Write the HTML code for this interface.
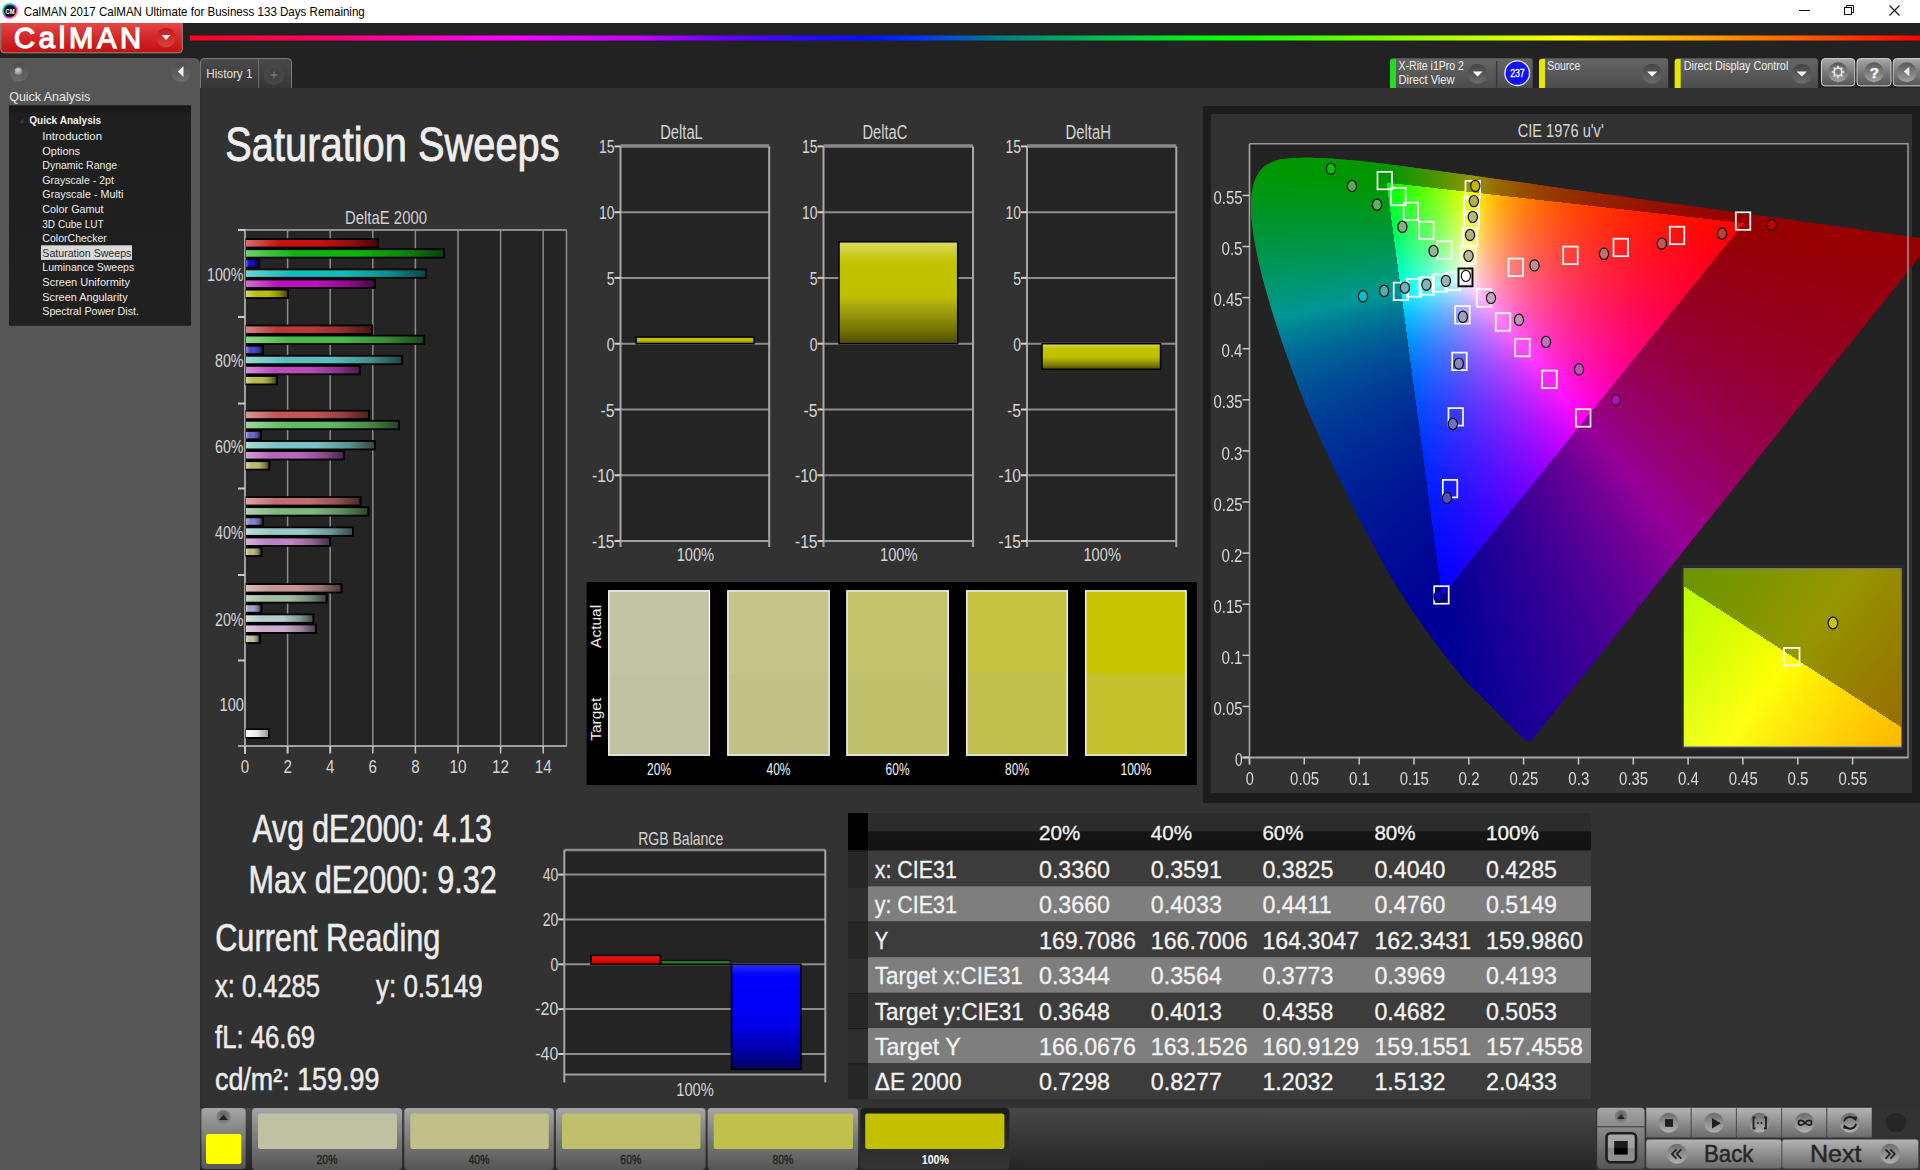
<!DOCTYPE html>
<html><head><meta charset="utf-8"><title>CalMAN</title>
<style>
html,body{margin:0;padding:0;background:#323232;overflow:hidden;width:1920px;height:1170px}
svg{position:absolute;left:0;top:0;font-family:"Liberation Sans",sans-serif}
#cie{position:absolute;left:0;top:0}
</style></head><body>
<svg id="base" width="1920" height="1170" viewBox="0 0 1920 1170">
<defs><linearGradient id="iconring" x1="0" y1="0" x2="1" y2="1"><stop offset="0" stop-color="#00d000"/><stop offset="0.35" stop-color="#00c0ff"/><stop offset="0.6" stop-color="#ff00ff"/><stop offset="1" stop-color="#ffe000"/></linearGradient><linearGradient id="logo" x1="0" y1="0" x2="0" y2="1"><stop offset="0.000" stop-color="#e54848"/><stop offset="0.450" stop-color="#d42a2a"/><stop offset="1.000" stop-color="#c41010"/></linearGradient><linearGradient id="logodd" x1="0" y1="0" x2="0" y2="1"><stop offset="0.000" stop-color="#c0181c"/><stop offset="1.000" stop-color="#e04040"/></linearGradient><linearGradient id="rainbow" gradientUnits="userSpaceOnUse" x1="190" y1="0" x2="1920" y2="0"><stop offset="0.000" stop-color="#ff0020"/><stop offset="0.073" stop-color="#ff0060"/><stop offset="0.180" stop-color="#ff00ff"/><stop offset="0.260" stop-color="#c000ff"/><stop offset="0.312" stop-color="#6000ff"/><stop offset="0.392" stop-color="#0010ff"/><stop offset="0.418" stop-color="#0030ff"/><stop offset="0.471" stop-color="#008080"/><stop offset="0.545" stop-color="#00d040"/><stop offset="0.597" stop-color="#00ff00"/><stop offset="0.717" stop-color="#a0ff00"/><stop offset="0.796" stop-color="#ffff00"/><stop offset="0.876" stop-color="#ffa000"/><stop offset="0.929" stop-color="#ff6000"/><stop offset="1.000" stop-color="#ff0000"/></linearGradient><linearGradient id="side" x1="0" y1="0" x2="0" y2="1"><stop offset="0.000" stop-color="#585858"/><stop offset="0.050" stop-color="#555555"/><stop offset="1.000" stop-color="#555555"/></linearGradient><linearGradient id="glow" x1="0" y1="0" x2="0" y2="1"><stop offset="0.000" stop-color="#4e4e4e"/><stop offset="1.000" stop-color="#6c6c6c"/></linearGradient><radialGradient id="ball" cx="0.4" cy="0.35" r="0.7"><stop offset="0" stop-color="#d8d8d8"/><stop offset="1" stop-color="#7a7a7a"/></radialGradient><linearGradient id="tree" x1="0" y1="0" x2="0" y2="1"><stop offset="0.000" stop-color="#151515"/><stop offset="0.040" stop-color="#1f1f1f"/><stop offset="1.000" stop-color="#202020"/></linearGradient><linearGradient id="tab" x1="0" y1="0" x2="0" y2="1"><stop offset="0.000" stop-color="#4a4a4a"/><stop offset="1.000" stop-color="#363636"/></linearGradient><radialGradient id="plus"><stop offset="0" stop-color="#3a3a3a"/><stop offset="1" stop-color="#4a4a4a"/></radialGradient><linearGradient id="tbox" x1="0" y1="0" x2="0" y2="1"><stop offset="0.000" stop-color="#666666"/><stop offset="1.000" stop-color="#4c4c4c"/></linearGradient><linearGradient id="ddc" x1="0" y1="0" x2="0" y2="1"><stop offset="0.000" stop-color="#444444"/><stop offset="1.000" stop-color="#6c6c6c"/></linearGradient><linearGradient id="sqbtn" x1="0" y1="0" x2="0" y2="1"><stop offset="0.000" stop-color="#a8a8a8"/><stop offset="0.500" stop-color="#7a7a7a"/><stop offset="1.000" stop-color="#555555"/></linearGradient><linearGradient id="sqc" x1="0" y1="0" x2="0" y2="1"><stop offset="0.000" stop-color="#585858"/><stop offset="1.000" stop-color="#a2a2a2"/></linearGradient><linearGradient id="bar0" x1="0" y1="0" x2="1" y2="0"><stop offset="0.000" stop-color="#dd6b6b"/><stop offset="0.250" stop-color="#c81010"/><stop offset="0.550" stop-color="#c81010"/><stop offset="0.800" stop-color="#960c0c"/><stop offset="1.000" stop-color="#4c0606"/></linearGradient><linearGradient id="bar1" x1="0" y1="0" x2="1" y2="0"><stop offset="0.000" stop-color="#6bd06b"/><stop offset="0.250" stop-color="#10b410"/><stop offset="0.550" stop-color="#10b410"/><stop offset="0.800" stop-color="#0c870c"/><stop offset="1.000" stop-color="#064406"/></linearGradient><linearGradient id="bar2" x1="0" y1="0" x2="1" y2="0"><stop offset="0.000" stop-color="#6b6bdd"/><stop offset="0.250" stop-color="#1010c8"/><stop offset="0.550" stop-color="#1010c8"/><stop offset="0.800" stop-color="#0c0c96"/><stop offset="1.000" stop-color="#06064c"/></linearGradient><linearGradient id="bar3" x1="0" y1="0" x2="1" y2="0"><stop offset="0.000" stop-color="#6bd5d5"/><stop offset="0.250" stop-color="#10bcbc"/><stop offset="0.550" stop-color="#10bcbc"/><stop offset="0.800" stop-color="#0c8d8d"/><stop offset="1.000" stop-color="#064747"/></linearGradient><linearGradient id="bar4" x1="0" y1="0" x2="1" y2="0"><stop offset="0.000" stop-color="#d56bd5"/><stop offset="0.250" stop-color="#bc10bc"/><stop offset="0.550" stop-color="#bc10bc"/><stop offset="0.800" stop-color="#8d0c8d"/><stop offset="1.000" stop-color="#470647"/></linearGradient><linearGradient id="bar5" x1="0" y1="0" x2="1" y2="0"><stop offset="0.000" stop-color="#d5d56b"/><stop offset="0.250" stop-color="#bcbc10"/><stop offset="0.550" stop-color="#bcbc10"/><stop offset="0.800" stop-color="#8d8d0c"/><stop offset="1.000" stop-color="#474706"/></linearGradient><linearGradient id="bar6" x1="0" y1="0" x2="1" y2="0"><stop offset="0.000" stop-color="#d48484"/><stop offset="0.250" stop-color="#ba3838"/><stop offset="0.550" stop-color="#ba3838"/><stop offset="0.800" stop-color="#8c2a2a"/><stop offset="1.000" stop-color="#471515"/></linearGradient><linearGradient id="bar7" x1="0" y1="0" x2="1" y2="0"><stop offset="0.000" stop-color="#8cd48c"/><stop offset="0.250" stop-color="#46b946"/><stop offset="0.550" stop-color="#46b946"/><stop offset="0.800" stop-color="#348b34"/><stop offset="1.000" stop-color="#1b461b"/></linearGradient><linearGradient id="bar8" x1="0" y1="0" x2="1" y2="0"><stop offset="0.000" stop-color="#8c8cdd"/><stop offset="0.250" stop-color="#4646c8"/><stop offset="0.550" stop-color="#4646c8"/><stop offset="0.800" stop-color="#343496"/><stop offset="1.000" stop-color="#1b1b4c"/></linearGradient><linearGradient id="bar9" x1="0" y1="0" x2="1" y2="0"><stop offset="0.000" stop-color="#99d7d7"/><stop offset="0.250" stop-color="#5abebe"/><stop offset="0.550" stop-color="#5abebe"/><stop offset="0.800" stop-color="#448e8e"/><stop offset="1.000" stop-color="#224848"/></linearGradient><linearGradient id="bar10" x1="0" y1="0" x2="1" y2="0"><stop offset="0.000" stop-color="#d48fd7"/><stop offset="0.250" stop-color="#b94bbe"/><stop offset="0.550" stop-color="#b94bbe"/><stop offset="0.800" stop-color="#8b388e"/><stop offset="1.000" stop-color="#461c48"/></linearGradient><linearGradient id="bar11" x1="0" y1="0" x2="1" y2="0"><stop offset="0.000" stop-color="#d4d492"/><stop offset="0.250" stop-color="#b9b950"/><stop offset="0.550" stop-color="#b9b950"/><stop offset="0.800" stop-color="#8b8b3c"/><stop offset="1.000" stop-color="#46461e"/></linearGradient><linearGradient id="bar12" x1="0" y1="0" x2="1" y2="0"><stop offset="0.000" stop-color="#da9696"/><stop offset="0.250" stop-color="#c35555"/><stop offset="0.550" stop-color="#c35555"/><stop offset="0.800" stop-color="#924040"/><stop offset="1.000" stop-color="#4a2020"/></linearGradient><linearGradient id="bar13" x1="0" y1="0" x2="1" y2="0"><stop offset="0.000" stop-color="#9fd49f"/><stop offset="0.250" stop-color="#64b964"/><stop offset="0.550" stop-color="#64b964"/><stop offset="0.800" stop-color="#4b8b4b"/><stop offset="1.000" stop-color="#264626"/></linearGradient><linearGradient id="bar14" x1="0" y1="0" x2="1" y2="0"><stop offset="0.000" stop-color="#a2a2dd"/><stop offset="0.250" stop-color="#6969c8"/><stop offset="0.550" stop-color="#6969c8"/><stop offset="0.800" stop-color="#4f4f96"/><stop offset="1.000" stop-color="#28284c"/></linearGradient><linearGradient id="bar15" x1="0" y1="0" x2="1" y2="0"><stop offset="0.000" stop-color="#abdada"/><stop offset="0.250" stop-color="#78c3c3"/><stop offset="0.550" stop-color="#78c3c3"/><stop offset="0.800" stop-color="#5a9292"/><stop offset="1.000" stop-color="#2e4a4a"/></linearGradient><linearGradient id="bar16" x1="0" y1="0" x2="1" y2="0"><stop offset="0.000" stop-color="#d49fd7"/><stop offset="0.250" stop-color="#b964be"/><stop offset="0.550" stop-color="#b964be"/><stop offset="0.800" stop-color="#8b4b8e"/><stop offset="1.000" stop-color="#462648"/></linearGradient><linearGradient id="bar17" x1="0" y1="0" x2="1" y2="0"><stop offset="0.000" stop-color="#d4d4a2"/><stop offset="0.250" stop-color="#b9b969"/><stop offset="0.550" stop-color="#b9b969"/><stop offset="0.800" stop-color="#8b8b4f"/><stop offset="1.000" stop-color="#464628"/></linearGradient><linearGradient id="bar18" x1="0" y1="0" x2="1" y2="0"><stop offset="0.000" stop-color="#daa5a5"/><stop offset="0.250" stop-color="#c36e6e"/><stop offset="0.550" stop-color="#c36e6e"/><stop offset="0.800" stop-color="#925252"/><stop offset="1.000" stop-color="#4a2a2a"/></linearGradient><linearGradient id="bar19" x1="0" y1="0" x2="1" y2="0"><stop offset="0.000" stop-color="#aed4ae"/><stop offset="0.250" stop-color="#7db97d"/><stop offset="0.550" stop-color="#7db97d"/><stop offset="0.800" stop-color="#5e8b5e"/><stop offset="1.000" stop-color="#304630"/></linearGradient><linearGradient id="bar20" x1="0" y1="0" x2="1" y2="0"><stop offset="0.000" stop-color="#b2b2dd"/><stop offset="0.250" stop-color="#8282c8"/><stop offset="0.550" stop-color="#8282c8"/><stop offset="0.800" stop-color="#626296"/><stop offset="1.000" stop-color="#31314c"/></linearGradient><linearGradient id="bar21" x1="0" y1="0" x2="1" y2="0"><stop offset="0.000" stop-color="#bedddd"/><stop offset="0.250" stop-color="#96c8c8"/><stop offset="0.550" stop-color="#96c8c8"/><stop offset="0.800" stop-color="#709696"/><stop offset="1.000" stop-color="#394c4c"/></linearGradient><linearGradient id="bar22" x1="0" y1="0" x2="1" y2="0"><stop offset="0.000" stop-color="#d7b2da"/><stop offset="0.250" stop-color="#be82c3"/><stop offset="0.550" stop-color="#be82c3"/><stop offset="0.800" stop-color="#8e6292"/><stop offset="1.000" stop-color="#48314a"/></linearGradient><linearGradient id="bar23" x1="0" y1="0" x2="1" y2="0"><stop offset="0.000" stop-color="#d4d4b2"/><stop offset="0.250" stop-color="#b9b982"/><stop offset="0.550" stop-color="#b9b982"/><stop offset="0.800" stop-color="#8b8b62"/><stop offset="1.000" stop-color="#464631"/></linearGradient><linearGradient id="bar24" x1="0" y1="0" x2="1" y2="0"><stop offset="0.000" stop-color="#ddbebe"/><stop offset="0.250" stop-color="#c89696"/><stop offset="0.550" stop-color="#c89696"/><stop offset="0.800" stop-color="#967070"/><stop offset="1.000" stop-color="#4c3939"/></linearGradient><linearGradient id="bar25" x1="0" y1="0" x2="1" y2="0"><stop offset="0.000" stop-color="#c4d7c4"/><stop offset="0.250" stop-color="#a0bea0"/><stop offset="0.550" stop-color="#a0bea0"/><stop offset="0.800" stop-color="#788e78"/><stop offset="1.000" stop-color="#3d483d"/></linearGradient><linearGradient id="bar26" x1="0" y1="0" x2="1" y2="0"><stop offset="0.000" stop-color="#c4c4dd"/><stop offset="0.250" stop-color="#a0a0c8"/><stop offset="0.550" stop-color="#a0a0c8"/><stop offset="0.800" stop-color="#787896"/><stop offset="1.000" stop-color="#3d3d4c"/></linearGradient><linearGradient id="bar27" x1="0" y1="0" x2="1" y2="0"><stop offset="0.000" stop-color="#d0e0e0"/><stop offset="0.250" stop-color="#b4cdcd"/><stop offset="0.550" stop-color="#b4cdcd"/><stop offset="0.800" stop-color="#879a9a"/><stop offset="1.000" stop-color="#444e4e"/></linearGradient><linearGradient id="bar28" x1="0" y1="0" x2="1" y2="0"><stop offset="0.000" stop-color="#e0cae0"/><stop offset="0.250" stop-color="#cdaacd"/><stop offset="0.550" stop-color="#cdaacd"/><stop offset="0.800" stop-color="#9a809a"/><stop offset="1.000" stop-color="#4e414e"/></linearGradient><linearGradient id="bar29" x1="0" y1="0" x2="1" y2="0"><stop offset="0.000" stop-color="#d7d7c4"/><stop offset="0.250" stop-color="#bebea0"/><stop offset="0.550" stop-color="#bebea0"/><stop offset="0.800" stop-color="#8e8e78"/><stop offset="1.000" stop-color="#48483d"/></linearGradient><linearGradient id="barw" x1="0" y1="0" x2="1" y2="0"><stop offset="0.000" stop-color="#ffffff"/><stop offset="0.500" stop-color="#e8e8e8"/><stop offset="1.000" stop-color="#999999"/></linearGradient><linearGradient id="ybar" x1="0" y1="0" x2="0" y2="1"><stop offset="0.000" stop-color="#dada60"/><stop offset="0.200" stop-color="#c2c200"/><stop offset="0.520" stop-color="#c0c000"/><stop offset="0.700" stop-color="#9a9a10"/><stop offset="0.850" stop-color="#787800"/><stop offset="1.000" stop-color="#4a4a00"/></linearGradient><clipPath id="hsout"><path clip-rule="evenodd" d="M1531.1 740.5 L1530.6 740.6 L1529.8 740.7 L1529.0 740.7 L1528.0 740.8 L1527.0 740.6 L1526.0 740.2 L1525.1 739.7 L1524.1 738.9 L1523.2 738.1 L1522.1 737.1 L1520.8 735.8 L1519.3 734.4 L1517.7 732.8 L1515.9 731.0 L1514.0 729.0 L1511.8 726.8 L1509.5 724.4 L1506.8 721.7 L1504.0 718.9 L1501.0 716.0 L1497.8 712.8 L1494.3 709.3 L1490.6 705.5 L1486.5 701.3 L1482.1 696.9 L1477.5 692.5 L1472.6 687.7 L1467.3 682.3 L1461.6 676.0 L1455.3 668.5 L1448.1 659.4 L1440.0 648.7 L1431.5 637.2 L1422.9 625.4 L1414.8 613.8 L1407.5 603.2 L1401.3 593.6 L1395.7 584.7 L1390.6 576.1 L1385.6 567.4 L1380.6 558.3 L1375.3 548.6 L1369.6 538.1 L1363.8 527.2 L1357.9 515.9 L1352.0 504.3 L1346.1 492.5 L1340.3 480.7 L1334.5 468.8 L1328.7 456.6 L1322.9 444.2 L1317.2 431.7 L1311.8 419.4 L1306.6 407.3 L1301.7 395.2 L1297.0 383.1 L1292.5 371.1 L1288.3 359.3 L1284.2 347.8 L1280.4 336.7 L1276.9 326.0 L1273.5 315.6 L1270.4 305.4 L1267.6 295.6 L1264.9 286.3 L1262.5 277.4 L1260.4 269.0 L1258.6 261.0 L1257.0 253.4 L1255.6 246.3 L1254.4 239.5 L1253.3 233.1 L1252.5 227.1 L1251.8 221.5 L1251.4 216.3 L1251.1 211.5 L1251.0 206.9 L1251.0 202.5 L1251.2 198.3 L1251.6 194.4 L1252.1 190.8 L1252.8 187.4 L1253.6 184.3 L1254.5 181.3 L1255.6 178.5 L1256.9 176.0 L1258.2 173.7 L1259.7 171.5 L1261.3 169.6 L1263.0 167.8 L1264.7 166.2 L1266.6 164.9 L1268.6 163.7 L1270.6 162.7 L1272.7 161.8 L1274.8 161.0 L1277.0 160.3 L1279.3 159.8 L1281.7 159.3 L1284.1 159.0 L1286.5 158.8 L1289.0 158.5 L1291.5 158.3 L1294.0 158.1 L1296.6 158.0 L1299.2 157.9 L1301.8 157.8 L1304.4 157.8 L1307.0 157.8 L1309.6 157.8 L1312.2 157.8 L1314.8 157.9 L1317.4 158.0 L1320.0 158.1 L1322.7 158.2 L1325.3 158.3 L1328.0 158.5 L1330.8 158.6 L1333.5 158.8 L1336.3 159.0 L1339.2 159.2 L1342.1 159.5 L1345.0 159.7 L1348.0 160.0 L1351.0 160.3 L1354.0 160.5 L1356.8 160.8 L1359.3 161.1 L1361.9 161.3 L1364.8 161.6 L1368.4 162.0 L1373.1 162.6 L1378.9 163.3 L1385.6 164.1 L1393.0 165.1 L1400.9 166.1 L1409.1 167.1 L1417.4 168.2 L1425.7 169.3 L1434.3 170.5 L1443.2 171.7 L1452.4 172.9 L1461.8 174.2 L1471.7 175.6 L1481.8 177.0 L1492.3 178.5 L1503.0 180.0 L1514.1 181.5 L1525.5 183.1 L1537.1 184.8 L1549.1 186.4 L1561.5 188.2 L1574.2 189.9 L1587.1 191.7 L1600.0 193.5 L1613.0 195.3 L1626.1 197.1 L1639.3 199.0 L1652.7 200.9 L1666.0 202.7 L1679.1 204.6 L1691.9 206.3 L1704.5 208.1 L1717.1 209.8 L1729.4 211.5 L1741.4 213.1 L1753.0 214.7 L1764.0 216.2 L1774.4 217.7 L1784.4 219.1 L1794.0 220.5 L1803.1 221.7 L1811.8 223.0 L1820.0 224.1 L1827.7 225.2 L1834.8 226.2 L1841.5 227.1 L1847.9 228.0 L1853.9 228.8 L1859.7 229.6 L1865.3 230.4 L1870.5 231.2 L1875.5 231.9 L1880.2 232.5 L1884.6 233.1 L1888.8 233.7 L1892.5 234.2 L1895.7 234.7 L1898.6 235.1 L1901.5 235.5 L1904.5 235.9 L1907.9 236.4 L1912.1 237.0 L1916.8 237.6 L1921.7 238.3 L1926.3 238.9 L1930.3 239.5 L1933.1 239.9 Z M1386.6 182.6 L1743.7 223.1 L1441.8 596.1 Z"/></clipPath><clipPath id="hsin"><path d="M1386.6 182.6 L1743.7 223.1 L1441.8 596.1 Z"/></clipPath><filter id="fb" x="-5%" y="-5%" width="110%" height="110%"><feGaussianBlur stdDeviation="7"/></filter><linearGradient id="insA" x1="0" y1="0" x2="1" y2="1"><stop offset="0" stop-color="#a8ff00"/><stop offset="0.5" stop-color="#ffff10"/><stop offset="1" stop-color="#ffb000"/></linearGradient><linearGradient id="insB" x1="0" y1="0" x2="1" y2="1"><stop offset="0" stop-color="#609600"/><stop offset="0.5" stop-color="#969600"/><stop offset="1" stop-color="#966800"/></linearGradient><linearGradient id="rbar" x1="0" y1="0" x2="0" y2="1"><stop offset="0.000" stop-color="#ff4040"/><stop offset="0.200" stop-color="#ee1010"/><stop offset="0.800" stop-color="#d00000"/><stop offset="1.000" stop-color="#800000"/></linearGradient><linearGradient id="gbar" x1="0" y1="0" x2="0" y2="1"><stop offset="0.000" stop-color="#30a030"/><stop offset="1.000" stop-color="#105010"/></linearGradient><linearGradient id="bbar" x1="0" y1="0" x2="0" y2="1"><stop offset="0.000" stop-color="#3030ff"/><stop offset="0.100" stop-color="#0000ff"/><stop offset="0.550" stop-color="#0000f0"/><stop offset="0.850" stop-color="#0000a0"/><stop offset="1.000" stop-color="#000060"/></linearGradient><linearGradient id="thead" x1="0" y1="0" x2="0" y2="1"><stop offset="0.000" stop-color="#2c2c2c"/><stop offset="0.470" stop-color="#2c2c2c"/><stop offset="0.500" stop-color="#151515"/><stop offset="1.000" stop-color="#141414"/></linearGradient><linearGradient id="stripbg" x1="0" y1="0" x2="0" y2="1"><stop offset="0.000" stop-color="#484848"/><stop offset="1.000" stop-color="#252525"/></linearGradient><linearGradient id="sbtn" x1="0" y1="0" x2="0" y2="1"><stop offset="0.000" stop-color="#a6a6a6"/><stop offset="0.300" stop-color="#8a8a8a"/><stop offset="1.000" stop-color="#555555"/></linearGradient><radialGradient id="upc" cx="0.5" cy="0.4" r="0.6"><stop offset="0" stop-color="#5a5a5a"/><stop offset="1" stop-color="#8a8a8a"/></radialGradient><linearGradient id="selbtn" x1="0" y1="0" x2="0" y2="1"><stop offset="0.000" stop-color="#1c1c1c"/><stop offset="1.000" stop-color="#353535"/></linearGradient><linearGradient id="stopfr" x1="0" y1="0" x2="0" y2="1"><stop offset="0.000" stop-color="#a8a8a8"/><stop offset="0.500" stop-color="#a0a0a0"/><stop offset="0.500" stop-color="#8a8a8a"/><stop offset="1.000" stop-color="#909090"/></linearGradient><linearGradient id="stopsq" x1="0" y1="0" x2="0" y2="1"><stop offset="0.000" stop-color="#1c1c1c"/><stop offset="0.500" stop-color="#1a1a1a"/><stop offset="0.500" stop-color="#000000"/><stop offset="1.000" stop-color="#000000"/></linearGradient><linearGradient id="nbtn" x1="0" y1="0" x2="0" y2="1"><stop offset="0.000" stop-color="#b4b4b4"/><stop offset="1.000" stop-color="#6a6a6a"/></linearGradient><linearGradient id="ncirc" x1="0" y1="0" x2="0" y2="1"><stop offset="0.000" stop-color="#6c6c6c"/><stop offset="1.000" stop-color="#b2b2b2"/></linearGradient></defs>
<rect x="0.0" y="0.0" width="1920.0" height="1170.0" fill="#323232" />
<rect x="0.0" y="0.0" width="1920.0" height="23.0" fill="#ffffff" />
<circle cx="10" cy="11" r="7.8" fill="url(#iconring)"/>
<circle cx="10" cy="11" r="6" fill="#111"/>
<text x="10" y="13.6" font-size="6.5" font-weight="bold" fill="#fff" text-anchor="middle" textLength="9" lengthAdjust="spacingAndGlyphs">CM</text>
<text x="23.8" y="16.3" font-size="12.79" fill="#000" textLength="341.0" lengthAdjust="spacingAndGlyphs" >CalMAN 2017 CalMAN Ultimate for Business 133 Days Remaining</text>
<line x1="1799.0" y1="10.5" x2="1810.0" y2="10.5" stroke="#111" stroke-width="1.00" />
<rect x="1844.5" y="7.5" width="7" height="7" fill="none" stroke="#111" stroke-width="1"/>
<path d="M1846.5 7.5 V5.5 H1853.5 V12.5 H1851.5" fill="none" stroke="#111" stroke-width="1"/>
<line x1="1889.5" y1="5.5" x2="1899.5" y2="15.5" stroke="#111" stroke-width="1.10" />
<line x1="1899.5" y1="5.5" x2="1889.5" y2="15.5" stroke="#111" stroke-width="1.10" />
<rect x="0.0" y="23.0" width="1920.0" height="65.0" fill="#222222" />
<path d="M0.5 23 H182.3 V49.5 Q182.3 52.8 179 52.8 H4 Q0.5 52.8 0.5 49.5 Z" fill="url(#logo)"/>
<path d="M182.3 23 V49.5 Q182.3 52.8 179 52.8 H4 Q0.8 52.8 0.8 49.5 V23" fill="none" stroke="#9a9a9a" stroke-width="0.9"/>
<text x="14.0" y="48.2" font-size="29.2" fill="#ffffff" stroke="#ffffff" stroke-width="1.3" textLength="127.2" lengthAdjust="spacing">CalMAN</text>
<circle cx="166" cy="37.5" r="9.8" fill="url(#logodd)"/>
<path d="M161.5 35 H170.5 L166 40 Z" fill="#fff"/>
<rect x="190.0" y="35.5" width="1730.0" height="5.0" fill="url(#rainbow)" />
<path d="M0 58 H194 Q200 58 200 64 V1170 H0 Z" fill="#565656"/>
<circle cx="19" cy="72" r="9.5" fill="url(#glow)"/>
<circle cx="18.5" cy="71.2" r="3.8" fill="url(#ball)"/>
<circle cx="181" cy="72" r="10" fill="url(#glow)"/>
<path d="M177.8 71.5 L183.5 66 V77 Z" fill="#f4f4f4"/>
<text x="9.2" y="100.6" font-size="11.92" fill="#e8e8e8" textLength="81.0" lengthAdjust="spacingAndGlyphs" >Quick Analysis</text>
<rect x="9.0" y="105.3" width="182.0" height="220.5" fill="url(#tree)" />
<path d="M19 123 L23.5 118.5 V123 Z" fill="#3a3a3a"/>
<text x="29.2" y="123.5" font-size="10.90" fill="#f0f0f0" font-weight="bold" textLength="72.0" lengthAdjust="spacingAndGlyphs" >Quick Analysis</text>
<text x="42.3" y="139.9" font-size="10.76" fill="#ececec" textLength="59.8" lengthAdjust="spacingAndGlyphs" >Introduction</text>
<text x="42.3" y="154.5" font-size="10.76" fill="#ececec" textLength="37.8" lengthAdjust="spacingAndGlyphs" >Options</text>
<text x="42.3" y="169.1" font-size="10.76" fill="#ececec" textLength="74.8" lengthAdjust="spacingAndGlyphs" >Dynamic Range</text>
<text x="42.3" y="183.7" font-size="10.76" fill="#ececec" textLength="71.6" lengthAdjust="spacingAndGlyphs" >Grayscale - 2pt</text>
<text x="42.3" y="198.3" font-size="10.76" fill="#ececec" textLength="81.0" lengthAdjust="spacingAndGlyphs" >Grayscale - Multi</text>
<text x="42.3" y="212.9" font-size="10.76" fill="#ececec" textLength="61.3" lengthAdjust="spacingAndGlyphs" >Color Gamut</text>
<text x="42.3" y="227.5" font-size="10.76" fill="#ececec" textLength="61.3" lengthAdjust="spacingAndGlyphs" >3D Cube LUT</text>
<text x="42.3" y="242.1" font-size="10.76" fill="#ececec" textLength="64.5" lengthAdjust="spacingAndGlyphs" >ColorChecker</text>
<rect x="41.0" y="245.3" width="91.0" height="14.6" fill="#dadada" />
<text x="42.3" y="256.7" font-size="10.76" fill="#2a2a2a" textLength="89.1" lengthAdjust="spacingAndGlyphs" >Saturation Sweeps</text>
<text x="42.3" y="271.3" font-size="10.76" fill="#ececec" textLength="91.9" lengthAdjust="spacingAndGlyphs" >Luminance Sweeps</text>
<text x="42.3" y="285.9" font-size="10.76" fill="#ececec" textLength="87.6" lengthAdjust="spacingAndGlyphs" >Screen Uniformity</text>
<text x="42.3" y="300.5" font-size="10.76" fill="#ececec" textLength="85.3" lengthAdjust="spacingAndGlyphs" >Screen Angularity</text>
<text x="42.3" y="315.1" font-size="10.76" fill="#ececec" textLength="96.6" lengthAdjust="spacingAndGlyphs" >Spectral Power Dist.</text>
<path d="M200.5 88 V62 Q200.5 58.5 204 58.5 H287.5 Q291.5 58.5 291.5 62 V88 Z" fill="url(#tab)"/>
<path d="M200.5 88 V62 Q200.5 58.5 204 58.5 H287.5 Q291.5 58.5 291.5 62 V88" fill="none" stroke="#7a7a7a" stroke-width="1"/>
<line x1="258.5" y1="59.0" x2="258.5" y2="88.0" stroke="#6a6a6a" stroke-width="1.00" />
<text x="206.3" y="78.1" font-size="13.37" fill="#e0e0e0" textLength="46.2" lengthAdjust="spacingAndGlyphs" >History 1</text>
<circle cx="274" cy="75" r="10" fill="url(#plus)"/>
<line x1="270.5" y1="75.0" x2="277.5" y2="75.0" stroke="#8a8a8a" stroke-width="1.00" />
<line x1="274.0" y1="71.5" x2="274.0" y2="78.5" stroke="#8a8a8a" stroke-width="1.00" />
<rect x="200.0" y="88.0" width="1720.0" height="1017.0" fill="#323232" />
<rect x="200.0" y="88.0" width="1.2" height="1082.0" fill="#2a2a2a" />
<path d="M1390.0 88 V61 Q1390.0 58.2 1393.0 58.2 H1529.7 Q1532.7 58.2 1532.7 61 V88 Z" fill="url(#tbox)"/>
<path d="M1390.0 88 V62 Q1390.0 59 1393.0 59 H1396.0 V88 Z" fill="#22dd22"/>
<text x="1398.6" y="70.3" font-size="12.50" fill="#f0f0f0" textLength="65.2" lengthAdjust="spacingAndGlyphs" >X-Rite i1Pro 2</text>
<text x="1398.6" y="84.4" font-size="12.50" fill="#f0f0f0" textLength="55.9" lengthAdjust="spacingAndGlyphs" >Direct View</text>
<circle cx="1477.6" cy="73.7" r="10" fill="url(#ddc)"/>
<path d="M1472.6 71.5 H1482.6 L1477.6 76.5 Z" fill="#fff"/>
<line x1="1496.7" y1="61.0" x2="1496.7" y2="88.0" stroke="#3a3a3a" stroke-width="1.50" />
<circle cx="1517.2" cy="73.2" r="12.3" fill="#1010ff" stroke="#e8e8ff" stroke-width="1.3"/>
<text x="1517.4" y="76.8" font-size="10.17" fill="#ffffff" text-anchor="middle" textLength="14.5" lengthAdjust="spacingAndGlyphs"  stroke="#ffffff" stroke-width="0.30">237</text>
<path d="M1539.0 88 V61 Q1539.0 58.2 1542.0 58.2 H1665.2 Q1668.2 58.2 1668.2 61 V88 Z" fill="url(#tbox)"/>
<path d="M1539.0 88 V62 Q1539.0 59 1542.0 59 H1545.0 V88 Z" fill="#e6e600"/>
<text x="1547.3" y="70.3" font-size="12.50" fill="#f0f0f0" textLength="32.9" lengthAdjust="spacingAndGlyphs" >Source</text>
<circle cx="1652.2" cy="73.7" r="10" fill="url(#ddc)"/>
<path d="M1647.2 71.5 H1657.2 L1652.2 76.5 Z" fill="#fff"/>
<path d="M1674.7 88 V61 Q1674.7 58.2 1677.7 58.2 H1814.9 Q1817.9 58.2 1817.9 61 V88 Z" fill="url(#tbox)"/>
<path d="M1674.7 88 V62 Q1674.7 59 1677.7 59 H1680.7 V88 Z" fill="#e6e600"/>
<text x="1683.7" y="70.3" font-size="12.50" fill="#f0f0f0" textLength="104.6" lengthAdjust="spacingAndGlyphs" >Direct Display Control</text>
<circle cx="1801.8" cy="73.7" r="10" fill="url(#ddc)"/>
<path d="M1796.8 71.5 H1806.8 L1801.8 76.5 Z" fill="#fff"/>
<rect x="1821.5" y="58.6" width="33.2" height="27.3" rx="3.5" fill="url(#sqbtn)" stroke="#d0d0d0" stroke-width="1"/>
<circle cx="1838.1" cy="72.3" r="10" fill="url(#sqc)"/>
<rect x="1857.0" y="58.6" width="34.0" height="27.3" rx="3.5" fill="url(#sqbtn)" stroke="#d0d0d0" stroke-width="1"/>
<circle cx="1874.0" cy="72.3" r="10" fill="url(#sqc)"/>
<rect x="1893.2" y="58.6" width="36.8" height="27.3" rx="3.5" fill="url(#sqbtn)" stroke="#d0d0d0" stroke-width="1"/>
<circle cx="1906.8" cy="72.3" r="10" fill="url(#sqc)"/>
<path d="M1836.38 67.69 L1837.55 65.62 L1838.45 65.62 L1839.62 67.69 L1839.90 67.81 L1842.20 67.17 L1842.83 67.80 L1842.19 70.10 L1842.31 70.38 L1844.38 71.55 L1844.38 72.45 L1842.31 73.62 L1842.19 73.90 L1842.83 76.20 L1842.20 76.83 L1839.90 76.19 L1839.62 76.31 L1838.45 78.38 L1837.55 78.38 L1836.38 76.31 L1836.10 76.19 L1833.80 76.83 L1833.17 76.20 L1833.81 73.90 L1833.69 73.62 L1831.62 72.45 L1831.62 71.55 L1833.69 70.38 L1833.81 70.10 L1833.17 67.80 L1833.80 67.17 L1836.10 67.81 Z M1838.0 72.0 m-3 0 a3 3 0 1 0 6 0 a3 3 0 1 0 -6 0 Z" fill="#dedede" fill-rule="evenodd"/>
<text x="1874.4" y="77.9" font-size="15.2" font-weight="bold" fill="#f4f4f4" stroke="#f4f4f4" stroke-width="0.5" text-anchor="middle">?</text>
<path d="M1903.8 71.5 L1909.3 66.7 V76.3 Z" fill="#f4f4f4"/>
<text x="225.3" y="160.7" font-size="47.97" fill="#eeeeee" textLength="334.4" lengthAdjust="spacingAndGlyphs"  stroke="#eeeeee" stroke-width="0.80">Saturation Sweeps</text>
<rect x="245.0" y="230.0" width="321.5" height="516.0" fill="#242424" />
<line x1="287.6" y1="230.0" x2="287.6" y2="746.0" stroke="#8c8c8c" stroke-width="1.50" />
<line x1="330.2" y1="230.0" x2="330.2" y2="746.0" stroke="#8c8c8c" stroke-width="1.50" />
<line x1="372.8" y1="230.0" x2="372.8" y2="746.0" stroke="#8c8c8c" stroke-width="1.50" />
<line x1="415.4" y1="230.0" x2="415.4" y2="746.0" stroke="#8c8c8c" stroke-width="1.50" />
<line x1="458.0" y1="230.0" x2="458.0" y2="746.0" stroke="#8c8c8c" stroke-width="1.50" />
<line x1="500.6" y1="230.0" x2="500.6" y2="746.0" stroke="#8c8c8c" stroke-width="1.50" />
<line x1="543.2" y1="230.0" x2="543.2" y2="746.0" stroke="#8c8c8c" stroke-width="1.50" />
<line x1="245.0" y1="230.0" x2="566.5" y2="230.0" stroke="#8c8c8c" stroke-width="2.00" />
<line x1="566.5" y1="230.0" x2="566.5" y2="746.0" stroke="#8c8c8c" stroke-width="1.50" />
<line x1="245.0" y1="229.0" x2="245.0" y2="754.0" stroke="#a0a0a0" stroke-width="2.00" />
<line x1="238.0" y1="746.0" x2="566.5" y2="746.0" stroke="#a0a0a0" stroke-width="2.00" />
<line x1="245.0" y1="746.0" x2="245.0" y2="753.5" stroke="#c8c8c8" stroke-width="2.00" />
<text x="245.0" y="773.0" font-size="18.90" fill="#d6d6d6" text-anchor="middle" textLength="8.4" lengthAdjust="spacingAndGlyphs" >0</text>
<line x1="287.6" y1="746.0" x2="287.6" y2="753.5" stroke="#c8c8c8" stroke-width="2.00" />
<text x="287.6" y="773.0" font-size="18.90" fill="#d6d6d6" text-anchor="middle" textLength="8.4" lengthAdjust="spacingAndGlyphs" >2</text>
<line x1="330.2" y1="746.0" x2="330.2" y2="753.5" stroke="#c8c8c8" stroke-width="2.00" />
<text x="330.2" y="773.0" font-size="18.90" fill="#d6d6d6" text-anchor="middle" textLength="8.4" lengthAdjust="spacingAndGlyphs" >4</text>
<line x1="372.8" y1="746.0" x2="372.8" y2="753.5" stroke="#c8c8c8" stroke-width="1.50" />
<text x="372.8" y="773.0" font-size="18.90" fill="#d6d6d6" text-anchor="middle" textLength="8.4" lengthAdjust="spacingAndGlyphs" >6</text>
<line x1="415.4" y1="746.0" x2="415.4" y2="753.5" stroke="#c8c8c8" stroke-width="1.50" />
<text x="415.4" y="773.0" font-size="18.90" fill="#d6d6d6" text-anchor="middle" textLength="8.4" lengthAdjust="spacingAndGlyphs" >8</text>
<line x1="458.0" y1="746.0" x2="458.0" y2="753.5" stroke="#c8c8c8" stroke-width="1.50" />
<text x="458.0" y="773.0" font-size="18.90" fill="#d6d6d6" text-anchor="middle" textLength="17.0" lengthAdjust="spacingAndGlyphs" >10</text>
<line x1="500.6" y1="746.0" x2="500.6" y2="753.5" stroke="#c8c8c8" stroke-width="1.50" />
<text x="500.6" y="773.0" font-size="18.90" fill="#d6d6d6" text-anchor="middle" textLength="17.0" lengthAdjust="spacingAndGlyphs" >12</text>
<line x1="543.2" y1="746.0" x2="543.2" y2="753.5" stroke="#c8c8c8" stroke-width="1.50" />
<text x="543.2" y="773.0" font-size="18.90" fill="#d6d6d6" text-anchor="middle" textLength="17.0" lengthAdjust="spacingAndGlyphs" >14</text>
<line x1="238.0" y1="230.0" x2="245.0" y2="230.0" stroke="#c8c8c8" stroke-width="2.00" />
<line x1="238.0" y1="317.0" x2="245.0" y2="317.0" stroke="#c8c8c8" stroke-width="2.00" />
<line x1="238.0" y1="403.5" x2="245.0" y2="403.5" stroke="#c8c8c8" stroke-width="2.00" />
<line x1="238.0" y1="488.5" x2="245.0" y2="488.5" stroke="#c8c8c8" stroke-width="2.00" />
<line x1="238.0" y1="575.0" x2="245.0" y2="575.0" stroke="#c8c8c8" stroke-width="2.00" />
<line x1="238.0" y1="660.5" x2="245.0" y2="660.5" stroke="#c8c8c8" stroke-width="2.00" />
<text x="386.0" y="224.2" font-size="18.90" fill="#d0d0d0" text-anchor="middle" textLength="82.0" lengthAdjust="spacingAndGlyphs" >DeltaE 2000</text>
<text x="243.5" y="280.7" font-size="18.75" fill="#d6d6d6" text-anchor="end" textLength="36.5" lengthAdjust="spacingAndGlyphs" >100%</text>
<text x="243.5" y="366.7" font-size="18.75" fill="#d6d6d6" text-anchor="end" textLength="28.5" lengthAdjust="spacingAndGlyphs" >80%</text>
<text x="243.5" y="453.2" font-size="18.75" fill="#d6d6d6" text-anchor="end" textLength="28.5" lengthAdjust="spacingAndGlyphs" >60%</text>
<text x="243.5" y="539.3" font-size="18.75" fill="#d6d6d6" text-anchor="end" textLength="28.5" lengthAdjust="spacingAndGlyphs" >40%</text>
<text x="243.5" y="625.5" font-size="18.75" fill="#d6d6d6" text-anchor="end" textLength="28.5" lengthAdjust="spacingAndGlyphs" >20%</text>
<text x="244.0" y="711.1" font-size="18.90" fill="#d6d6d6" text-anchor="end" textLength="24.4" lengthAdjust="spacingAndGlyphs" >100</text>
<rect x="245.5" y="238.2" width="133.5" height="10.2" fill="#000000" />
<rect x="246.0" y="240.0" width="131.0" height="6.6" fill="url(#bar0)" />
<rect x="245.5" y="248.3" width="199.5" height="10.2" fill="#000000" />
<rect x="246.0" y="250.1" width="197.0" height="6.6" fill="url(#bar1)" />
<rect x="245.5" y="258.4" width="14.5" height="10.2" fill="#000000" />
<rect x="246.0" y="260.2" width="12.0" height="6.6" fill="url(#bar2)" />
<rect x="245.5" y="268.5" width="181.5" height="10.2" fill="#000000" />
<rect x="246.0" y="270.3" width="179.0" height="6.6" fill="url(#bar3)" />
<rect x="245.5" y="278.6" width="130.5" height="10.2" fill="#000000" />
<rect x="246.0" y="280.4" width="128.0" height="6.6" fill="url(#bar4)" />
<rect x="245.5" y="288.7" width="43.5" height="10.2" fill="#000000" />
<rect x="246.0" y="290.5" width="41.0" height="6.6" fill="url(#bar5)" />
<rect x="245.5" y="324.6" width="127.5" height="10.2" fill="#000000" />
<rect x="246.0" y="326.4" width="125.0" height="6.6" fill="url(#bar6)" />
<rect x="245.5" y="334.7" width="179.5" height="10.2" fill="#000000" />
<rect x="246.0" y="336.5" width="177.0" height="6.6" fill="url(#bar7)" />
<rect x="245.5" y="344.8" width="18.5" height="10.2" fill="#000000" />
<rect x="246.0" y="346.6" width="16.0" height="6.6" fill="url(#bar8)" />
<rect x="245.5" y="354.9" width="157.5" height="10.2" fill="#000000" />
<rect x="246.0" y="356.7" width="155.0" height="6.6" fill="url(#bar9)" />
<rect x="245.5" y="365.0" width="115.5" height="10.2" fill="#000000" />
<rect x="246.0" y="366.8" width="113.0" height="6.6" fill="url(#bar10)" />
<rect x="245.5" y="375.1" width="32.5" height="10.2" fill="#000000" />
<rect x="246.0" y="376.9" width="30.0" height="6.6" fill="url(#bar11)" />
<rect x="245.5" y="409.8" width="124.5" height="10.2" fill="#000000" />
<rect x="246.0" y="411.6" width="122.0" height="6.6" fill="url(#bar12)" />
<rect x="245.5" y="419.9" width="154.5" height="10.2" fill="#000000" />
<rect x="246.0" y="421.7" width="152.0" height="6.6" fill="url(#bar13)" />
<rect x="245.5" y="430.0" width="16.5" height="10.2" fill="#000000" />
<rect x="246.0" y="431.8" width="14.0" height="6.6" fill="url(#bar14)" />
<rect x="245.5" y="440.1" width="130.5" height="10.2" fill="#000000" />
<rect x="246.0" y="441.9" width="128.0" height="6.6" fill="url(#bar15)" />
<rect x="245.5" y="450.2" width="99.5" height="10.2" fill="#000000" />
<rect x="246.0" y="452.0" width="97.0" height="6.6" fill="url(#bar16)" />
<rect x="245.5" y="460.3" width="25.0" height="10.2" fill="#000000" />
<rect x="246.0" y="462.1" width="22.5" height="6.6" fill="url(#bar17)" />
<rect x="245.5" y="496.2" width="116.0" height="10.2" fill="#000000" />
<rect x="246.0" y="498.0" width="113.5" height="6.6" fill="url(#bar18)" />
<rect x="245.5" y="506.3" width="123.9" height="10.2" fill="#000000" />
<rect x="246.0" y="508.1" width="121.4" height="6.6" fill="url(#bar19)" />
<rect x="245.5" y="516.4" width="18.5" height="10.2" fill="#000000" />
<rect x="246.0" y="518.2" width="16.0" height="6.6" fill="url(#bar20)" />
<rect x="245.5" y="526.5" width="108.5" height="10.2" fill="#000000" />
<rect x="246.0" y="528.3" width="106.0" height="6.6" fill="url(#bar21)" />
<rect x="245.5" y="536.6" width="85.5" height="10.2" fill="#000000" />
<rect x="246.0" y="538.4" width="83.0" height="6.6" fill="url(#bar22)" />
<rect x="245.5" y="546.7" width="17.0" height="10.2" fill="#000000" />
<rect x="246.0" y="548.5" width="14.5" height="6.6" fill="url(#bar23)" />
<rect x="245.5" y="583.2" width="97.1" height="10.2" fill="#000000" />
<rect x="246.0" y="585.0" width="94.6" height="6.6" fill="url(#bar24)" />
<rect x="245.5" y="593.3" width="82.1" height="10.2" fill="#000000" />
<rect x="246.0" y="595.1" width="79.6" height="6.6" fill="url(#bar25)" />
<rect x="245.5" y="603.4" width="17.0" height="10.2" fill="#000000" />
<rect x="246.0" y="605.2" width="14.5" height="6.6" fill="url(#bar26)" />
<rect x="245.5" y="613.5" width="68.9" height="10.2" fill="#000000" />
<rect x="246.0" y="615.3" width="66.4" height="6.6" fill="url(#bar27)" />
<rect x="245.5" y="623.6" width="71.5" height="10.2" fill="#000000" />
<rect x="246.0" y="625.4" width="69.0" height="6.6" fill="url(#bar28)" />
<rect x="245.5" y="633.7" width="15.5" height="10.2" fill="#000000" />
<rect x="246.0" y="635.5" width="13.0" height="6.6" fill="url(#bar29)" />
<rect x="245.5" y="728.5" width="24.0" height="10.5" fill="#000" />
<rect x="246.0" y="730.0" width="22.0" height="7.0" fill="url(#barw)" />
<rect x="620.5" y="146.4" width="148.7" height="394.6" fill="#242424" />
<line x1="620.5" y1="212.2" x2="769.2" y2="212.2" stroke="#8c8c8c" stroke-width="2.00" />
<line x1="620.5" y1="277.9" x2="769.2" y2="277.9" stroke="#8c8c8c" stroke-width="2.00" />
<line x1="620.5" y1="343.7" x2="769.2" y2="343.7" stroke="#8c8c8c" stroke-width="2.00" />
<line x1="620.5" y1="409.5" x2="769.2" y2="409.5" stroke="#8c8c8c" stroke-width="2.00" />
<line x1="620.5" y1="475.2" x2="769.2" y2="475.2" stroke="#8c8c8c" stroke-width="2.00" />
<line x1="620.5" y1="145.9" x2="769.2" y2="145.9" stroke="#8a8a8a" stroke-width="3.50" />
<line x1="620.5" y1="146.4" x2="620.5" y2="547.0" stroke="#a8a8a8" stroke-width="2.00" />
<line x1="769.2" y1="146.4" x2="769.2" y2="547.0" stroke="#a8a8a8" stroke-width="2.00" />
<line x1="620.5" y1="541.0" x2="769.2" y2="541.0" stroke="#a0a0a0" stroke-width="2.00" />
<line x1="614.5" y1="146.4" x2="620.5" y2="146.4" stroke="#d0d0d0" stroke-width="2.00" />
<text x="614.5" y="153.4" font-size="18.60" fill="#d6d6d6" text-anchor="end" textLength="15.5" lengthAdjust="spacingAndGlyphs" >15</text>
<line x1="614.5" y1="212.2" x2="620.5" y2="212.2" stroke="#d0d0d0" stroke-width="2.00" />
<text x="614.5" y="219.2" font-size="18.60" fill="#d6d6d6" text-anchor="end" textLength="15.5" lengthAdjust="spacingAndGlyphs" >10</text>
<line x1="614.5" y1="277.9" x2="620.5" y2="277.9" stroke="#d0d0d0" stroke-width="2.00" />
<text x="614.5" y="284.9" font-size="18.60" fill="#d6d6d6" text-anchor="end" textLength="7.8" lengthAdjust="spacingAndGlyphs" >5</text>
<line x1="614.5" y1="343.7" x2="620.5" y2="343.7" stroke="#d0d0d0" stroke-width="2.00" />
<text x="614.5" y="350.7" font-size="18.60" fill="#d6d6d6" text-anchor="end" textLength="7.8" lengthAdjust="spacingAndGlyphs" >0</text>
<line x1="614.5" y1="409.5" x2="620.5" y2="409.5" stroke="#d0d0d0" stroke-width="2.00" />
<text x="614.5" y="416.5" font-size="18.60" fill="#d6d6d6" text-anchor="end" textLength="14.0" lengthAdjust="spacingAndGlyphs" >-5</text>
<line x1="614.5" y1="475.2" x2="620.5" y2="475.2" stroke="#d0d0d0" stroke-width="2.00" />
<text x="614.5" y="482.2" font-size="18.60" fill="#d6d6d6" text-anchor="end" textLength="22.5" lengthAdjust="spacingAndGlyphs" >-10</text>
<line x1="614.5" y1="541.0" x2="620.5" y2="541.0" stroke="#d0d0d0" stroke-width="2.00" />
<text x="614.5" y="548.0" font-size="18.60" fill="#d6d6d6" text-anchor="end" textLength="22.5" lengthAdjust="spacingAndGlyphs" >-15</text>
<text x="681.5" y="139.3" font-size="19.77" fill="#d4d4d4" text-anchor="middle" textLength="42.5" lengthAdjust="spacingAndGlyphs" >DeltaL</text>
<text x="695.4" y="561.2" font-size="18.60" fill="#d6d6d6" text-anchor="middle" textLength="37.5" lengthAdjust="spacingAndGlyphs" >100%</text>
<rect x="636.2" y="337.1" width="117.8" height="6.6" fill="url(#ybar)" stroke="#000" stroke-width="1.5"/>
<rect x="823.5" y="146.4" width="149.5" height="394.6" fill="#242424" />
<line x1="823.5" y1="212.2" x2="973.0" y2="212.2" stroke="#8c8c8c" stroke-width="2.00" />
<line x1="823.5" y1="277.9" x2="973.0" y2="277.9" stroke="#8c8c8c" stroke-width="2.00" />
<line x1="823.5" y1="343.7" x2="973.0" y2="343.7" stroke="#8c8c8c" stroke-width="2.00" />
<line x1="823.5" y1="409.5" x2="973.0" y2="409.5" stroke="#8c8c8c" stroke-width="2.00" />
<line x1="823.5" y1="475.2" x2="973.0" y2="475.2" stroke="#8c8c8c" stroke-width="2.00" />
<line x1="823.5" y1="145.9" x2="973.0" y2="145.9" stroke="#8a8a8a" stroke-width="3.50" />
<line x1="823.5" y1="146.4" x2="823.5" y2="547.0" stroke="#a8a8a8" stroke-width="2.00" />
<line x1="973.0" y1="146.4" x2="973.0" y2="547.0" stroke="#a8a8a8" stroke-width="2.00" />
<line x1="823.5" y1="541.0" x2="973.0" y2="541.0" stroke="#a0a0a0" stroke-width="2.00" />
<line x1="817.5" y1="146.4" x2="823.5" y2="146.4" stroke="#d0d0d0" stroke-width="2.00" />
<text x="817.5" y="153.4" font-size="18.60" fill="#d6d6d6" text-anchor="end" textLength="15.5" lengthAdjust="spacingAndGlyphs" >15</text>
<line x1="817.5" y1="212.2" x2="823.5" y2="212.2" stroke="#d0d0d0" stroke-width="2.00" />
<text x="817.5" y="219.2" font-size="18.60" fill="#d6d6d6" text-anchor="end" textLength="15.5" lengthAdjust="spacingAndGlyphs" >10</text>
<line x1="817.5" y1="277.9" x2="823.5" y2="277.9" stroke="#d0d0d0" stroke-width="2.00" />
<text x="817.5" y="284.9" font-size="18.60" fill="#d6d6d6" text-anchor="end" textLength="7.8" lengthAdjust="spacingAndGlyphs" >5</text>
<line x1="817.5" y1="343.7" x2="823.5" y2="343.7" stroke="#d0d0d0" stroke-width="2.00" />
<text x="817.5" y="350.7" font-size="18.60" fill="#d6d6d6" text-anchor="end" textLength="7.8" lengthAdjust="spacingAndGlyphs" >0</text>
<line x1="817.5" y1="409.5" x2="823.5" y2="409.5" stroke="#d0d0d0" stroke-width="2.00" />
<text x="817.5" y="416.5" font-size="18.60" fill="#d6d6d6" text-anchor="end" textLength="14.0" lengthAdjust="spacingAndGlyphs" >-5</text>
<line x1="817.5" y1="475.2" x2="823.5" y2="475.2" stroke="#d0d0d0" stroke-width="2.00" />
<text x="817.5" y="482.2" font-size="18.60" fill="#d6d6d6" text-anchor="end" textLength="22.5" lengthAdjust="spacingAndGlyphs" >-10</text>
<line x1="817.5" y1="541.0" x2="823.5" y2="541.0" stroke="#d0d0d0" stroke-width="2.00" />
<text x="817.5" y="548.0" font-size="18.60" fill="#d6d6d6" text-anchor="end" textLength="22.5" lengthAdjust="spacingAndGlyphs" >-15</text>
<text x="884.9" y="139.3" font-size="19.77" fill="#d4d4d4" text-anchor="middle" textLength="45.0" lengthAdjust="spacingAndGlyphs" >DeltaC</text>
<text x="898.8" y="561.2" font-size="18.60" fill="#d6d6d6" text-anchor="middle" textLength="37.5" lengthAdjust="spacingAndGlyphs" >100%</text>
<rect x="839.0" y="241.8" width="118.7" height="101.9" fill="url(#ybar)" stroke="#000" stroke-width="1.5"/>
<rect x="1027.0" y="146.4" width="149.3" height="394.6" fill="#242424" />
<line x1="1027.0" y1="212.2" x2="1176.3" y2="212.2" stroke="#8c8c8c" stroke-width="2.00" />
<line x1="1027.0" y1="277.9" x2="1176.3" y2="277.9" stroke="#8c8c8c" stroke-width="2.00" />
<line x1="1027.0" y1="343.7" x2="1176.3" y2="343.7" stroke="#8c8c8c" stroke-width="2.00" />
<line x1="1027.0" y1="409.5" x2="1176.3" y2="409.5" stroke="#8c8c8c" stroke-width="2.00" />
<line x1="1027.0" y1="475.2" x2="1176.3" y2="475.2" stroke="#8c8c8c" stroke-width="2.00" />
<line x1="1027.0" y1="145.9" x2="1176.3" y2="145.9" stroke="#8a8a8a" stroke-width="3.50" />
<line x1="1027.0" y1="146.4" x2="1027.0" y2="547.0" stroke="#a8a8a8" stroke-width="2.00" />
<line x1="1176.3" y1="146.4" x2="1176.3" y2="547.0" stroke="#a8a8a8" stroke-width="2.00" />
<line x1="1027.0" y1="541.0" x2="1176.3" y2="541.0" stroke="#a0a0a0" stroke-width="2.00" />
<line x1="1021.0" y1="146.4" x2="1027.0" y2="146.4" stroke="#d0d0d0" stroke-width="2.00" />
<text x="1021.0" y="153.4" font-size="18.60" fill="#d6d6d6" text-anchor="end" textLength="15.5" lengthAdjust="spacingAndGlyphs" >15</text>
<line x1="1021.0" y1="212.2" x2="1027.0" y2="212.2" stroke="#d0d0d0" stroke-width="2.00" />
<text x="1021.0" y="219.2" font-size="18.60" fill="#d6d6d6" text-anchor="end" textLength="15.5" lengthAdjust="spacingAndGlyphs" >10</text>
<line x1="1021.0" y1="277.9" x2="1027.0" y2="277.9" stroke="#d0d0d0" stroke-width="2.00" />
<text x="1021.0" y="284.9" font-size="18.60" fill="#d6d6d6" text-anchor="end" textLength="7.8" lengthAdjust="spacingAndGlyphs" >5</text>
<line x1="1021.0" y1="343.7" x2="1027.0" y2="343.7" stroke="#d0d0d0" stroke-width="2.00" />
<text x="1021.0" y="350.7" font-size="18.60" fill="#d6d6d6" text-anchor="end" textLength="7.8" lengthAdjust="spacingAndGlyphs" >0</text>
<line x1="1021.0" y1="409.5" x2="1027.0" y2="409.5" stroke="#d0d0d0" stroke-width="2.00" />
<text x="1021.0" y="416.5" font-size="18.60" fill="#d6d6d6" text-anchor="end" textLength="14.0" lengthAdjust="spacingAndGlyphs" >-5</text>
<line x1="1021.0" y1="475.2" x2="1027.0" y2="475.2" stroke="#d0d0d0" stroke-width="2.00" />
<text x="1021.0" y="482.2" font-size="18.60" fill="#d6d6d6" text-anchor="end" textLength="22.5" lengthAdjust="spacingAndGlyphs" >-10</text>
<line x1="1021.0" y1="541.0" x2="1027.0" y2="541.0" stroke="#d0d0d0" stroke-width="2.00" />
<text x="1021.0" y="548.0" font-size="18.60" fill="#d6d6d6" text-anchor="end" textLength="22.5" lengthAdjust="spacingAndGlyphs" >-15</text>
<text x="1088.2" y="139.3" font-size="19.77" fill="#d4d4d4" text-anchor="middle" textLength="45.3" lengthAdjust="spacingAndGlyphs" >DeltaH</text>
<text x="1102.2" y="561.2" font-size="18.60" fill="#d6d6d6" text-anchor="middle" textLength="37.5" lengthAdjust="spacingAndGlyphs" >100%</text>
<rect x="1042.0" y="343.7" width="118.5" height="25.6" fill="url(#ybar)" stroke="#000" stroke-width="1.5"/>
<rect x="586.6" y="582.0" width="610.2" height="203.0" fill="#000000" />
<rect x="608.2" y="590.3" width="101.8" height="84.0" fill="#c3c3a6" />
<rect x="608.2" y="673.5" width="101.8" height="82.2" fill="#c1c1a3" />
<rect x="608.8" y="590.9" width="100.6" height="164.2" fill="none" stroke="#f4f4f4" stroke-width="1.4"/>
<text x="659.1" y="775.0" font-size="16.72" fill="#f4f4f4" text-anchor="middle" textLength="24.0" lengthAdjust="spacingAndGlyphs" >20%</text>
<rect x="727.3" y="590.3" width="102.4" height="84.0" fill="#c4c48b" />
<rect x="727.3" y="673.5" width="102.4" height="82.2" fill="#c1c188" />
<rect x="727.9" y="590.9" width="101.2" height="164.2" fill="none" stroke="#f4f4f4" stroke-width="1.4"/>
<text x="778.5" y="775.0" font-size="16.72" fill="#f4f4f4" text-anchor="middle" textLength="24.0" lengthAdjust="spacingAndGlyphs" >40%</text>
<rect x="846.4" y="590.3" width="102.4" height="84.0" fill="#c5c46d" />
<rect x="846.4" y="673.5" width="102.4" height="82.2" fill="#c1c06b" />
<rect x="847.0" y="590.9" width="101.2" height="164.2" fill="none" stroke="#f4f4f4" stroke-width="1.4"/>
<text x="897.6" y="775.0" font-size="16.72" fill="#f4f4f4" text-anchor="middle" textLength="24.0" lengthAdjust="spacingAndGlyphs" >60%</text>
<rect x="966.2" y="590.3" width="101.7" height="84.0" fill="#c5c242" />
<rect x="966.2" y="673.5" width="101.7" height="82.2" fill="#c1c04c" />
<rect x="966.8" y="590.9" width="100.5" height="164.2" fill="none" stroke="#f4f4f4" stroke-width="1.4"/>
<text x="1017.1" y="775.0" font-size="16.72" fill="#f4f4f4" text-anchor="middle" textLength="24.0" lengthAdjust="spacingAndGlyphs" >80%</text>
<rect x="1085.2" y="590.3" width="101.4" height="84.0" fill="#c8c400" />
<rect x="1085.2" y="673.5" width="101.4" height="82.2" fill="#c3c12c" />
<rect x="1085.8" y="590.9" width="100.2" height="164.2" fill="none" stroke="#f4f4f4" stroke-width="1.4"/>
<text x="1135.9" y="775.0" font-size="16.72" fill="#f4f4f4" text-anchor="middle" textLength="31.0" lengthAdjust="spacingAndGlyphs" >100%</text>
<text transform="translate(601,626.4) rotate(-90)" font-size="14.5" fill="#f0f0f0" text-anchor="middle" textLength="43" lengthAdjust="spacingAndGlyphs">Actual</text>
<text transform="translate(601,719.3) rotate(-90)" font-size="14.5" fill="#f0f0f0" text-anchor="middle" textLength="43" lengthAdjust="spacingAndGlyphs">Target</text>
<rect x="1203.0" y="106.0" width="717.0" height="697.0" fill="#1c1c1c" />
<rect x="1211.0" y="114.0" width="701.0" height="679.0" fill="#323232" />
<text x="1560.7" y="137.2" font-size="18.31" fill="#d8d8d8" text-anchor="middle" textLength="86.0" lengthAdjust="spacingAndGlyphs" >CIE 1976 u'v'</text>
<rect x="1249.5" y="144.0" width="659.0" height="613.5" fill="#232323" />
<g clip-path="url(#hsout)"><g filter="url(#fb)"><rect x="1230" y="124" width="20" height="20" fill="#009600"/><rect x="1250" y="124" width="20" height="20" fill="#009600"/><rect x="1270" y="124" width="20" height="20" fill="#009600"/><rect x="1290" y="124" width="20" height="20" fill="#009600"/><rect x="1310" y="124" width="20" height="20" fill="#009600"/><rect x="1330" y="124" width="20" height="20" fill="#009600"/><rect x="1350" y="124" width="20" height="20" fill="#009600"/><rect x="1370" y="124" width="20" height="20" fill="#009600"/><rect x="1390" y="124" width="20" height="20" fill="#199600"/><rect x="1410" y="124" width="20" height="20" fill="#359600"/><rect x="1430" y="124" width="20" height="20" fill="#539600"/><rect x="1450" y="124" width="20" height="20" fill="#759600"/><rect x="1470" y="124" width="20" height="20" fill="#969200"/><rect x="1490" y="124" width="20" height="20" fill="#967200"/><rect x="1510" y="124" width="20" height="20" fill="#965c00"/><rect x="1530" y="124" width="20" height="20" fill="#964b00"/><rect x="1550" y="124" width="20" height="20" fill="#963e00"/><rect x="1570" y="124" width="20" height="20" fill="#963300"/><rect x="1590" y="124" width="20" height="20" fill="#962b00"/><rect x="1610" y="124" width="20" height="20" fill="#962300"/><rect x="1630" y="124" width="20" height="20" fill="#961d00"/><rect x="1650" y="124" width="20" height="20" fill="#961800"/><rect x="1670" y="124" width="20" height="20" fill="#961400"/><rect x="1690" y="124" width="20" height="20" fill="#961000"/><rect x="1710" y="124" width="20" height="20" fill="#960c00"/><rect x="1730" y="124" width="20" height="20" fill="#960900"/><rect x="1750" y="124" width="20" height="20" fill="#960600"/><rect x="1770" y="124" width="20" height="20" fill="#960400"/><rect x="1790" y="124" width="20" height="20" fill="#960200"/><rect x="1810" y="124" width="20" height="20" fill="#960000"/><rect x="1830" y="124" width="20" height="20" fill="#960000"/><rect x="1850" y="124" width="20" height="20" fill="#960000"/><rect x="1870" y="124" width="20" height="20" fill="#960000"/><rect x="1890" y="124" width="20" height="20" fill="#960000"/><rect x="1910" y="124" width="20" height="20" fill="#960000"/><rect x="1230" y="144" width="20" height="20" fill="#009600"/><rect x="1250" y="144" width="20" height="20" fill="#009600"/><rect x="1270" y="144" width="20" height="20" fill="#009600"/><rect x="1290" y="144" width="20" height="20" fill="#009600"/><rect x="1310" y="144" width="20" height="20" fill="#009600"/><rect x="1330" y="144" width="20" height="20" fill="#009600"/><rect x="1350" y="144" width="20" height="20" fill="#009600"/><rect x="1370" y="144" width="20" height="20" fill="#009600"/><rect x="1390" y="144" width="20" height="20" fill="#179600"/><rect x="1410" y="144" width="20" height="20" fill="#339600"/><rect x="1430" y="144" width="20" height="20" fill="#539600"/><rect x="1450" y="144" width="20" height="20" fill="#779600"/><rect x="1470" y="144" width="20" height="20" fill="#968f00"/><rect x="1490" y="144" width="20" height="20" fill="#966f00"/><rect x="1510" y="144" width="20" height="20" fill="#965800"/><rect x="1530" y="144" width="20" height="20" fill="#964800"/><rect x="1550" y="144" width="20" height="20" fill="#963b00"/><rect x="1570" y="144" width="20" height="20" fill="#963000"/><rect x="1590" y="144" width="20" height="20" fill="#962800"/><rect x="1610" y="144" width="20" height="20" fill="#962100"/><rect x="1630" y="144" width="20" height="20" fill="#961b00"/><rect x="1650" y="144" width="20" height="20" fill="#961600"/><rect x="1670" y="144" width="20" height="20" fill="#961100"/><rect x="1690" y="144" width="20" height="20" fill="#960e00"/><rect x="1710" y="144" width="20" height="20" fill="#960a00"/><rect x="1730" y="144" width="20" height="20" fill="#960700"/><rect x="1750" y="144" width="20" height="20" fill="#960500"/><rect x="1770" y="144" width="20" height="20" fill="#960200"/><rect x="1790" y="144" width="20" height="20" fill="#960000"/><rect x="1810" y="144" width="20" height="20" fill="#960000"/><rect x="1830" y="144" width="20" height="20" fill="#960000"/><rect x="1850" y="144" width="20" height="20" fill="#960000"/><rect x="1870" y="144" width="20" height="20" fill="#960000"/><rect x="1890" y="144" width="20" height="20" fill="#960000"/><rect x="1910" y="144" width="20" height="20" fill="#960000"/><rect x="1230" y="164" width="20" height="20" fill="#009606"/><rect x="1250" y="164" width="20" height="20" fill="#009604"/><rect x="1270" y="164" width="20" height="20" fill="#009603"/><rect x="1290" y="164" width="20" height="20" fill="#009601"/><rect x="1310" y="164" width="20" height="20" fill="#009600"/><rect x="1330" y="164" width="20" height="20" fill="#009600"/><rect x="1350" y="164" width="20" height="20" fill="#009600"/><rect x="1370" y="164" width="20" height="20" fill="#009600"/><rect x="1390" y="164" width="20" height="20" fill="#149600"/><rect x="1410" y="164" width="20" height="20" fill="#329600"/><rect x="1430" y="164" width="20" height="20" fill="#539600"/><rect x="1450" y="164" width="20" height="20" fill="#789600"/><rect x="1470" y="164" width="20" height="20" fill="#968b00"/><rect x="1490" y="164" width="20" height="20" fill="#966b00"/><rect x="1510" y="164" width="20" height="20" fill="#965500"/><rect x="1530" y="164" width="20" height="20" fill="#964400"/><rect x="1550" y="164" width="20" height="20" fill="#963800"/><rect x="1570" y="164" width="20" height="20" fill="#962d00"/><rect x="1590" y="164" width="20" height="20" fill="#962500"/><rect x="1610" y="164" width="20" height="20" fill="#961e00"/><rect x="1630" y="164" width="20" height="20" fill="#961800"/><rect x="1650" y="164" width="20" height="20" fill="#961400"/><rect x="1670" y="164" width="20" height="20" fill="#960f00"/><rect x="1690" y="164" width="20" height="20" fill="#960c00"/><rect x="1710" y="164" width="20" height="20" fill="#960800"/><rect x="1730" y="164" width="20" height="20" fill="#960500"/><rect x="1750" y="164" width="20" height="20" fill="#960300"/><rect x="1770" y="164" width="20" height="20" fill="#960000"/><rect x="1790" y="164" width="20" height="20" fill="#960000"/><rect x="1810" y="164" width="20" height="20" fill="#960000"/><rect x="1830" y="164" width="20" height="20" fill="#960000"/><rect x="1850" y="164" width="20" height="20" fill="#960000"/><rect x="1870" y="164" width="20" height="20" fill="#960000"/><rect x="1890" y="164" width="20" height="20" fill="#960000"/><rect x="1910" y="164" width="20" height="20" fill="#960000"/><rect x="1230" y="184" width="20" height="20" fill="#009615"/><rect x="1250" y="184" width="20" height="20" fill="#009614"/><rect x="1270" y="184" width="20" height="20" fill="#009613"/><rect x="1290" y="184" width="20" height="20" fill="#009612"/><rect x="1310" y="184" width="20" height="20" fill="#009611"/><rect x="1330" y="184" width="20" height="20" fill="#009610"/><rect x="1350" y="184" width="20" height="20" fill="#00960e"/><rect x="1370" y="184" width="20" height="20" fill="#00960d"/><rect x="1390" y="184" width="20" height="20" fill="#11960b"/><rect x="1410" y="184" width="20" height="20" fill="#309609"/><rect x="1430" y="184" width="20" height="20" fill="#539607"/><rect x="1450" y="184" width="20" height="20" fill="#7a9604"/><rect x="1470" y="184" width="20" height="20" fill="#968801"/><rect x="1490" y="184" width="20" height="20" fill="#966800"/><rect x="1510" y="184" width="20" height="20" fill="#965100"/><rect x="1530" y="184" width="20" height="20" fill="#964100"/><rect x="1550" y="184" width="20" height="20" fill="#963400"/><rect x="1570" y="184" width="20" height="20" fill="#962a00"/><rect x="1590" y="184" width="20" height="20" fill="#962200"/><rect x="1610" y="184" width="20" height="20" fill="#961c00"/><rect x="1630" y="184" width="20" height="20" fill="#961600"/><rect x="1650" y="184" width="20" height="20" fill="#961100"/><rect x="1670" y="184" width="20" height="20" fill="#960d00"/><rect x="1690" y="184" width="20" height="20" fill="#960900"/><rect x="1710" y="184" width="20" height="20" fill="#960600"/><rect x="1730" y="184" width="20" height="20" fill="#960300"/><rect x="1750" y="184" width="20" height="20" fill="#960100"/><rect x="1770" y="184" width="20" height="20" fill="#960000"/><rect x="1790" y="184" width="20" height="20" fill="#960000"/><rect x="1810" y="184" width="20" height="20" fill="#960000"/><rect x="1830" y="184" width="20" height="20" fill="#960000"/><rect x="1850" y="184" width="20" height="20" fill="#960000"/><rect x="1870" y="184" width="20" height="20" fill="#960000"/><rect x="1890" y="184" width="20" height="20" fill="#960000"/><rect x="1910" y="184" width="20" height="20" fill="#960000"/><rect x="1230" y="204" width="20" height="20" fill="#009626"/><rect x="1250" y="204" width="20" height="20" fill="#009625"/><rect x="1270" y="204" width="20" height="20" fill="#009625"/><rect x="1290" y="204" width="20" height="20" fill="#009625"/><rect x="1310" y="204" width="20" height="20" fill="#009624"/><rect x="1330" y="204" width="20" height="20" fill="#009624"/><rect x="1350" y="204" width="20" height="20" fill="#009623"/><rect x="1370" y="204" width="20" height="20" fill="#009623"/><rect x="1390" y="204" width="20" height="20" fill="#0e9622"/><rect x="1410" y="204" width="20" height="20" fill="#2e9621"/><rect x="1430" y="204" width="20" height="20" fill="#539621"/><rect x="1450" y="204" width="20" height="20" fill="#7c9620"/><rect x="1470" y="204" width="20" height="20" fill="#96841b"/><rect x="1490" y="204" width="20" height="20" fill="#966414"/><rect x="1510" y="204" width="20" height="20" fill="#964e0f"/><rect x="1530" y="204" width="20" height="20" fill="#963d0b"/><rect x="1550" y="204" width="20" height="20" fill="#963108"/><rect x="1570" y="204" width="20" height="20" fill="#962706"/><rect x="1590" y="204" width="20" height="20" fill="#961f04"/><rect x="1610" y="204" width="20" height="20" fill="#961902"/><rect x="1630" y="204" width="20" height="20" fill="#961301"/><rect x="1650" y="204" width="20" height="20" fill="#960f00"/><rect x="1670" y="204" width="20" height="20" fill="#960b00"/><rect x="1690" y="204" width="20" height="20" fill="#960700"/><rect x="1710" y="204" width="20" height="20" fill="#960400"/><rect x="1730" y="204" width="20" height="20" fill="#960100"/><rect x="1750" y="204" width="20" height="20" fill="#960000"/><rect x="1770" y="204" width="20" height="20" fill="#960000"/><rect x="1790" y="204" width="20" height="20" fill="#960000"/><rect x="1810" y="204" width="20" height="20" fill="#960000"/><rect x="1830" y="204" width="20" height="20" fill="#960000"/><rect x="1850" y="204" width="20" height="20" fill="#960000"/><rect x="1870" y="204" width="20" height="20" fill="#960000"/><rect x="1890" y="204" width="20" height="20" fill="#960000"/><rect x="1910" y="204" width="20" height="20" fill="#960000"/><rect x="1230" y="224" width="20" height="20" fill="#009637"/><rect x="1250" y="224" width="20" height="20" fill="#009637"/><rect x="1270" y="224" width="20" height="20" fill="#009638"/><rect x="1290" y="224" width="20" height="20" fill="#009638"/><rect x="1310" y="224" width="20" height="20" fill="#009639"/><rect x="1330" y="224" width="20" height="20" fill="#009639"/><rect x="1350" y="224" width="20" height="20" fill="#00963a"/><rect x="1370" y="224" width="20" height="20" fill="#00963b"/><rect x="1390" y="224" width="20" height="20" fill="#0a963c"/><rect x="1410" y="224" width="20" height="20" fill="#2c963d"/><rect x="1430" y="224" width="20" height="20" fill="#52963e"/><rect x="1450" y="224" width="20" height="20" fill="#7e963f"/><rect x="1470" y="224" width="20" height="20" fill="#968036"/><rect x="1490" y="224" width="20" height="20" fill="#96602a"/><rect x="1510" y="224" width="20" height="20" fill="#964a21"/><rect x="1530" y="224" width="20" height="20" fill="#963a1b"/><rect x="1550" y="224" width="20" height="20" fill="#962e16"/><rect x="1570" y="224" width="20" height="20" fill="#962412"/><rect x="1590" y="224" width="20" height="20" fill="#961c0f"/><rect x="1610" y="224" width="20" height="20" fill="#96160d"/><rect x="1630" y="224" width="20" height="20" fill="#96110b"/><rect x="1650" y="224" width="20" height="20" fill="#960c09"/><rect x="1670" y="224" width="20" height="20" fill="#960807"/><rect x="1690" y="224" width="20" height="20" fill="#960506"/><rect x="1710" y="224" width="20" height="20" fill="#960205"/><rect x="1730" y="224" width="20" height="20" fill="#960004"/><rect x="1750" y="224" width="20" height="20" fill="#960003"/><rect x="1770" y="224" width="20" height="20" fill="#960002"/><rect x="1790" y="224" width="20" height="20" fill="#960001"/><rect x="1810" y="224" width="20" height="20" fill="#960001"/><rect x="1830" y="224" width="20" height="20" fill="#960000"/><rect x="1850" y="224" width="20" height="20" fill="#960000"/><rect x="1870" y="224" width="20" height="20" fill="#960000"/><rect x="1890" y="224" width="20" height="20" fill="#960000"/><rect x="1910" y="224" width="20" height="20" fill="#960000"/><rect x="1230" y="244" width="20" height="20" fill="#00964a"/><rect x="1250" y="244" width="20" height="20" fill="#00964b"/><rect x="1270" y="244" width="20" height="20" fill="#00964c"/><rect x="1290" y="244" width="20" height="20" fill="#00964e"/><rect x="1310" y="244" width="20" height="20" fill="#00964f"/><rect x="1330" y="244" width="20" height="20" fill="#009651"/><rect x="1350" y="244" width="20" height="20" fill="#009653"/><rect x="1370" y="244" width="20" height="20" fill="#009655"/><rect x="1390" y="244" width="20" height="20" fill="#069658"/><rect x="1410" y="244" width="20" height="20" fill="#2a965b"/><rect x="1430" y="244" width="20" height="20" fill="#52965e"/><rect x="1450" y="244" width="20" height="20" fill="#819662"/><rect x="1470" y="244" width="20" height="20" fill="#967c54"/><rect x="1490" y="244" width="20" height="20" fill="#965b41"/><rect x="1510" y="244" width="20" height="20" fill="#964634"/><rect x="1530" y="244" width="20" height="20" fill="#96362b"/><rect x="1550" y="244" width="20" height="20" fill="#962a24"/><rect x="1570" y="244" width="20" height="20" fill="#96211f"/><rect x="1590" y="244" width="20" height="20" fill="#96191b"/><rect x="1610" y="244" width="20" height="20" fill="#961317"/><rect x="1630" y="244" width="20" height="20" fill="#960e14"/><rect x="1650" y="244" width="20" height="20" fill="#960a12"/><rect x="1670" y="244" width="20" height="20" fill="#960610"/><rect x="1690" y="244" width="20" height="20" fill="#96030e"/><rect x="1710" y="244" width="20" height="20" fill="#96000c"/><rect x="1730" y="244" width="20" height="20" fill="#96000b"/><rect x="1750" y="244" width="20" height="20" fill="#960009"/><rect x="1770" y="244" width="20" height="20" fill="#960008"/><rect x="1790" y="244" width="20" height="20" fill="#960007"/><rect x="1810" y="244" width="20" height="20" fill="#960006"/><rect x="1830" y="244" width="20" height="20" fill="#960005"/><rect x="1850" y="244" width="20" height="20" fill="#960004"/><rect x="1870" y="244" width="20" height="20" fill="#960004"/><rect x="1890" y="244" width="20" height="20" fill="#960003"/><rect x="1910" y="244" width="20" height="20" fill="#960002"/><rect x="1230" y="264" width="20" height="20" fill="#00965e"/><rect x="1250" y="264" width="20" height="20" fill="#009660"/><rect x="1270" y="264" width="20" height="20" fill="#009662"/><rect x="1290" y="264" width="20" height="20" fill="#009665"/><rect x="1310" y="264" width="20" height="20" fill="#009668"/><rect x="1330" y="264" width="20" height="20" fill="#00966b"/><rect x="1350" y="264" width="20" height="20" fill="#00966e"/><rect x="1370" y="264" width="20" height="20" fill="#009672"/><rect x="1390" y="264" width="20" height="20" fill="#029677"/><rect x="1410" y="264" width="20" height="20" fill="#27967c"/><rect x="1430" y="264" width="20" height="20" fill="#529682"/><rect x="1450" y="264" width="20" height="20" fill="#849689"/><rect x="1470" y="264" width="20" height="20" fill="#967773"/><rect x="1490" y="264" width="20" height="20" fill="#96575a"/><rect x="1510" y="264" width="20" height="20" fill="#964149"/><rect x="1530" y="264" width="20" height="20" fill="#96323d"/><rect x="1550" y="264" width="20" height="20" fill="#962633"/><rect x="1570" y="264" width="20" height="20" fill="#961d2c"/><rect x="1590" y="264" width="20" height="20" fill="#961627"/><rect x="1610" y="264" width="20" height="20" fill="#961022"/><rect x="1630" y="264" width="20" height="20" fill="#960b1e"/><rect x="1650" y="264" width="20" height="20" fill="#96071b"/><rect x="1670" y="264" width="20" height="20" fill="#960318"/><rect x="1690" y="264" width="20" height="20" fill="#960015"/><rect x="1710" y="264" width="20" height="20" fill="#960013"/><rect x="1730" y="264" width="20" height="20" fill="#960011"/><rect x="1750" y="264" width="20" height="20" fill="#960010"/><rect x="1770" y="264" width="20" height="20" fill="#96000e"/><rect x="1790" y="264" width="20" height="20" fill="#96000d"/><rect x="1810" y="264" width="20" height="20" fill="#96000c"/><rect x="1830" y="264" width="20" height="20" fill="#96000a"/><rect x="1850" y="264" width="20" height="20" fill="#960009"/><rect x="1870" y="264" width="20" height="20" fill="#960009"/><rect x="1890" y="264" width="20" height="20" fill="#960008"/><rect x="1910" y="264" width="20" height="20" fill="#960007"/><rect x="1230" y="284" width="20" height="20" fill="#009673"/><rect x="1250" y="284" width="20" height="20" fill="#009676"/><rect x="1270" y="284" width="20" height="20" fill="#00967a"/><rect x="1290" y="284" width="20" height="20" fill="#00967e"/><rect x="1310" y="284" width="20" height="20" fill="#009682"/><rect x="1330" y="284" width="20" height="20" fill="#009687"/><rect x="1350" y="284" width="20" height="20" fill="#00968c"/><rect x="1370" y="284" width="20" height="20" fill="#009693"/><rect x="1390" y="284" width="20" height="20" fill="#009396"/><rect x="1410" y="284" width="20" height="20" fill="#228c96"/><rect x="1430" y="284" width="20" height="20" fill="#488496"/><rect x="1450" y="284" width="20" height="20" fill="#6f7c96"/><rect x="1470" y="284" width="20" height="20" fill="#967294"/><rect x="1490" y="284" width="20" height="20" fill="#965274"/><rect x="1510" y="284" width="20" height="20" fill="#963d5e"/><rect x="1530" y="284" width="20" height="20" fill="#962e4e"/><rect x="1550" y="284" width="20" height="20" fill="#962343"/><rect x="1570" y="284" width="20" height="20" fill="#961a3a"/><rect x="1590" y="284" width="20" height="20" fill="#961333"/><rect x="1610" y="284" width="20" height="20" fill="#960d2d"/><rect x="1630" y="284" width="20" height="20" fill="#960828"/><rect x="1650" y="284" width="20" height="20" fill="#960424"/><rect x="1670" y="284" width="20" height="20" fill="#960120"/><rect x="1690" y="284" width="20" height="20" fill="#96001d"/><rect x="1710" y="284" width="20" height="20" fill="#96001b"/><rect x="1730" y="284" width="20" height="20" fill="#960018"/><rect x="1750" y="284" width="20" height="20" fill="#960016"/><rect x="1770" y="284" width="20" height="20" fill="#960014"/><rect x="1790" y="284" width="20" height="20" fill="#960013"/><rect x="1810" y="284" width="20" height="20" fill="#960011"/><rect x="1830" y="284" width="20" height="20" fill="#960010"/><rect x="1850" y="284" width="20" height="20" fill="#96000f"/><rect x="1870" y="284" width="20" height="20" fill="#96000d"/><rect x="1890" y="284" width="20" height="20" fill="#96000c"/><rect x="1910" y="284" width="20" height="20" fill="#96000b"/><rect x="1230" y="304" width="20" height="20" fill="#00968a"/><rect x="1250" y="304" width="20" height="20" fill="#00968e"/><rect x="1270" y="304" width="20" height="20" fill="#009693"/><rect x="1290" y="304" width="20" height="20" fill="#009496"/><rect x="1310" y="304" width="20" height="20" fill="#008e96"/><rect x="1330" y="304" width="20" height="20" fill="#008996"/><rect x="1350" y="304" width="20" height="20" fill="#008296"/><rect x="1370" y="304" width="20" height="20" fill="#007c96"/><rect x="1390" y="304" width="20" height="20" fill="#007696"/><rect x="1410" y="304" width="20" height="20" fill="#186f96"/><rect x="1430" y="304" width="20" height="20" fill="#386896"/><rect x="1450" y="304" width="20" height="20" fill="#596196"/><rect x="1470" y="304" width="20" height="20" fill="#7b5996"/><rect x="1490" y="304" width="20" height="20" fill="#964d8f"/><rect x="1510" y="304" width="20" height="20" fill="#963874"/><rect x="1530" y="304" width="20" height="20" fill="#962a61"/><rect x="1550" y="304" width="20" height="20" fill="#961f53"/><rect x="1570" y="304" width="20" height="20" fill="#961648"/><rect x="1590" y="304" width="20" height="20" fill="#96103f"/><rect x="1610" y="304" width="20" height="20" fill="#960a38"/><rect x="1630" y="304" width="20" height="20" fill="#960632"/><rect x="1650" y="304" width="20" height="20" fill="#96022d"/><rect x="1670" y="304" width="20" height="20" fill="#960029"/><rect x="1690" y="304" width="20" height="20" fill="#960025"/><rect x="1710" y="304" width="20" height="20" fill="#960022"/><rect x="1730" y="304" width="20" height="20" fill="#96001f"/><rect x="1750" y="304" width="20" height="20" fill="#96001d"/><rect x="1770" y="304" width="20" height="20" fill="#96001b"/><rect x="1790" y="304" width="20" height="20" fill="#960019"/><rect x="1810" y="304" width="20" height="20" fill="#960017"/><rect x="1830" y="304" width="20" height="20" fill="#960015"/><rect x="1850" y="304" width="20" height="20" fill="#960014"/><rect x="1870" y="304" width="20" height="20" fill="#960012"/><rect x="1890" y="304" width="20" height="20" fill="#960011"/><rect x="1910" y="304" width="20" height="20" fill="#960010"/><rect x="1230" y="324" width="20" height="20" fill="#008b96"/><rect x="1250" y="324" width="20" height="20" fill="#008696"/><rect x="1270" y="324" width="20" height="20" fill="#008196"/><rect x="1290" y="324" width="20" height="20" fill="#007c96"/><rect x="1310" y="324" width="20" height="20" fill="#007796"/><rect x="1330" y="324" width="20" height="20" fill="#007196"/><rect x="1350" y="324" width="20" height="20" fill="#006c96"/><rect x="1370" y="324" width="20" height="20" fill="#006696"/><rect x="1390" y="324" width="20" height="20" fill="#006096"/><rect x="1410" y="324" width="20" height="20" fill="#115a96"/><rect x="1430" y="324" width="20" height="20" fill="#2d5396"/><rect x="1450" y="324" width="20" height="20" fill="#494d96"/><rect x="1470" y="324" width="20" height="20" fill="#664696"/><rect x="1490" y="324" width="20" height="20" fill="#843f96"/><rect x="1510" y="324" width="20" height="20" fill="#96338b"/><rect x="1530" y="324" width="20" height="20" fill="#962574"/><rect x="1550" y="324" width="20" height="20" fill="#961b63"/><rect x="1570" y="324" width="20" height="20" fill="#961356"/><rect x="1590" y="324" width="20" height="20" fill="#960c4c"/><rect x="1610" y="324" width="20" height="20" fill="#960744"/><rect x="1630" y="324" width="20" height="20" fill="#96033d"/><rect x="1650" y="324" width="20" height="20" fill="#960037"/><rect x="1670" y="324" width="20" height="20" fill="#960032"/><rect x="1690" y="324" width="20" height="20" fill="#96002e"/><rect x="1710" y="324" width="20" height="20" fill="#96002a"/><rect x="1730" y="324" width="20" height="20" fill="#960027"/><rect x="1750" y="324" width="20" height="20" fill="#960024"/><rect x="1770" y="324" width="20" height="20" fill="#960021"/><rect x="1790" y="324" width="20" height="20" fill="#96001f"/><rect x="1810" y="324" width="20" height="20" fill="#96001d"/><rect x="1830" y="324" width="20" height="20" fill="#96001b"/><rect x="1850" y="324" width="20" height="20" fill="#960019"/><rect x="1870" y="324" width="20" height="20" fill="#960017"/><rect x="1890" y="324" width="20" height="20" fill="#960016"/><rect x="1910" y="324" width="20" height="20" fill="#960014"/><rect x="1230" y="344" width="20" height="20" fill="#007896"/><rect x="1250" y="344" width="20" height="20" fill="#007396"/><rect x="1270" y="344" width="20" height="20" fill="#006e96"/><rect x="1290" y="344" width="20" height="20" fill="#006996"/><rect x="1310" y="344" width="20" height="20" fill="#006496"/><rect x="1330" y="344" width="20" height="20" fill="#005f96"/><rect x="1350" y="344" width="20" height="20" fill="#005a96"/><rect x="1370" y="344" width="20" height="20" fill="#005596"/><rect x="1390" y="344" width="20" height="20" fill="#004f96"/><rect x="1410" y="344" width="20" height="20" fill="#0c4996"/><rect x="1430" y="344" width="20" height="20" fill="#244496"/><rect x="1450" y="344" width="20" height="20" fill="#3d3e96"/><rect x="1470" y="344" width="20" height="20" fill="#563796"/><rect x="1490" y="344" width="20" height="20" fill="#703196"/><rect x="1510" y="344" width="20" height="20" fill="#8a2b96"/><rect x="1530" y="344" width="20" height="20" fill="#962188"/><rect x="1550" y="344" width="20" height="20" fill="#961675"/><rect x="1570" y="344" width="20" height="20" fill="#960f65"/><rect x="1590" y="344" width="20" height="20" fill="#960959"/><rect x="1610" y="344" width="20" height="20" fill="#960450"/><rect x="1630" y="344" width="20" height="20" fill="#960048"/><rect x="1650" y="344" width="20" height="20" fill="#960041"/><rect x="1670" y="344" width="20" height="20" fill="#96003b"/><rect x="1690" y="344" width="20" height="20" fill="#960036"/><rect x="1710" y="344" width="20" height="20" fill="#960032"/><rect x="1730" y="344" width="20" height="20" fill="#96002e"/><rect x="1750" y="344" width="20" height="20" fill="#96002b"/><rect x="1770" y="344" width="20" height="20" fill="#960028"/><rect x="1790" y="344" width="20" height="20" fill="#960025"/><rect x="1810" y="344" width="20" height="20" fill="#960022"/><rect x="1830" y="344" width="20" height="20" fill="#960020"/><rect x="1850" y="344" width="20" height="20" fill="#96001e"/><rect x="1870" y="344" width="20" height="20" fill="#96001c"/><rect x="1890" y="344" width="20" height="20" fill="#96001b"/><rect x="1910" y="344" width="20" height="20" fill="#960019"/><rect x="1230" y="364" width="20" height="20" fill="#006896"/><rect x="1250" y="364" width="20" height="20" fill="#006396"/><rect x="1270" y="364" width="20" height="20" fill="#005f96"/><rect x="1290" y="364" width="20" height="20" fill="#005a96"/><rect x="1310" y="364" width="20" height="20" fill="#005696"/><rect x="1330" y="364" width="20" height="20" fill="#005196"/><rect x="1350" y="364" width="20" height="20" fill="#004c96"/><rect x="1370" y="364" width="20" height="20" fill="#004796"/><rect x="1390" y="364" width="20" height="20" fill="#004296"/><rect x="1410" y="364" width="20" height="20" fill="#083d96"/><rect x="1430" y="364" width="20" height="20" fill="#1d3796"/><rect x="1450" y="364" width="20" height="20" fill="#333296"/><rect x="1470" y="364" width="20" height="20" fill="#492c96"/><rect x="1490" y="364" width="20" height="20" fill="#602796"/><rect x="1510" y="364" width="20" height="20" fill="#782196"/><rect x="1530" y="364" width="20" height="20" fill="#901b96"/><rect x="1550" y="364" width="20" height="20" fill="#961286"/><rect x="1570" y="364" width="20" height="20" fill="#960b75"/><rect x="1590" y="364" width="20" height="20" fill="#960567"/><rect x="1610" y="364" width="20" height="20" fill="#96005c"/><rect x="1630" y="364" width="20" height="20" fill="#960053"/><rect x="1650" y="364" width="20" height="20" fill="#96004b"/><rect x="1670" y="364" width="20" height="20" fill="#960044"/><rect x="1690" y="364" width="20" height="20" fill="#96003f"/><rect x="1710" y="364" width="20" height="20" fill="#96003a"/><rect x="1730" y="364" width="20" height="20" fill="#960035"/><rect x="1750" y="364" width="20" height="20" fill="#960032"/><rect x="1770" y="364" width="20" height="20" fill="#96002e"/><rect x="1790" y="364" width="20" height="20" fill="#96002b"/><rect x="1810" y="364" width="20" height="20" fill="#960028"/><rect x="1830" y="364" width="20" height="20" fill="#960026"/><rect x="1850" y="364" width="20" height="20" fill="#960024"/><rect x="1870" y="364" width="20" height="20" fill="#960021"/><rect x="1890" y="364" width="20" height="20" fill="#960020"/><rect x="1910" y="364" width="20" height="20" fill="#96001e"/><rect x="1230" y="384" width="20" height="20" fill="#005b96"/><rect x="1250" y="384" width="20" height="20" fill="#005696"/><rect x="1270" y="384" width="20" height="20" fill="#005296"/><rect x="1290" y="384" width="20" height="20" fill="#004e96"/><rect x="1310" y="384" width="20" height="20" fill="#004a96"/><rect x="1330" y="384" width="20" height="20" fill="#004596"/><rect x="1350" y="384" width="20" height="20" fill="#004196"/><rect x="1370" y="384" width="20" height="20" fill="#003c96"/><rect x="1390" y="384" width="20" height="20" fill="#003796"/><rect x="1410" y="384" width="20" height="20" fill="#053296"/><rect x="1430" y="384" width="20" height="20" fill="#182e96"/><rect x="1450" y="384" width="20" height="20" fill="#2c2896"/><rect x="1470" y="384" width="20" height="20" fill="#402396"/><rect x="1490" y="384" width="20" height="20" fill="#541e96"/><rect x="1510" y="384" width="20" height="20" fill="#691996"/><rect x="1530" y="384" width="20" height="20" fill="#7e1396"/><rect x="1550" y="384" width="20" height="20" fill="#940d96"/><rect x="1570" y="384" width="20" height="20" fill="#960785"/><rect x="1590" y="384" width="20" height="20" fill="#960175"/><rect x="1610" y="384" width="20" height="20" fill="#960068"/><rect x="1630" y="384" width="20" height="20" fill="#96005e"/><rect x="1650" y="384" width="20" height="20" fill="#960055"/><rect x="1670" y="384" width="20" height="20" fill="#96004e"/><rect x="1690" y="384" width="20" height="20" fill="#960047"/><rect x="1710" y="384" width="20" height="20" fill="#960042"/><rect x="1730" y="384" width="20" height="20" fill="#96003d"/><rect x="1750" y="384" width="20" height="20" fill="#960039"/><rect x="1770" y="384" width="20" height="20" fill="#960035"/><rect x="1790" y="384" width="20" height="20" fill="#960031"/><rect x="1810" y="384" width="20" height="20" fill="#96002e"/><rect x="1830" y="384" width="20" height="20" fill="#96002b"/><rect x="1850" y="384" width="20" height="20" fill="#960029"/><rect x="1870" y="384" width="20" height="20" fill="#960027"/><rect x="1890" y="384" width="20" height="20" fill="#960024"/><rect x="1910" y="384" width="20" height="20" fill="#960023"/><rect x="1230" y="404" width="20" height="20" fill="#005096"/><rect x="1250" y="404" width="20" height="20" fill="#004c96"/><rect x="1270" y="404" width="20" height="20" fill="#004896"/><rect x="1290" y="404" width="20" height="20" fill="#004496"/><rect x="1310" y="404" width="20" height="20" fill="#004096"/><rect x="1330" y="404" width="20" height="20" fill="#003c96"/><rect x="1350" y="404" width="20" height="20" fill="#003796"/><rect x="1370" y="404" width="20" height="20" fill="#003396"/><rect x="1390" y="404" width="20" height="20" fill="#002f96"/><rect x="1410" y="404" width="20" height="20" fill="#022a96"/><rect x="1430" y="404" width="20" height="20" fill="#142596"/><rect x="1450" y="404" width="20" height="20" fill="#252196"/><rect x="1470" y="404" width="20" height="20" fill="#371c96"/><rect x="1490" y="404" width="20" height="20" fill="#4a1796"/><rect x="1510" y="404" width="20" height="20" fill="#5d1296"/><rect x="1530" y="404" width="20" height="20" fill="#700d96"/><rect x="1550" y="404" width="20" height="20" fill="#840896"/><rect x="1570" y="404" width="20" height="20" fill="#960295"/><rect x="1590" y="404" width="20" height="20" fill="#960083"/><rect x="1610" y="404" width="20" height="20" fill="#960075"/><rect x="1630" y="404" width="20" height="20" fill="#960069"/><rect x="1650" y="404" width="20" height="20" fill="#960060"/><rect x="1670" y="404" width="20" height="20" fill="#960057"/><rect x="1690" y="404" width="20" height="20" fill="#960050"/><rect x="1710" y="404" width="20" height="20" fill="#96004a"/><rect x="1730" y="404" width="20" height="20" fill="#960045"/><rect x="1750" y="404" width="20" height="20" fill="#960040"/><rect x="1770" y="404" width="20" height="20" fill="#96003c"/><rect x="1790" y="404" width="20" height="20" fill="#960038"/><rect x="1810" y="404" width="20" height="20" fill="#960034"/><rect x="1830" y="404" width="20" height="20" fill="#960031"/><rect x="1850" y="404" width="20" height="20" fill="#96002e"/><rect x="1870" y="404" width="20" height="20" fill="#96002c"/><rect x="1890" y="404" width="20" height="20" fill="#960029"/><rect x="1910" y="404" width="20" height="20" fill="#960027"/><rect x="1230" y="424" width="20" height="20" fill="#004696"/><rect x="1250" y="424" width="20" height="20" fill="#004396"/><rect x="1270" y="424" width="20" height="20" fill="#003f96"/><rect x="1290" y="424" width="20" height="20" fill="#003b96"/><rect x="1310" y="424" width="20" height="20" fill="#003796"/><rect x="1330" y="424" width="20" height="20" fill="#003396"/><rect x="1350" y="424" width="20" height="20" fill="#002f96"/><rect x="1370" y="424" width="20" height="20" fill="#002b96"/><rect x="1390" y="424" width="20" height="20" fill="#002796"/><rect x="1410" y="424" width="20" height="20" fill="#002396"/><rect x="1430" y="424" width="20" height="20" fill="#101f96"/><rect x="1450" y="424" width="20" height="20" fill="#201a96"/><rect x="1470" y="424" width="20" height="20" fill="#311696"/><rect x="1490" y="424" width="20" height="20" fill="#421196"/><rect x="1510" y="424" width="20" height="20" fill="#530d96"/><rect x="1530" y="424" width="20" height="20" fill="#640896"/><rect x="1550" y="424" width="20" height="20" fill="#760396"/><rect x="1570" y="424" width="20" height="20" fill="#880096"/><rect x="1590" y="424" width="20" height="20" fill="#960092"/><rect x="1610" y="424" width="20" height="20" fill="#960082"/><rect x="1630" y="424" width="20" height="20" fill="#960075"/><rect x="1650" y="424" width="20" height="20" fill="#96006a"/><rect x="1670" y="424" width="20" height="20" fill="#960061"/><rect x="1690" y="424" width="20" height="20" fill="#960059"/><rect x="1710" y="424" width="20" height="20" fill="#960052"/><rect x="1730" y="424" width="20" height="20" fill="#96004c"/><rect x="1750" y="424" width="20" height="20" fill="#960047"/><rect x="1770" y="424" width="20" height="20" fill="#960042"/><rect x="1790" y="424" width="20" height="20" fill="#96003e"/><rect x="1810" y="424" width="20" height="20" fill="#96003a"/><rect x="1830" y="424" width="20" height="20" fill="#960037"/><rect x="1850" y="424" width="20" height="20" fill="#960034"/><rect x="1870" y="424" width="20" height="20" fill="#960031"/><rect x="1890" y="424" width="20" height="20" fill="#96002f"/><rect x="1910" y="424" width="20" height="20" fill="#96002c"/><rect x="1230" y="444" width="20" height="20" fill="#003e96"/><rect x="1250" y="444" width="20" height="20" fill="#003b96"/><rect x="1270" y="444" width="20" height="20" fill="#003796"/><rect x="1290" y="444" width="20" height="20" fill="#003496"/><rect x="1310" y="444" width="20" height="20" fill="#003096"/><rect x="1330" y="444" width="20" height="20" fill="#002c96"/><rect x="1350" y="444" width="20" height="20" fill="#002996"/><rect x="1370" y="444" width="20" height="20" fill="#002596"/><rect x="1390" y="444" width="20" height="20" fill="#002196"/><rect x="1410" y="444" width="20" height="20" fill="#001d96"/><rect x="1430" y="444" width="20" height="20" fill="#0d1996"/><rect x="1450" y="444" width="20" height="20" fill="#1c1596"/><rect x="1470" y="444" width="20" height="20" fill="#2b1196"/><rect x="1490" y="444" width="20" height="20" fill="#3a0c96"/><rect x="1510" y="444" width="20" height="20" fill="#4a0896"/><rect x="1530" y="444" width="20" height="20" fill="#5a0496"/><rect x="1550" y="444" width="20" height="20" fill="#6b0096"/><rect x="1570" y="444" width="20" height="20" fill="#7b0096"/><rect x="1590" y="444" width="20" height="20" fill="#8c0096"/><rect x="1610" y="444" width="20" height="20" fill="#960090"/><rect x="1630" y="444" width="20" height="20" fill="#960081"/><rect x="1650" y="444" width="20" height="20" fill="#960075"/><rect x="1670" y="444" width="20" height="20" fill="#96006b"/><rect x="1690" y="444" width="20" height="20" fill="#960062"/><rect x="1710" y="444" width="20" height="20" fill="#96005b"/><rect x="1730" y="444" width="20" height="20" fill="#960054"/><rect x="1750" y="444" width="20" height="20" fill="#96004f"/><rect x="1770" y="444" width="20" height="20" fill="#960049"/><rect x="1790" y="444" width="20" height="20" fill="#960045"/><rect x="1810" y="444" width="20" height="20" fill="#960041"/><rect x="1830" y="444" width="20" height="20" fill="#96003d"/><rect x="1850" y="444" width="20" height="20" fill="#96003a"/><rect x="1870" y="444" width="20" height="20" fill="#960036"/><rect x="1890" y="444" width="20" height="20" fill="#960034"/><rect x="1910" y="444" width="20" height="20" fill="#960031"/><rect x="1230" y="464" width="20" height="20" fill="#003796"/><rect x="1250" y="464" width="20" height="20" fill="#003496"/><rect x="1270" y="464" width="20" height="20" fill="#003196"/><rect x="1290" y="464" width="20" height="20" fill="#002d96"/><rect x="1310" y="464" width="20" height="20" fill="#002a96"/><rect x="1330" y="464" width="20" height="20" fill="#002696"/><rect x="1350" y="464" width="20" height="20" fill="#002396"/><rect x="1370" y="464" width="20" height="20" fill="#001f96"/><rect x="1390" y="464" width="20" height="20" fill="#001b96"/><rect x="1410" y="464" width="20" height="20" fill="#001896"/><rect x="1430" y="464" width="20" height="20" fill="#0a1496"/><rect x="1450" y="464" width="20" height="20" fill="#181096"/><rect x="1470" y="464" width="20" height="20" fill="#260c96"/><rect x="1490" y="464" width="20" height="20" fill="#340896"/><rect x="1510" y="464" width="20" height="20" fill="#430496"/><rect x="1530" y="464" width="20" height="20" fill="#520096"/><rect x="1550" y="464" width="20" height="20" fill="#610096"/><rect x="1570" y="464" width="20" height="20" fill="#700096"/><rect x="1590" y="464" width="20" height="20" fill="#800096"/><rect x="1610" y="464" width="20" height="20" fill="#900096"/><rect x="1630" y="464" width="20" height="20" fill="#96008e"/><rect x="1650" y="464" width="20" height="20" fill="#960080"/><rect x="1670" y="464" width="20" height="20" fill="#960075"/><rect x="1690" y="464" width="20" height="20" fill="#96006c"/><rect x="1710" y="464" width="20" height="20" fill="#960064"/><rect x="1730" y="464" width="20" height="20" fill="#96005c"/><rect x="1750" y="464" width="20" height="20" fill="#960056"/><rect x="1770" y="464" width="20" height="20" fill="#960050"/><rect x="1790" y="464" width="20" height="20" fill="#96004b"/><rect x="1810" y="464" width="20" height="20" fill="#960047"/><rect x="1830" y="464" width="20" height="20" fill="#960043"/><rect x="1850" y="464" width="20" height="20" fill="#96003f"/><rect x="1870" y="464" width="20" height="20" fill="#96003c"/><rect x="1890" y="464" width="20" height="20" fill="#960039"/><rect x="1910" y="464" width="20" height="20" fill="#960036"/><rect x="1230" y="484" width="20" height="20" fill="#003196"/><rect x="1250" y="484" width="20" height="20" fill="#002e96"/><rect x="1270" y="484" width="20" height="20" fill="#002b96"/><rect x="1290" y="484" width="20" height="20" fill="#002796"/><rect x="1310" y="484" width="20" height="20" fill="#002496"/><rect x="1330" y="484" width="20" height="20" fill="#002196"/><rect x="1350" y="484" width="20" height="20" fill="#001e96"/><rect x="1370" y="484" width="20" height="20" fill="#001a96"/><rect x="1390" y="484" width="20" height="20" fill="#001796"/><rect x="1410" y="484" width="20" height="20" fill="#001396"/><rect x="1430" y="484" width="20" height="20" fill="#081096"/><rect x="1450" y="484" width="20" height="20" fill="#150c96"/><rect x="1470" y="484" width="20" height="20" fill="#220896"/><rect x="1490" y="484" width="20" height="20" fill="#2f0596"/><rect x="1510" y="484" width="20" height="20" fill="#3d0196"/><rect x="1530" y="484" width="20" height="20" fill="#4a0096"/><rect x="1550" y="484" width="20" height="20" fill="#580096"/><rect x="1570" y="484" width="20" height="20" fill="#670096"/><rect x="1590" y="484" width="20" height="20" fill="#750096"/><rect x="1610" y="484" width="20" height="20" fill="#840096"/><rect x="1630" y="484" width="20" height="20" fill="#930096"/><rect x="1650" y="484" width="20" height="20" fill="#96008c"/><rect x="1670" y="484" width="20" height="20" fill="#960080"/><rect x="1690" y="484" width="20" height="20" fill="#960075"/><rect x="1710" y="484" width="20" height="20" fill="#96006c"/><rect x="1730" y="484" width="20" height="20" fill="#960065"/><rect x="1750" y="484" width="20" height="20" fill="#96005e"/><rect x="1770" y="484" width="20" height="20" fill="#960058"/><rect x="1790" y="484" width="20" height="20" fill="#960052"/><rect x="1810" y="484" width="20" height="20" fill="#96004d"/><rect x="1830" y="484" width="20" height="20" fill="#960049"/><rect x="1850" y="484" width="20" height="20" fill="#960045"/><rect x="1870" y="484" width="20" height="20" fill="#960041"/><rect x="1890" y="484" width="20" height="20" fill="#96003e"/><rect x="1910" y="484" width="20" height="20" fill="#96003b"/><rect x="1230" y="504" width="20" height="20" fill="#002c96"/><rect x="1250" y="504" width="20" height="20" fill="#002996"/><rect x="1270" y="504" width="20" height="20" fill="#002696"/><rect x="1290" y="504" width="20" height="20" fill="#002296"/><rect x="1310" y="504" width="20" height="20" fill="#001f96"/><rect x="1330" y="504" width="20" height="20" fill="#001c96"/><rect x="1350" y="504" width="20" height="20" fill="#001996"/><rect x="1370" y="504" width="20" height="20" fill="#001696"/><rect x="1390" y="504" width="20" height="20" fill="#001396"/><rect x="1410" y="504" width="20" height="20" fill="#000f96"/><rect x="1430" y="504" width="20" height="20" fill="#050c96"/><rect x="1450" y="504" width="20" height="20" fill="#120896"/><rect x="1470" y="504" width="20" height="20" fill="#1e0596"/><rect x="1490" y="504" width="20" height="20" fill="#2a0196"/><rect x="1510" y="504" width="20" height="20" fill="#370096"/><rect x="1530" y="504" width="20" height="20" fill="#440096"/><rect x="1550" y="504" width="20" height="20" fill="#510096"/><rect x="1570" y="504" width="20" height="20" fill="#5e0096"/><rect x="1590" y="504" width="20" height="20" fill="#6c0096"/><rect x="1610" y="504" width="20" height="20" fill="#790096"/><rect x="1630" y="504" width="20" height="20" fill="#870096"/><rect x="1650" y="504" width="20" height="20" fill="#950096"/><rect x="1670" y="504" width="20" height="20" fill="#96008a"/><rect x="1690" y="504" width="20" height="20" fill="#96007f"/><rect x="1710" y="504" width="20" height="20" fill="#960075"/><rect x="1730" y="504" width="20" height="20" fill="#96006d"/><rect x="1750" y="504" width="20" height="20" fill="#960066"/><rect x="1770" y="504" width="20" height="20" fill="#96005f"/><rect x="1790" y="504" width="20" height="20" fill="#960059"/><rect x="1810" y="504" width="20" height="20" fill="#960054"/><rect x="1830" y="504" width="20" height="20" fill="#96004f"/><rect x="1850" y="504" width="20" height="20" fill="#96004b"/><rect x="1870" y="504" width="20" height="20" fill="#960047"/><rect x="1890" y="504" width="20" height="20" fill="#960043"/><rect x="1910" y="504" width="20" height="20" fill="#960040"/><rect x="1230" y="524" width="20" height="20" fill="#002796"/><rect x="1250" y="524" width="20" height="20" fill="#002496"/><rect x="1270" y="524" width="20" height="20" fill="#002196"/><rect x="1290" y="524" width="20" height="20" fill="#001e96"/><rect x="1310" y="524" width="20" height="20" fill="#001b96"/><rect x="1330" y="524" width="20" height="20" fill="#001896"/><rect x="1350" y="524" width="20" height="20" fill="#001596"/><rect x="1370" y="524" width="20" height="20" fill="#001296"/><rect x="1390" y="524" width="20" height="20" fill="#000f96"/><rect x="1410" y="524" width="20" height="20" fill="#000c96"/><rect x="1430" y="524" width="20" height="20" fill="#040996"/><rect x="1450" y="524" width="20" height="20" fill="#0f0596"/><rect x="1470" y="524" width="20" height="20" fill="#1b0296"/><rect x="1490" y="524" width="20" height="20" fill="#260096"/><rect x="1510" y="524" width="20" height="20" fill="#320096"/><rect x="1530" y="524" width="20" height="20" fill="#3e0096"/><rect x="1550" y="524" width="20" height="20" fill="#4b0096"/><rect x="1570" y="524" width="20" height="20" fill="#570096"/><rect x="1590" y="524" width="20" height="20" fill="#640096"/><rect x="1610" y="524" width="20" height="20" fill="#700096"/><rect x="1630" y="524" width="20" height="20" fill="#7d0096"/><rect x="1650" y="524" width="20" height="20" fill="#8a0096"/><rect x="1670" y="524" width="20" height="20" fill="#960095"/><rect x="1690" y="524" width="20" height="20" fill="#960089"/><rect x="1710" y="524" width="20" height="20" fill="#96007f"/><rect x="1730" y="524" width="20" height="20" fill="#960075"/><rect x="1750" y="524" width="20" height="20" fill="#96006d"/><rect x="1770" y="524" width="20" height="20" fill="#960066"/><rect x="1790" y="524" width="20" height="20" fill="#960060"/><rect x="1810" y="524" width="20" height="20" fill="#96005a"/><rect x="1830" y="524" width="20" height="20" fill="#960055"/><rect x="1850" y="524" width="20" height="20" fill="#960051"/><rect x="1870" y="524" width="20" height="20" fill="#96004c"/><rect x="1890" y="524" width="20" height="20" fill="#960049"/><rect x="1910" y="524" width="20" height="20" fill="#960045"/><rect x="1230" y="544" width="20" height="20" fill="#002296"/><rect x="1250" y="544" width="20" height="20" fill="#002096"/><rect x="1270" y="544" width="20" height="20" fill="#001d96"/><rect x="1290" y="544" width="20" height="20" fill="#001a96"/><rect x="1310" y="544" width="20" height="20" fill="#001796"/><rect x="1330" y="544" width="20" height="20" fill="#001496"/><rect x="1350" y="544" width="20" height="20" fill="#001196"/><rect x="1370" y="544" width="20" height="20" fill="#000f96"/><rect x="1390" y="544" width="20" height="20" fill="#000c96"/><rect x="1410" y="544" width="20" height="20" fill="#000996"/><rect x="1430" y="544" width="20" height="20" fill="#020696"/><rect x="1450" y="544" width="20" height="20" fill="#0d0296"/><rect x="1470" y="544" width="20" height="20" fill="#180096"/><rect x="1490" y="544" width="20" height="20" fill="#230096"/><rect x="1510" y="544" width="20" height="20" fill="#2e0096"/><rect x="1530" y="544" width="20" height="20" fill="#390096"/><rect x="1550" y="544" width="20" height="20" fill="#450096"/><rect x="1570" y="544" width="20" height="20" fill="#510096"/><rect x="1590" y="544" width="20" height="20" fill="#5c0096"/><rect x="1610" y="544" width="20" height="20" fill="#680096"/><rect x="1630" y="544" width="20" height="20" fill="#740096"/><rect x="1650" y="544" width="20" height="20" fill="#810096"/><rect x="1670" y="544" width="20" height="20" fill="#8d0096"/><rect x="1690" y="544" width="20" height="20" fill="#960093"/><rect x="1710" y="544" width="20" height="20" fill="#960088"/><rect x="1730" y="544" width="20" height="20" fill="#96007e"/><rect x="1750" y="544" width="20" height="20" fill="#960075"/><rect x="1770" y="544" width="20" height="20" fill="#96006e"/><rect x="1790" y="544" width="20" height="20" fill="#960067"/><rect x="1810" y="544" width="20" height="20" fill="#960061"/><rect x="1830" y="544" width="20" height="20" fill="#96005c"/><rect x="1850" y="544" width="20" height="20" fill="#960057"/><rect x="1870" y="544" width="20" height="20" fill="#960052"/><rect x="1890" y="544" width="20" height="20" fill="#96004e"/><rect x="1910" y="544" width="20" height="20" fill="#96004a"/><rect x="1230" y="564" width="20" height="20" fill="#001e96"/><rect x="1250" y="564" width="20" height="20" fill="#001c96"/><rect x="1270" y="564" width="20" height="20" fill="#001996"/><rect x="1290" y="564" width="20" height="20" fill="#001696"/><rect x="1310" y="564" width="20" height="20" fill="#001496"/><rect x="1330" y="564" width="20" height="20" fill="#001196"/><rect x="1350" y="564" width="20" height="20" fill="#000e96"/><rect x="1370" y="564" width="20" height="20" fill="#000b96"/><rect x="1390" y="564" width="20" height="20" fill="#000996"/><rect x="1410" y="564" width="20" height="20" fill="#000696"/><rect x="1430" y="564" width="20" height="20" fill="#010396"/><rect x="1450" y="564" width="20" height="20" fill="#0b0096"/><rect x="1470" y="564" width="20" height="20" fill="#150096"/><rect x="1490" y="564" width="20" height="20" fill="#200096"/><rect x="1510" y="564" width="20" height="20" fill="#2a0096"/><rect x="1530" y="564" width="20" height="20" fill="#350096"/><rect x="1550" y="564" width="20" height="20" fill="#400096"/><rect x="1570" y="564" width="20" height="20" fill="#4b0096"/><rect x="1590" y="564" width="20" height="20" fill="#560096"/><rect x="1610" y="564" width="20" height="20" fill="#610096"/><rect x="1630" y="564" width="20" height="20" fill="#6d0096"/><rect x="1650" y="564" width="20" height="20" fill="#780096"/><rect x="1670" y="564" width="20" height="20" fill="#840096"/><rect x="1690" y="564" width="20" height="20" fill="#900096"/><rect x="1710" y="564" width="20" height="20" fill="#960091"/><rect x="1730" y="564" width="20" height="20" fill="#960087"/><rect x="1750" y="564" width="20" height="20" fill="#96007e"/><rect x="1770" y="564" width="20" height="20" fill="#960076"/><rect x="1790" y="564" width="20" height="20" fill="#96006e"/><rect x="1810" y="564" width="20" height="20" fill="#960068"/><rect x="1830" y="564" width="20" height="20" fill="#960062"/><rect x="1850" y="564" width="20" height="20" fill="#96005d"/><rect x="1870" y="564" width="20" height="20" fill="#960058"/><rect x="1890" y="564" width="20" height="20" fill="#960054"/><rect x="1910" y="564" width="20" height="20" fill="#960050"/><rect x="1230" y="584" width="20" height="20" fill="#001b96"/><rect x="1250" y="584" width="20" height="20" fill="#001896"/><rect x="1270" y="584" width="20" height="20" fill="#001696"/><rect x="1290" y="584" width="20" height="20" fill="#001396"/><rect x="1310" y="584" width="20" height="20" fill="#001196"/><rect x="1330" y="584" width="20" height="20" fill="#000e96"/><rect x="1350" y="584" width="20" height="20" fill="#000b96"/><rect x="1370" y="584" width="20" height="20" fill="#000996"/><rect x="1390" y="584" width="20" height="20" fill="#000696"/><rect x="1410" y="584" width="20" height="20" fill="#000396"/><rect x="1430" y="584" width="20" height="20" fill="#000196"/><rect x="1450" y="584" width="20" height="20" fill="#090096"/><rect x="1470" y="584" width="20" height="20" fill="#130096"/><rect x="1490" y="584" width="20" height="20" fill="#1d0096"/><rect x="1510" y="584" width="20" height="20" fill="#270096"/><rect x="1530" y="584" width="20" height="20" fill="#310096"/><rect x="1550" y="584" width="20" height="20" fill="#3b0096"/><rect x="1570" y="584" width="20" height="20" fill="#460096"/><rect x="1590" y="584" width="20" height="20" fill="#500096"/><rect x="1610" y="584" width="20" height="20" fill="#5b0096"/><rect x="1630" y="584" width="20" height="20" fill="#660096"/><rect x="1650" y="584" width="20" height="20" fill="#700096"/><rect x="1670" y="584" width="20" height="20" fill="#7b0096"/><rect x="1690" y="584" width="20" height="20" fill="#870096"/><rect x="1710" y="584" width="20" height="20" fill="#920096"/><rect x="1730" y="584" width="20" height="20" fill="#960090"/><rect x="1750" y="584" width="20" height="20" fill="#960086"/><rect x="1770" y="584" width="20" height="20" fill="#96007d"/><rect x="1790" y="584" width="20" height="20" fill="#960076"/><rect x="1810" y="584" width="20" height="20" fill="#96006f"/><rect x="1830" y="584" width="20" height="20" fill="#960068"/><rect x="1850" y="584" width="20" height="20" fill="#960063"/><rect x="1870" y="584" width="20" height="20" fill="#96005e"/><rect x="1890" y="584" width="20" height="20" fill="#960059"/><rect x="1910" y="584" width="20" height="20" fill="#960055"/><rect x="1230" y="604" width="20" height="20" fill="#001896"/><rect x="1250" y="604" width="20" height="20" fill="#001596"/><rect x="1270" y="604" width="20" height="20" fill="#001396"/><rect x="1290" y="604" width="20" height="20" fill="#001096"/><rect x="1310" y="604" width="20" height="20" fill="#000e96"/><rect x="1330" y="604" width="20" height="20" fill="#000b96"/><rect x="1350" y="604" width="20" height="20" fill="#000996"/><rect x="1370" y="604" width="20" height="20" fill="#000696"/><rect x="1390" y="604" width="20" height="20" fill="#000496"/><rect x="1410" y="604" width="20" height="20" fill="#000196"/><rect x="1430" y="604" width="20" height="20" fill="#000096"/><rect x="1450" y="604" width="20" height="20" fill="#070096"/><rect x="1470" y="604" width="20" height="20" fill="#110096"/><rect x="1490" y="604" width="20" height="20" fill="#1a0096"/><rect x="1510" y="604" width="20" height="20" fill="#240096"/><rect x="1530" y="604" width="20" height="20" fill="#2d0096"/><rect x="1550" y="604" width="20" height="20" fill="#370096"/><rect x="1570" y="604" width="20" height="20" fill="#410096"/><rect x="1590" y="604" width="20" height="20" fill="#4b0096"/><rect x="1610" y="604" width="20" height="20" fill="#550096"/><rect x="1630" y="604" width="20" height="20" fill="#5f0096"/><rect x="1650" y="604" width="20" height="20" fill="#6a0096"/><rect x="1670" y="604" width="20" height="20" fill="#740096"/><rect x="1690" y="604" width="20" height="20" fill="#7f0096"/><rect x="1710" y="604" width="20" height="20" fill="#890096"/><rect x="1730" y="604" width="20" height="20" fill="#940096"/><rect x="1750" y="604" width="20" height="20" fill="#96008e"/><rect x="1770" y="604" width="20" height="20" fill="#960085"/><rect x="1790" y="604" width="20" height="20" fill="#96007d"/><rect x="1810" y="604" width="20" height="20" fill="#960076"/><rect x="1830" y="604" width="20" height="20" fill="#96006f"/><rect x="1850" y="604" width="20" height="20" fill="#960069"/><rect x="1870" y="604" width="20" height="20" fill="#960064"/><rect x="1890" y="604" width="20" height="20" fill="#96005f"/><rect x="1910" y="604" width="20" height="20" fill="#96005a"/><rect x="1230" y="624" width="20" height="20" fill="#001596"/><rect x="1250" y="624" width="20" height="20" fill="#001296"/><rect x="1270" y="624" width="20" height="20" fill="#001096"/><rect x="1290" y="624" width="20" height="20" fill="#000e96"/><rect x="1310" y="624" width="20" height="20" fill="#000b96"/><rect x="1330" y="624" width="20" height="20" fill="#000996"/><rect x="1350" y="624" width="20" height="20" fill="#000696"/><rect x="1370" y="624" width="20" height="20" fill="#000496"/><rect x="1390" y="624" width="20" height="20" fill="#000196"/><rect x="1410" y="624" width="20" height="20" fill="#000096"/><rect x="1430" y="624" width="20" height="20" fill="#000096"/><rect x="1450" y="624" width="20" height="20" fill="#060096"/><rect x="1470" y="624" width="20" height="20" fill="#0f0096"/><rect x="1490" y="624" width="20" height="20" fill="#180096"/><rect x="1510" y="624" width="20" height="20" fill="#210096"/><rect x="1530" y="624" width="20" height="20" fill="#2a0096"/><rect x="1550" y="624" width="20" height="20" fill="#330096"/><rect x="1570" y="624" width="20" height="20" fill="#3d0096"/><rect x="1590" y="624" width="20" height="20" fill="#460096"/><rect x="1610" y="624" width="20" height="20" fill="#500096"/><rect x="1630" y="624" width="20" height="20" fill="#590096"/><rect x="1650" y="624" width="20" height="20" fill="#630096"/><rect x="1670" y="624" width="20" height="20" fill="#6d0096"/><rect x="1690" y="624" width="20" height="20" fill="#770096"/><rect x="1710" y="624" width="20" height="20" fill="#810096"/><rect x="1730" y="624" width="20" height="20" fill="#8c0096"/><rect x="1750" y="624" width="20" height="20" fill="#960096"/><rect x="1770" y="624" width="20" height="20" fill="#96008d"/><rect x="1790" y="624" width="20" height="20" fill="#960084"/><rect x="1810" y="624" width="20" height="20" fill="#96007d"/><rect x="1830" y="624" width="20" height="20" fill="#960076"/><rect x="1850" y="624" width="20" height="20" fill="#96006f"/><rect x="1870" y="624" width="20" height="20" fill="#96006a"/><rect x="1890" y="624" width="20" height="20" fill="#960064"/><rect x="1910" y="624" width="20" height="20" fill="#960060"/><rect x="1230" y="644" width="20" height="20" fill="#001296"/><rect x="1250" y="644" width="20" height="20" fill="#001096"/><rect x="1270" y="644" width="20" height="20" fill="#000d96"/><rect x="1290" y="644" width="20" height="20" fill="#000b96"/><rect x="1310" y="644" width="20" height="20" fill="#000996"/><rect x="1330" y="644" width="20" height="20" fill="#000796"/><rect x="1350" y="644" width="20" height="20" fill="#000496"/><rect x="1370" y="644" width="20" height="20" fill="#000296"/><rect x="1390" y="644" width="20" height="20" fill="#000096"/><rect x="1410" y="644" width="20" height="20" fill="#000096"/><rect x="1430" y="644" width="20" height="20" fill="#000096"/><rect x="1450" y="644" width="20" height="20" fill="#040096"/><rect x="1470" y="644" width="20" height="20" fill="#0d0096"/><rect x="1490" y="644" width="20" height="20" fill="#160096"/><rect x="1510" y="644" width="20" height="20" fill="#1e0096"/><rect x="1530" y="644" width="20" height="20" fill="#270096"/><rect x="1550" y="644" width="20" height="20" fill="#300096"/><rect x="1570" y="644" width="20" height="20" fill="#390096"/><rect x="1590" y="644" width="20" height="20" fill="#420096"/><rect x="1610" y="644" width="20" height="20" fill="#4b0096"/><rect x="1630" y="644" width="20" height="20" fill="#540096"/><rect x="1650" y="644" width="20" height="20" fill="#5e0096"/><rect x="1670" y="644" width="20" height="20" fill="#670096"/><rect x="1690" y="644" width="20" height="20" fill="#700096"/><rect x="1710" y="644" width="20" height="20" fill="#7a0096"/><rect x="1730" y="644" width="20" height="20" fill="#840096"/><rect x="1750" y="644" width="20" height="20" fill="#8e0096"/><rect x="1770" y="644" width="20" height="20" fill="#960095"/><rect x="1790" y="644" width="20" height="20" fill="#96008c"/><rect x="1810" y="644" width="20" height="20" fill="#960084"/><rect x="1830" y="644" width="20" height="20" fill="#96007c"/><rect x="1850" y="644" width="20" height="20" fill="#960076"/><rect x="1870" y="644" width="20" height="20" fill="#960070"/><rect x="1890" y="644" width="20" height="20" fill="#96006a"/><rect x="1910" y="644" width="20" height="20" fill="#960065"/><rect x="1230" y="664" width="20" height="20" fill="#000f96"/><rect x="1250" y="664" width="20" height="20" fill="#000d96"/><rect x="1270" y="664" width="20" height="20" fill="#000b96"/><rect x="1290" y="664" width="20" height="20" fill="#000996"/><rect x="1310" y="664" width="20" height="20" fill="#000796"/><rect x="1330" y="664" width="20" height="20" fill="#000496"/><rect x="1350" y="664" width="20" height="20" fill="#000296"/><rect x="1370" y="664" width="20" height="20" fill="#000096"/><rect x="1390" y="664" width="20" height="20" fill="#000096"/><rect x="1410" y="664" width="20" height="20" fill="#000096"/><rect x="1430" y="664" width="20" height="20" fill="#000096"/><rect x="1450" y="664" width="20" height="20" fill="#030096"/><rect x="1470" y="664" width="20" height="20" fill="#0b0096"/><rect x="1490" y="664" width="20" height="20" fill="#140096"/><rect x="1510" y="664" width="20" height="20" fill="#1c0096"/><rect x="1530" y="664" width="20" height="20" fill="#240096"/><rect x="1550" y="664" width="20" height="20" fill="#2d0096"/><rect x="1570" y="664" width="20" height="20" fill="#350096"/><rect x="1590" y="664" width="20" height="20" fill="#3e0096"/><rect x="1610" y="664" width="20" height="20" fill="#470096"/><rect x="1630" y="664" width="20" height="20" fill="#4f0096"/><rect x="1650" y="664" width="20" height="20" fill="#580096"/><rect x="1670" y="664" width="20" height="20" fill="#610096"/><rect x="1690" y="664" width="20" height="20" fill="#6a0096"/><rect x="1710" y="664" width="20" height="20" fill="#740096"/><rect x="1730" y="664" width="20" height="20" fill="#7d0096"/><rect x="1750" y="664" width="20" height="20" fill="#860096"/><rect x="1770" y="664" width="20" height="20" fill="#900096"/><rect x="1790" y="664" width="20" height="20" fill="#960094"/><rect x="1810" y="664" width="20" height="20" fill="#96008b"/><rect x="1830" y="664" width="20" height="20" fill="#960083"/><rect x="1850" y="664" width="20" height="20" fill="#96007c"/><rect x="1870" y="664" width="20" height="20" fill="#960076"/><rect x="1890" y="664" width="20" height="20" fill="#960070"/><rect x="1910" y="664" width="20" height="20" fill="#96006a"/><rect x="1230" y="684" width="20" height="20" fill="#000d96"/><rect x="1250" y="684" width="20" height="20" fill="#000b96"/><rect x="1270" y="684" width="20" height="20" fill="#000996"/><rect x="1290" y="684" width="20" height="20" fill="#000796"/><rect x="1310" y="684" width="20" height="20" fill="#000596"/><rect x="1330" y="684" width="20" height="20" fill="#000296"/><rect x="1350" y="684" width="20" height="20" fill="#000096"/><rect x="1370" y="684" width="20" height="20" fill="#000096"/><rect x="1390" y="684" width="20" height="20" fill="#000096"/><rect x="1410" y="684" width="20" height="20" fill="#000096"/><rect x="1430" y="684" width="20" height="20" fill="#000096"/><rect x="1450" y="684" width="20" height="20" fill="#020096"/><rect x="1470" y="684" width="20" height="20" fill="#0a0096"/><rect x="1490" y="684" width="20" height="20" fill="#120096"/><rect x="1510" y="684" width="20" height="20" fill="#1a0096"/><rect x="1530" y="684" width="20" height="20" fill="#220096"/><rect x="1550" y="684" width="20" height="20" fill="#2a0096"/><rect x="1570" y="684" width="20" height="20" fill="#320096"/><rect x="1590" y="684" width="20" height="20" fill="#3a0096"/><rect x="1610" y="684" width="20" height="20" fill="#430096"/><rect x="1630" y="684" width="20" height="20" fill="#4b0096"/><rect x="1650" y="684" width="20" height="20" fill="#540096"/><rect x="1670" y="684" width="20" height="20" fill="#5c0096"/><rect x="1690" y="684" width="20" height="20" fill="#650096"/><rect x="1710" y="684" width="20" height="20" fill="#6e0096"/><rect x="1730" y="684" width="20" height="20" fill="#760096"/><rect x="1750" y="684" width="20" height="20" fill="#7f0096"/><rect x="1770" y="684" width="20" height="20" fill="#880096"/><rect x="1790" y="684" width="20" height="20" fill="#910096"/><rect x="1810" y="684" width="20" height="20" fill="#960092"/><rect x="1830" y="684" width="20" height="20" fill="#96008a"/><rect x="1850" y="684" width="20" height="20" fill="#960083"/><rect x="1870" y="684" width="20" height="20" fill="#96007c"/><rect x="1890" y="684" width="20" height="20" fill="#960076"/><rect x="1910" y="684" width="20" height="20" fill="#960070"/><rect x="1230" y="704" width="20" height="20" fill="#000b96"/><rect x="1250" y="704" width="20" height="20" fill="#000996"/><rect x="1270" y="704" width="20" height="20" fill="#000796"/><rect x="1290" y="704" width="20" height="20" fill="#000596"/><rect x="1310" y="704" width="20" height="20" fill="#000396"/><rect x="1330" y="704" width="20" height="20" fill="#000196"/><rect x="1350" y="704" width="20" height="20" fill="#000096"/><rect x="1370" y="704" width="20" height="20" fill="#000096"/><rect x="1390" y="704" width="20" height="20" fill="#000096"/><rect x="1410" y="704" width="20" height="20" fill="#000096"/><rect x="1430" y="704" width="20" height="20" fill="#000096"/><rect x="1450" y="704" width="20" height="20" fill="#010096"/><rect x="1470" y="704" width="20" height="20" fill="#080096"/><rect x="1490" y="704" width="20" height="20" fill="#100096"/><rect x="1510" y="704" width="20" height="20" fill="#180096"/><rect x="1530" y="704" width="20" height="20" fill="#1f0096"/><rect x="1550" y="704" width="20" height="20" fill="#270096"/><rect x="1570" y="704" width="20" height="20" fill="#2f0096"/><rect x="1590" y="704" width="20" height="20" fill="#370096"/><rect x="1610" y="704" width="20" height="20" fill="#3f0096"/><rect x="1630" y="704" width="20" height="20" fill="#470096"/><rect x="1650" y="704" width="20" height="20" fill="#4f0096"/><rect x="1670" y="704" width="20" height="20" fill="#570096"/><rect x="1690" y="704" width="20" height="20" fill="#600096"/><rect x="1710" y="704" width="20" height="20" fill="#680096"/><rect x="1730" y="704" width="20" height="20" fill="#710096"/><rect x="1750" y="704" width="20" height="20" fill="#790096"/><rect x="1770" y="704" width="20" height="20" fill="#820096"/><rect x="1790" y="704" width="20" height="20" fill="#8a0096"/><rect x="1810" y="704" width="20" height="20" fill="#930096"/><rect x="1830" y="704" width="20" height="20" fill="#960091"/><rect x="1850" y="704" width="20" height="20" fill="#960089"/><rect x="1870" y="704" width="20" height="20" fill="#960082"/><rect x="1890" y="704" width="20" height="20" fill="#96007c"/><rect x="1910" y="704" width="20" height="20" fill="#960076"/><rect x="1230" y="724" width="20" height="20" fill="#000996"/><rect x="1250" y="724" width="20" height="20" fill="#000796"/><rect x="1270" y="724" width="20" height="20" fill="#000596"/><rect x="1290" y="724" width="20" height="20" fill="#000396"/><rect x="1310" y="724" width="20" height="20" fill="#000196"/><rect x="1330" y="724" width="20" height="20" fill="#000096"/><rect x="1350" y="724" width="20" height="20" fill="#000096"/><rect x="1370" y="724" width="20" height="20" fill="#000096"/><rect x="1390" y="724" width="20" height="20" fill="#000096"/><rect x="1410" y="724" width="20" height="20" fill="#000096"/><rect x="1430" y="724" width="20" height="20" fill="#000096"/><rect x="1450" y="724" width="20" height="20" fill="#000096"/><rect x="1470" y="724" width="20" height="20" fill="#070096"/><rect x="1490" y="724" width="20" height="20" fill="#0e0096"/><rect x="1510" y="724" width="20" height="20" fill="#160096"/><rect x="1530" y="724" width="20" height="20" fill="#1d0096"/><rect x="1550" y="724" width="20" height="20" fill="#250096"/><rect x="1570" y="724" width="20" height="20" fill="#2c0096"/><rect x="1590" y="724" width="20" height="20" fill="#340096"/><rect x="1610" y="724" width="20" height="20" fill="#3c0096"/><rect x="1630" y="724" width="20" height="20" fill="#430096"/><rect x="1650" y="724" width="20" height="20" fill="#4b0096"/><rect x="1670" y="724" width="20" height="20" fill="#530096"/><rect x="1690" y="724" width="20" height="20" fill="#5b0096"/><rect x="1710" y="724" width="20" height="20" fill="#630096"/><rect x="1730" y="724" width="20" height="20" fill="#6b0096"/><rect x="1750" y="724" width="20" height="20" fill="#730096"/><rect x="1770" y="724" width="20" height="20" fill="#7c0096"/><rect x="1790" y="724" width="20" height="20" fill="#840096"/><rect x="1810" y="724" width="20" height="20" fill="#8c0096"/><rect x="1830" y="724" width="20" height="20" fill="#950096"/><rect x="1850" y="724" width="20" height="20" fill="#960090"/><rect x="1870" y="724" width="20" height="20" fill="#960088"/><rect x="1890" y="724" width="20" height="20" fill="#960082"/><rect x="1910" y="724" width="20" height="20" fill="#96007b"/><rect x="1230" y="744" width="20" height="20" fill="#000796"/><rect x="1250" y="744" width="20" height="20" fill="#000596"/><rect x="1270" y="744" width="20" height="20" fill="#000396"/><rect x="1290" y="744" width="20" height="20" fill="#000196"/><rect x="1310" y="744" width="20" height="20" fill="#000096"/><rect x="1330" y="744" width="20" height="20" fill="#000096"/><rect x="1350" y="744" width="20" height="20" fill="#000096"/><rect x="1370" y="744" width="20" height="20" fill="#000096"/><rect x="1390" y="744" width="20" height="20" fill="#000096"/><rect x="1410" y="744" width="20" height="20" fill="#000096"/><rect x="1430" y="744" width="20" height="20" fill="#000096"/><rect x="1450" y="744" width="20" height="20" fill="#000096"/><rect x="1470" y="744" width="20" height="20" fill="#060096"/><rect x="1490" y="744" width="20" height="20" fill="#0d0096"/><rect x="1510" y="744" width="20" height="20" fill="#140096"/><rect x="1530" y="744" width="20" height="20" fill="#1b0096"/><rect x="1550" y="744" width="20" height="20" fill="#220096"/><rect x="1570" y="744" width="20" height="20" fill="#2a0096"/><rect x="1590" y="744" width="20" height="20" fill="#310096"/><rect x="1610" y="744" width="20" height="20" fill="#380096"/><rect x="1630" y="744" width="20" height="20" fill="#400096"/><rect x="1650" y="744" width="20" height="20" fill="#470096"/><rect x="1670" y="744" width="20" height="20" fill="#4f0096"/><rect x="1690" y="744" width="20" height="20" fill="#570096"/><rect x="1710" y="744" width="20" height="20" fill="#5e0096"/><rect x="1730" y="744" width="20" height="20" fill="#660096"/><rect x="1750" y="744" width="20" height="20" fill="#6e0096"/><rect x="1770" y="744" width="20" height="20" fill="#760096"/><rect x="1790" y="744" width="20" height="20" fill="#7e0096"/><rect x="1810" y="744" width="20" height="20" fill="#860096"/><rect x="1830" y="744" width="20" height="20" fill="#8e0096"/><rect x="1850" y="744" width="20" height="20" fill="#960096"/><rect x="1870" y="744" width="20" height="20" fill="#96008f"/><rect x="1890" y="744" width="20" height="20" fill="#960088"/><rect x="1910" y="744" width="20" height="20" fill="#960081"/><rect x="1230" y="764" width="20" height="20" fill="#000796"/><rect x="1250" y="764" width="20" height="20" fill="#000596"/><rect x="1270" y="764" width="20" height="20" fill="#000396"/><rect x="1290" y="764" width="20" height="20" fill="#000196"/><rect x="1310" y="764" width="20" height="20" fill="#000096"/><rect x="1330" y="764" width="20" height="20" fill="#000096"/><rect x="1350" y="764" width="20" height="20" fill="#000096"/><rect x="1370" y="764" width="20" height="20" fill="#000096"/><rect x="1390" y="764" width="20" height="20" fill="#000096"/><rect x="1410" y="764" width="20" height="20" fill="#000096"/><rect x="1430" y="764" width="20" height="20" fill="#000096"/><rect x="1450" y="764" width="20" height="20" fill="#000096"/><rect x="1470" y="764" width="20" height="20" fill="#040096"/><rect x="1490" y="764" width="20" height="20" fill="#0b0096"/><rect x="1510" y="764" width="20" height="20" fill="#120096"/><rect x="1530" y="764" width="20" height="20" fill="#190096"/><rect x="1550" y="764" width="20" height="20" fill="#200096"/><rect x="1570" y="764" width="20" height="20" fill="#270096"/><rect x="1590" y="764" width="20" height="20" fill="#2e0096"/><rect x="1610" y="764" width="20" height="20" fill="#350096"/><rect x="1630" y="764" width="20" height="20" fill="#3c0096"/><rect x="1650" y="764" width="20" height="20" fill="#440096"/><rect x="1670" y="764" width="20" height="20" fill="#4b0096"/><rect x="1690" y="764" width="20" height="20" fill="#520096"/><rect x="1710" y="764" width="20" height="20" fill="#5a0096"/><rect x="1730" y="764" width="20" height="20" fill="#610096"/><rect x="1750" y="764" width="20" height="20" fill="#690096"/><rect x="1770" y="764" width="20" height="20" fill="#700096"/><rect x="1790" y="764" width="20" height="20" fill="#780096"/><rect x="1810" y="764" width="20" height="20" fill="#800096"/><rect x="1830" y="764" width="20" height="20" fill="#880096"/><rect x="1850" y="764" width="20" height="20" fill="#900096"/><rect x="1870" y="764" width="20" height="20" fill="#960095"/><rect x="1890" y="764" width="20" height="20" fill="#96008e"/><rect x="1910" y="764" width="20" height="20" fill="#960087"/></g></g>
<g clip-path="url(#hsin)"><g filter="url(#fb)"><rect x="1366" y="162" width="14" height="14" fill="#00ff00"/><rect x="1380" y="162" width="14" height="14" fill="#05ff00"/><rect x="1394" y="162" width="14" height="14" fill="#25ff00"/><rect x="1408" y="162" width="14" height="14" fill="#48ff00"/><rect x="1422" y="162" width="14" height="14" fill="#6dff00"/><rect x="1436" y="162" width="14" height="14" fill="#95ff00"/><rect x="1450" y="162" width="14" height="14" fill="#c1ff00"/><rect x="1464" y="162" width="14" height="14" fill="#f1ff00"/><rect x="1478" y="162" width="14" height="14" fill="#ffde00"/><rect x="1492" y="162" width="14" height="14" fill="#ffba00"/><rect x="1506" y="162" width="14" height="14" fill="#ff9d00"/><rect x="1520" y="162" width="14" height="14" fill="#ff8700"/><rect x="1534" y="162" width="14" height="14" fill="#ff7400"/><rect x="1548" y="162" width="14" height="14" fill="#ff6500"/><rect x="1562" y="162" width="14" height="14" fill="#ff5700"/><rect x="1576" y="162" width="14" height="14" fill="#ff4c00"/><rect x="1590" y="162" width="14" height="14" fill="#ff4200"/><rect x="1604" y="162" width="14" height="14" fill="#ff3900"/><rect x="1618" y="162" width="14" height="14" fill="#ff3200"/><rect x="1632" y="162" width="14" height="14" fill="#ff2b00"/><rect x="1646" y="162" width="14" height="14" fill="#ff2500"/><rect x="1660" y="162" width="14" height="14" fill="#ff1f00"/><rect x="1674" y="162" width="14" height="14" fill="#ff1a00"/><rect x="1688" y="162" width="14" height="14" fill="#ff1600"/><rect x="1702" y="162" width="14" height="14" fill="#ff1200"/><rect x="1716" y="162" width="14" height="14" fill="#ff0e00"/><rect x="1730" y="162" width="14" height="14" fill="#ff0b00"/><rect x="1744" y="162" width="14" height="14" fill="#ff0700"/><rect x="1758" y="162" width="14" height="14" fill="#ff0400"/><rect x="1366" y="176" width="14" height="14" fill="#00ff03"/><rect x="1380" y="176" width="14" height="14" fill="#01ff01"/><rect x="1394" y="176" width="14" height="14" fill="#22ff00"/><rect x="1408" y="176" width="14" height="14" fill="#45ff00"/><rect x="1422" y="176" width="14" height="14" fill="#6cff00"/><rect x="1436" y="176" width="14" height="14" fill="#96ff00"/><rect x="1450" y="176" width="14" height="14" fill="#c3ff00"/><rect x="1464" y="176" width="14" height="14" fill="#f4ff00"/><rect x="1478" y="176" width="14" height="14" fill="#ffda00"/><rect x="1492" y="176" width="14" height="14" fill="#ffb500"/><rect x="1506" y="176" width="14" height="14" fill="#ff9900"/><rect x="1520" y="176" width="14" height="14" fill="#ff8300"/><rect x="1534" y="176" width="14" height="14" fill="#ff7000"/><rect x="1548" y="176" width="14" height="14" fill="#ff6100"/><rect x="1562" y="176" width="14" height="14" fill="#ff5400"/><rect x="1576" y="176" width="14" height="14" fill="#ff4800"/><rect x="1590" y="176" width="14" height="14" fill="#ff3f00"/><rect x="1604" y="176" width="14" height="14" fill="#ff3600"/><rect x="1618" y="176" width="14" height="14" fill="#ff2f00"/><rect x="1632" y="176" width="14" height="14" fill="#ff2800"/><rect x="1646" y="176" width="14" height="14" fill="#ff2200"/><rect x="1660" y="176" width="14" height="14" fill="#ff1d00"/><rect x="1674" y="176" width="14" height="14" fill="#ff1800"/><rect x="1688" y="176" width="14" height="14" fill="#ff1300"/><rect x="1702" y="176" width="14" height="14" fill="#ff0f00"/><rect x="1716" y="176" width="14" height="14" fill="#ff0c00"/><rect x="1730" y="176" width="14" height="14" fill="#ff0800"/><rect x="1744" y="176" width="14" height="14" fill="#ff0500"/><rect x="1758" y="176" width="14" height="14" fill="#ff0200"/><rect x="1366" y="190" width="14" height="14" fill="#00ff1c"/><rect x="1380" y="190" width="14" height="14" fill="#00ff1a"/><rect x="1394" y="190" width="14" height="14" fill="#1eff18"/><rect x="1408" y="190" width="14" height="14" fill="#43ff16"/><rect x="1422" y="190" width="14" height="14" fill="#6bff13"/><rect x="1436" y="190" width="14" height="14" fill="#96ff11"/><rect x="1450" y="190" width="14" height="14" fill="#c5ff0e"/><rect x="1464" y="190" width="14" height="14" fill="#f8ff0b"/><rect x="1478" y="190" width="14" height="14" fill="#ffd507"/><rect x="1492" y="190" width="14" height="14" fill="#ffb103"/><rect x="1506" y="190" width="14" height="14" fill="#ff9500"/><rect x="1520" y="190" width="14" height="14" fill="#ff7e00"/><rect x="1534" y="190" width="14" height="14" fill="#ff6c00"/><rect x="1548" y="190" width="14" height="14" fill="#ff5d00"/><rect x="1562" y="190" width="14" height="14" fill="#ff5000"/><rect x="1576" y="190" width="14" height="14" fill="#ff4500"/><rect x="1590" y="190" width="14" height="14" fill="#ff3b00"/><rect x="1604" y="190" width="14" height="14" fill="#ff3300"/><rect x="1618" y="190" width="14" height="14" fill="#ff2c00"/><rect x="1632" y="190" width="14" height="14" fill="#ff2500"/><rect x="1646" y="190" width="14" height="14" fill="#ff1f00"/><rect x="1660" y="190" width="14" height="14" fill="#ff1a00"/><rect x="1674" y="190" width="14" height="14" fill="#ff1500"/><rect x="1688" y="190" width="14" height="14" fill="#ff1100"/><rect x="1702" y="190" width="14" height="14" fill="#ff0d00"/><rect x="1716" y="190" width="14" height="14" fill="#ff0900"/><rect x="1730" y="190" width="14" height="14" fill="#ff0600"/><rect x="1744" y="190" width="14" height="14" fill="#ff0300"/><rect x="1758" y="190" width="14" height="14" fill="#ff0000"/><rect x="1366" y="204" width="14" height="14" fill="#00ff35"/><rect x="1380" y="204" width="14" height="14" fill="#00ff34"/><rect x="1394" y="204" width="14" height="14" fill="#1bff34"/><rect x="1408" y="204" width="14" height="14" fill="#40ff32"/><rect x="1422" y="204" width="14" height="14" fill="#69ff31"/><rect x="1436" y="204" width="14" height="14" fill="#96ff30"/><rect x="1450" y="204" width="14" height="14" fill="#c7ff2f"/><rect x="1464" y="204" width="14" height="14" fill="#fcff2d"/><rect x="1478" y="204" width="14" height="14" fill="#ffd124"/><rect x="1492" y="204" width="14" height="14" fill="#ffac1c"/><rect x="1506" y="204" width="14" height="14" fill="#ff9016"/><rect x="1520" y="204" width="14" height="14" fill="#ff7a12"/><rect x="1534" y="204" width="14" height="14" fill="#ff680e"/><rect x="1548" y="204" width="14" height="14" fill="#ff590b"/><rect x="1562" y="204" width="14" height="14" fill="#ff4c08"/><rect x="1576" y="204" width="14" height="14" fill="#ff4106"/><rect x="1590" y="204" width="14" height="14" fill="#ff3804"/><rect x="1604" y="204" width="14" height="14" fill="#ff3003"/><rect x="1618" y="204" width="14" height="14" fill="#ff2801"/><rect x="1632" y="204" width="14" height="14" fill="#ff2200"/><rect x="1646" y="204" width="14" height="14" fill="#ff1c00"/><rect x="1660" y="204" width="14" height="14" fill="#ff1700"/><rect x="1674" y="204" width="14" height="14" fill="#ff1200"/><rect x="1688" y="204" width="14" height="14" fill="#ff0e00"/><rect x="1702" y="204" width="14" height="14" fill="#ff0a00"/><rect x="1716" y="204" width="14" height="14" fill="#ff0700"/><rect x="1730" y="204" width="14" height="14" fill="#ff0400"/><rect x="1744" y="204" width="14" height="14" fill="#ff0100"/><rect x="1758" y="204" width="14" height="14" fill="#ff0000"/><rect x="1366" y="218" width="14" height="14" fill="#00ff51"/><rect x="1380" y="218" width="14" height="14" fill="#00ff51"/><rect x="1394" y="218" width="14" height="14" fill="#17ff51"/><rect x="1408" y="218" width="14" height="14" fill="#3dff51"/><rect x="1422" y="218" width="14" height="14" fill="#68ff51"/><rect x="1436" y="218" width="14" height="14" fill="#96ff52"/><rect x="1450" y="218" width="14" height="14" fill="#c9ff52"/><rect x="1464" y="218" width="14" height="14" fill="#fffd52"/><rect x="1478" y="218" width="14" height="14" fill="#ffcc42"/><rect x="1492" y="218" width="14" height="14" fill="#ffa836"/><rect x="1506" y="218" width="14" height="14" fill="#ff8c2d"/><rect x="1520" y="218" width="14" height="14" fill="#ff7626"/><rect x="1534" y="218" width="14" height="14" fill="#ff6421"/><rect x="1548" y="218" width="14" height="14" fill="#ff551c"/><rect x="1562" y="218" width="14" height="14" fill="#ff4818"/><rect x="1576" y="218" width="14" height="14" fill="#ff3d15"/><rect x="1590" y="218" width="14" height="14" fill="#ff3412"/><rect x="1604" y="218" width="14" height="14" fill="#ff2c0f"/><rect x="1618" y="218" width="14" height="14" fill="#ff250d"/><rect x="1632" y="218" width="14" height="14" fill="#ff1f0b"/><rect x="1646" y="218" width="14" height="14" fill="#ff1909"/><rect x="1660" y="218" width="14" height="14" fill="#ff1408"/><rect x="1674" y="218" width="14" height="14" fill="#ff1006"/><rect x="1688" y="218" width="14" height="14" fill="#ff0b05"/><rect x="1702" y="218" width="14" height="14" fill="#ff0804"/><rect x="1716" y="218" width="14" height="14" fill="#ff0403"/><rect x="1730" y="218" width="14" height="14" fill="#ff0102"/><rect x="1744" y="218" width="14" height="14" fill="#ff0001"/><rect x="1758" y="218" width="14" height="14" fill="#ff0000"/><rect x="1366" y="232" width="14" height="14" fill="#00ff6e"/><rect x="1380" y="232" width="14" height="14" fill="#00ff6f"/><rect x="1394" y="232" width="14" height="14" fill="#12ff71"/><rect x="1408" y="232" width="14" height="14" fill="#3aff72"/><rect x="1422" y="232" width="14" height="14" fill="#66ff74"/><rect x="1436" y="232" width="14" height="14" fill="#96ff76"/><rect x="1450" y="232" width="14" height="14" fill="#cbff78"/><rect x="1464" y="232" width="14" height="14" fill="#fff977"/><rect x="1478" y="232" width="14" height="14" fill="#ffc761"/><rect x="1492" y="232" width="14" height="14" fill="#ffa351"/><rect x="1506" y="232" width="14" height="14" fill="#ff8745"/><rect x="1520" y="232" width="14" height="14" fill="#ff713c"/><rect x="1534" y="232" width="14" height="14" fill="#ff5f34"/><rect x="1548" y="232" width="14" height="14" fill="#ff502d"/><rect x="1562" y="232" width="14" height="14" fill="#ff4428"/><rect x="1576" y="232" width="14" height="14" fill="#ff3a23"/><rect x="1590" y="232" width="14" height="14" fill="#ff311f"/><rect x="1604" y="232" width="14" height="14" fill="#ff291c"/><rect x="1618" y="232" width="14" height="14" fill="#ff2219"/><rect x="1632" y="232" width="14" height="14" fill="#ff1c16"/><rect x="1646" y="232" width="14" height="14" fill="#ff1614"/><rect x="1660" y="232" width="14" height="14" fill="#ff1112"/><rect x="1674" y="232" width="14" height="14" fill="#ff0d10"/><rect x="1688" y="232" width="14" height="14" fill="#ff090e"/><rect x="1702" y="232" width="14" height="14" fill="#ff050c"/><rect x="1716" y="232" width="14" height="14" fill="#ff020b"/><rect x="1730" y="232" width="14" height="14" fill="#ff000a"/><rect x="1744" y="232" width="14" height="14" fill="#ff0008"/><rect x="1758" y="232" width="14" height="14" fill="#ff0007"/><rect x="1366" y="246" width="14" height="14" fill="#00ff8d"/><rect x="1380" y="246" width="14" height="14" fill="#00ff90"/><rect x="1394" y="246" width="14" height="14" fill="#0eff93"/><rect x="1408" y="246" width="14" height="14" fill="#37ff96"/><rect x="1422" y="246" width="14" height="14" fill="#64ff99"/><rect x="1436" y="246" width="14" height="14" fill="#96ff9d"/><rect x="1450" y="246" width="14" height="14" fill="#cdffa1"/><rect x="1464" y="246" width="14" height="14" fill="#fff49f"/><rect x="1478" y="246" width="14" height="14" fill="#ffc282"/><rect x="1492" y="246" width="14" height="14" fill="#ff9e6e"/><rect x="1506" y="246" width="14" height="14" fill="#ff825e"/><rect x="1520" y="246" width="14" height="14" fill="#ff6c51"/><rect x="1534" y="246" width="14" height="14" fill="#ff5b47"/><rect x="1548" y="246" width="14" height="14" fill="#ff4c3f"/><rect x="1562" y="246" width="14" height="14" fill="#ff4038"/><rect x="1576" y="246" width="14" height="14" fill="#ff3632"/><rect x="1590" y="246" width="14" height="14" fill="#ff2d2d"/><rect x="1604" y="246" width="14" height="14" fill="#ff2529"/><rect x="1618" y="246" width="14" height="14" fill="#ff1e25"/><rect x="1632" y="246" width="14" height="14" fill="#ff1822"/><rect x="1646" y="246" width="14" height="14" fill="#ff131f"/><rect x="1660" y="246" width="14" height="14" fill="#ff0e1c"/><rect x="1674" y="246" width="14" height="14" fill="#ff0a19"/><rect x="1688" y="246" width="14" height="14" fill="#ff0617"/><rect x="1702" y="246" width="14" height="14" fill="#ff0215"/><rect x="1716" y="246" width="14" height="14" fill="#ff0013"/><rect x="1730" y="246" width="14" height="14" fill="#ff0012"/><rect x="1744" y="246" width="14" height="14" fill="#ff0010"/><rect x="1758" y="246" width="14" height="14" fill="#ff000f"/><rect x="1366" y="260" width="14" height="14" fill="#00ffae"/><rect x="1380" y="260" width="14" height="14" fill="#00ffb2"/><rect x="1394" y="260" width="14" height="14" fill="#09ffb7"/><rect x="1408" y="260" width="14" height="14" fill="#34ffbc"/><rect x="1422" y="260" width="14" height="14" fill="#63ffc1"/><rect x="1436" y="260" width="14" height="14" fill="#96ffc8"/><rect x="1450" y="260" width="14" height="14" fill="#d0ffce"/><rect x="1464" y="260" width="14" height="14" fill="#ffefc8"/><rect x="1478" y="260" width="14" height="14" fill="#ffbca5"/><rect x="1492" y="260" width="14" height="14" fill="#ff988b"/><rect x="1506" y="260" width="14" height="14" fill="#ff7d77"/><rect x="1520" y="260" width="14" height="14" fill="#ff6768"/><rect x="1534" y="260" width="14" height="14" fill="#ff565c"/><rect x="1548" y="260" width="14" height="14" fill="#ff4851"/><rect x="1562" y="260" width="14" height="14" fill="#ff3c49"/><rect x="1576" y="260" width="14" height="14" fill="#ff3242"/><rect x="1590" y="260" width="14" height="14" fill="#ff293c"/><rect x="1604" y="260" width="14" height="14" fill="#ff2236"/><rect x="1618" y="260" width="14" height="14" fill="#ff1b31"/><rect x="1632" y="260" width="14" height="14" fill="#ff152d"/><rect x="1646" y="260" width="14" height="14" fill="#ff102a"/><rect x="1660" y="260" width="14" height="14" fill="#ff0b26"/><rect x="1674" y="260" width="14" height="14" fill="#ff0723"/><rect x="1688" y="260" width="14" height="14" fill="#ff0321"/><rect x="1702" y="260" width="14" height="14" fill="#ff001e"/><rect x="1716" y="260" width="14" height="14" fill="#ff001c"/><rect x="1730" y="260" width="14" height="14" fill="#ff001a"/><rect x="1744" y="260" width="14" height="14" fill="#ff0018"/><rect x="1758" y="260" width="14" height="14" fill="#ff0016"/><rect x="1366" y="274" width="14" height="14" fill="#00ffd1"/><rect x="1380" y="274" width="14" height="14" fill="#00ffd7"/><rect x="1394" y="274" width="14" height="14" fill="#04ffde"/><rect x="1408" y="274" width="14" height="14" fill="#30ffe5"/><rect x="1422" y="274" width="14" height="14" fill="#61ffed"/><rect x="1436" y="274" width="14" height="14" fill="#97fff6"/><rect x="1450" y="274" width="14" height="14" fill="#d2feff"/><rect x="1464" y="274" width="14" height="14" fill="#ffe9f4"/><rect x="1478" y="274" width="14" height="14" fill="#ffb7c8"/><rect x="1492" y="274" width="14" height="14" fill="#ff93a9"/><rect x="1506" y="274" width="14" height="14" fill="#ff7791"/><rect x="1520" y="274" width="14" height="14" fill="#ff627f"/><rect x="1534" y="274" width="14" height="14" fill="#ff5170"/><rect x="1548" y="274" width="14" height="14" fill="#ff4364"/><rect x="1562" y="274" width="14" height="14" fill="#ff385a"/><rect x="1576" y="274" width="14" height="14" fill="#ff2e51"/><rect x="1590" y="274" width="14" height="14" fill="#ff254a"/><rect x="1604" y="274" width="14" height="14" fill="#ff1e44"/><rect x="1618" y="274" width="14" height="14" fill="#ff173e"/><rect x="1632" y="274" width="14" height="14" fill="#ff1239"/><rect x="1646" y="274" width="14" height="14" fill="#ff0d35"/><rect x="1660" y="274" width="14" height="14" fill="#ff0831"/><rect x="1674" y="274" width="14" height="14" fill="#ff042d"/><rect x="1688" y="274" width="14" height="14" fill="#ff002a"/><rect x="1702" y="274" width="14" height="14" fill="#ff0027"/><rect x="1716" y="274" width="14" height="14" fill="#ff0025"/><rect x="1730" y="274" width="14" height="14" fill="#ff0022"/><rect x="1744" y="274" width="14" height="14" fill="#ff0020"/><rect x="1758" y="274" width="14" height="14" fill="#ff001e"/><rect x="1366" y="288" width="14" height="14" fill="#00fff7"/><rect x="1380" y="288" width="14" height="14" fill="#00ffff"/><rect x="1394" y="288" width="14" height="14" fill="#00f6ff"/><rect x="1408" y="288" width="14" height="14" fill="#29edff"/><rect x="1422" y="288" width="14" height="14" fill="#55e4ff"/><rect x="1436" y="288" width="14" height="14" fill="#82dbff"/><rect x="1450" y="288" width="14" height="14" fill="#b0d2ff"/><rect x="1464" y="288" width="14" height="14" fill="#e0c8ff"/><rect x="1478" y="288" width="14" height="14" fill="#ffb1ee"/><rect x="1492" y="288" width="14" height="14" fill="#ff8dc8"/><rect x="1506" y="288" width="14" height="14" fill="#ff72ac"/><rect x="1520" y="288" width="14" height="14" fill="#ff5d97"/><rect x="1534" y="288" width="14" height="14" fill="#ff4c85"/><rect x="1548" y="288" width="14" height="14" fill="#ff3f77"/><rect x="1562" y="288" width="14" height="14" fill="#ff336b"/><rect x="1576" y="288" width="14" height="14" fill="#ff2a61"/><rect x="1590" y="288" width="14" height="14" fill="#ff2159"/><rect x="1604" y="288" width="14" height="14" fill="#ff1a51"/><rect x="1618" y="288" width="14" height="14" fill="#ff144b"/><rect x="1632" y="288" width="14" height="14" fill="#ff0e45"/><rect x="1646" y="288" width="14" height="14" fill="#ff0a40"/><rect x="1660" y="288" width="14" height="14" fill="#ff053b"/><rect x="1674" y="288" width="14" height="14" fill="#ff0137"/><rect x="1688" y="288" width="14" height="14" fill="#ff0034"/><rect x="1702" y="288" width="14" height="14" fill="#ff0030"/><rect x="1716" y="288" width="14" height="14" fill="#ff002d"/><rect x="1730" y="288" width="14" height="14" fill="#ff002a"/><rect x="1744" y="288" width="14" height="14" fill="#ff0028"/><rect x="1758" y="288" width="14" height="14" fill="#ff0025"/><rect x="1366" y="302" width="14" height="14" fill="#00e2ff"/><rect x="1380" y="302" width="14" height="14" fill="#00daff"/><rect x="1394" y="302" width="14" height="14" fill="#00d2ff"/><rect x="1408" y="302" width="14" height="14" fill="#1fcaff"/><rect x="1422" y="302" width="14" height="14" fill="#46c1ff"/><rect x="1436" y="302" width="14" height="14" fill="#6db9ff"/><rect x="1450" y="302" width="14" height="14" fill="#96b0ff"/><rect x="1464" y="302" width="14" height="14" fill="#c0a7ff"/><rect x="1478" y="302" width="14" height="14" fill="#eb9dff"/><rect x="1492" y="302" width="14" height="14" fill="#ff87e9"/><rect x="1506" y="302" width="14" height="14" fill="#ff6cc8"/><rect x="1520" y="302" width="14" height="14" fill="#ff58af"/><rect x="1534" y="302" width="14" height="14" fill="#ff479b"/><rect x="1548" y="302" width="14" height="14" fill="#ff3a8b"/><rect x="1562" y="302" width="14" height="14" fill="#ff2f7d"/><rect x="1576" y="302" width="14" height="14" fill="#ff2572"/><rect x="1590" y="302" width="14" height="14" fill="#ff1d68"/><rect x="1604" y="302" width="14" height="14" fill="#ff165f"/><rect x="1618" y="302" width="14" height="14" fill="#ff1058"/><rect x="1632" y="302" width="14" height="14" fill="#ff0b51"/><rect x="1646" y="302" width="14" height="14" fill="#ff064c"/><rect x="1660" y="302" width="14" height="14" fill="#ff0246"/><rect x="1674" y="302" width="14" height="14" fill="#ff0042"/><rect x="1688" y="302" width="14" height="14" fill="#ff003d"/><rect x="1702" y="302" width="14" height="14" fill="#ff003a"/><rect x="1716" y="302" width="14" height="14" fill="#ff0036"/><rect x="1730" y="302" width="14" height="14" fill="#ff0033"/><rect x="1744" y="302" width="14" height="14" fill="#ff0030"/><rect x="1758" y="302" width="14" height="14" fill="#ff002d"/><rect x="1366" y="316" width="14" height="14" fill="#00c4ff"/><rect x="1380" y="316" width="14" height="14" fill="#00bcff"/><rect x="1394" y="316" width="14" height="14" fill="#00b5ff"/><rect x="1408" y="316" width="14" height="14" fill="#17adff"/><rect x="1422" y="316" width="14" height="14" fill="#3aa5ff"/><rect x="1436" y="316" width="14" height="14" fill="#5d9dff"/><rect x="1450" y="316" width="14" height="14" fill="#8295ff"/><rect x="1464" y="316" width="14" height="14" fill="#a78dff"/><rect x="1478" y="316" width="14" height="14" fill="#cd84ff"/><rect x="1492" y="316" width="14" height="14" fill="#f47bff"/><rect x="1506" y="316" width="14" height="14" fill="#ff66e5"/><rect x="1520" y="316" width="14" height="14" fill="#ff52c8"/><rect x="1534" y="316" width="14" height="14" fill="#ff42b1"/><rect x="1548" y="316" width="14" height="14" fill="#ff359f"/><rect x="1562" y="316" width="14" height="14" fill="#ff2a8f"/><rect x="1576" y="316" width="14" height="14" fill="#ff2182"/><rect x="1590" y="316" width="14" height="14" fill="#ff1977"/><rect x="1604" y="316" width="14" height="14" fill="#ff136d"/><rect x="1618" y="316" width="14" height="14" fill="#ff0d65"/><rect x="1632" y="316" width="14" height="14" fill="#ff085e"/><rect x="1646" y="316" width="14" height="14" fill="#ff0357"/><rect x="1660" y="316" width="14" height="14" fill="#ff0051"/><rect x="1674" y="316" width="14" height="14" fill="#ff004c"/><rect x="1688" y="316" width="14" height="14" fill="#ff0047"/><rect x="1702" y="316" width="14" height="14" fill="#ff0043"/><rect x="1716" y="316" width="14" height="14" fill="#ff003f"/><rect x="1730" y="316" width="14" height="14" fill="#ff003b"/><rect x="1744" y="316" width="14" height="14" fill="#ff0038"/><rect x="1758" y="316" width="14" height="14" fill="#ff0035"/><rect x="1366" y="330" width="14" height="14" fill="#00abff"/><rect x="1380" y="330" width="14" height="14" fill="#00a4ff"/><rect x="1394" y="330" width="14" height="14" fill="#009dff"/><rect x="1408" y="330" width="14" height="14" fill="#1196ff"/><rect x="1422" y="330" width="14" height="14" fill="#308fff"/><rect x="1436" y="330" width="14" height="14" fill="#5087ff"/><rect x="1450" y="330" width="14" height="14" fill="#717fff"/><rect x="1464" y="330" width="14" height="14" fill="#9277ff"/><rect x="1478" y="330" width="14" height="14" fill="#b46fff"/><rect x="1492" y="330" width="14" height="14" fill="#d767ff"/><rect x="1506" y="330" width="14" height="14" fill="#fb5fff"/><rect x="1520" y="330" width="14" height="14" fill="#ff4de2"/><rect x="1534" y="330" width="14" height="14" fill="#ff3dc8"/><rect x="1548" y="330" width="14" height="14" fill="#ff30b3"/><rect x="1562" y="330" width="14" height="14" fill="#ff26a2"/><rect x="1576" y="330" width="14" height="14" fill="#ff1d93"/><rect x="1590" y="330" width="14" height="14" fill="#ff1587"/><rect x="1604" y="330" width="14" height="14" fill="#ff0f7c"/><rect x="1618" y="330" width="14" height="14" fill="#ff0973"/><rect x="1632" y="330" width="14" height="14" fill="#ff046a"/><rect x="1646" y="330" width="14" height="14" fill="#ff0063"/><rect x="1660" y="330" width="14" height="14" fill="#ff005c"/><rect x="1674" y="330" width="14" height="14" fill="#ff0057"/><rect x="1688" y="330" width="14" height="14" fill="#ff0051"/><rect x="1702" y="330" width="14" height="14" fill="#ff004c"/><rect x="1716" y="330" width="14" height="14" fill="#ff0048"/><rect x="1730" y="330" width="14" height="14" fill="#ff0044"/><rect x="1744" y="330" width="14" height="14" fill="#ff0040"/><rect x="1758" y="330" width="14" height="14" fill="#ff003d"/><rect x="1366" y="344" width="14" height="14" fill="#0097ff"/><rect x="1380" y="344" width="14" height="14" fill="#0090ff"/><rect x="1394" y="344" width="14" height="14" fill="#0089ff"/><rect x="1408" y="344" width="14" height="14" fill="#0c83ff"/><rect x="1422" y="344" width="14" height="14" fill="#287cff"/><rect x="1436" y="344" width="14" height="14" fill="#4575ff"/><rect x="1450" y="344" width="14" height="14" fill="#636dff"/><rect x="1464" y="344" width="14" height="14" fill="#8166ff"/><rect x="1478" y="344" width="14" height="14" fill="#a05fff"/><rect x="1492" y="344" width="14" height="14" fill="#c057ff"/><rect x="1506" y="344" width="14" height="14" fill="#e04fff"/><rect x="1520" y="344" width="14" height="14" fill="#ff47fd"/><rect x="1534" y="344" width="14" height="14" fill="#ff37e0"/><rect x="1548" y="344" width="14" height="14" fill="#ff2bc8"/><rect x="1562" y="344" width="14" height="14" fill="#ff21b5"/><rect x="1576" y="344" width="14" height="14" fill="#ff18a5"/><rect x="1590" y="344" width="14" height="14" fill="#ff1197"/><rect x="1604" y="344" width="14" height="14" fill="#ff0b8b"/><rect x="1618" y="344" width="14" height="14" fill="#ff0580"/><rect x="1632" y="344" width="14" height="14" fill="#ff0077"/><rect x="1646" y="344" width="14" height="14" fill="#ff006f"/><rect x="1660" y="344" width="14" height="14" fill="#ff0068"/><rect x="1674" y="344" width="14" height="14" fill="#ff0061"/><rect x="1688" y="344" width="14" height="14" fill="#ff005b"/><rect x="1702" y="344" width="14" height="14" fill="#ff0056"/><rect x="1716" y="344" width="14" height="14" fill="#ff0051"/><rect x="1730" y="344" width="14" height="14" fill="#ff004d"/><rect x="1744" y="344" width="14" height="14" fill="#ff0049"/><rect x="1758" y="344" width="14" height="14" fill="#ff0045"/><rect x="1366" y="358" width="14" height="14" fill="#0085ff"/><rect x="1380" y="358" width="14" height="14" fill="#007fff"/><rect x="1394" y="358" width="14" height="14" fill="#0079ff"/><rect x="1408" y="358" width="14" height="14" fill="#0772ff"/><rect x="1422" y="358" width="14" height="14" fill="#226cff"/><rect x="1436" y="358" width="14" height="14" fill="#3c65ff"/><rect x="1450" y="358" width="14" height="14" fill="#585eff"/><rect x="1464" y="358" width="14" height="14" fill="#7358ff"/><rect x="1478" y="358" width="14" height="14" fill="#9051ff"/><rect x="1492" y="358" width="14" height="14" fill="#ac49ff"/><rect x="1506" y="358" width="14" height="14" fill="#ca42ff"/><rect x="1520" y="358" width="14" height="14" fill="#e73bff"/><rect x="1534" y="358" width="14" height="14" fill="#ff32f8"/><rect x="1548" y="358" width="14" height="14" fill="#ff26de"/><rect x="1562" y="358" width="14" height="14" fill="#ff1cc8"/><rect x="1576" y="358" width="14" height="14" fill="#ff14b6"/><rect x="1590" y="358" width="14" height="14" fill="#ff0da7"/><rect x="1604" y="358" width="14" height="14" fill="#ff079a"/><rect x="1618" y="358" width="14" height="14" fill="#ff018e"/><rect x="1632" y="358" width="14" height="14" fill="#ff0084"/><rect x="1646" y="358" width="14" height="14" fill="#ff007b"/><rect x="1660" y="358" width="14" height="14" fill="#ff0073"/><rect x="1674" y="358" width="14" height="14" fill="#ff006c"/><rect x="1688" y="358" width="14" height="14" fill="#ff0066"/><rect x="1702" y="358" width="14" height="14" fill="#ff0060"/><rect x="1716" y="358" width="14" height="14" fill="#ff005b"/><rect x="1730" y="358" width="14" height="14" fill="#ff0056"/><rect x="1744" y="358" width="14" height="14" fill="#ff0051"/><rect x="1758" y="358" width="14" height="14" fill="#ff004d"/><rect x="1366" y="372" width="14" height="14" fill="#0076ff"/><rect x="1380" y="372" width="14" height="14" fill="#0070ff"/><rect x="1394" y="372" width="14" height="14" fill="#006bff"/><rect x="1408" y="372" width="14" height="14" fill="#0464ff"/><rect x="1422" y="372" width="14" height="14" fill="#1c5eff"/><rect x="1436" y="372" width="14" height="14" fill="#3558ff"/><rect x="1450" y="372" width="14" height="14" fill="#4e52ff"/><rect x="1464" y="372" width="14" height="14" fill="#674bff"/><rect x="1478" y="372" width="14" height="14" fill="#8145ff"/><rect x="1492" y="372" width="14" height="14" fill="#9c3eff"/><rect x="1506" y="372" width="14" height="14" fill="#b737ff"/><rect x="1520" y="372" width="14" height="14" fill="#d230ff"/><rect x="1534" y="372" width="14" height="14" fill="#ee29ff"/><rect x="1548" y="372" width="14" height="14" fill="#ff20f4"/><rect x="1562" y="372" width="14" height="14" fill="#ff17dc"/><rect x="1576" y="372" width="14" height="14" fill="#ff0fc8"/><rect x="1590" y="372" width="14" height="14" fill="#ff08b8"/><rect x="1604" y="372" width="14" height="14" fill="#ff02a9"/><rect x="1618" y="372" width="14" height="14" fill="#ff009c"/><rect x="1632" y="372" width="14" height="14" fill="#ff0091"/><rect x="1646" y="372" width="14" height="14" fill="#ff0088"/><rect x="1660" y="372" width="14" height="14" fill="#ff007f"/><rect x="1674" y="372" width="14" height="14" fill="#ff0077"/><rect x="1688" y="372" width="14" height="14" fill="#ff0070"/><rect x="1702" y="372" width="14" height="14" fill="#ff006a"/><rect x="1716" y="372" width="14" height="14" fill="#ff0064"/><rect x="1730" y="372" width="14" height="14" fill="#ff005f"/><rect x="1744" y="372" width="14" height="14" fill="#ff005a"/><rect x="1758" y="372" width="14" height="14" fill="#ff0055"/><rect x="1366" y="386" width="14" height="14" fill="#0069ff"/><rect x="1380" y="386" width="14" height="14" fill="#0064ff"/><rect x="1394" y="386" width="14" height="14" fill="#005eff"/><rect x="1408" y="386" width="14" height="14" fill="#0058ff"/><rect x="1422" y="386" width="14" height="14" fill="#1753ff"/><rect x="1436" y="386" width="14" height="14" fill="#2e4dff"/><rect x="1450" y="386" width="14" height="14" fill="#4547ff"/><rect x="1464" y="386" width="14" height="14" fill="#5d41ff"/><rect x="1478" y="386" width="14" height="14" fill="#753aff"/><rect x="1492" y="386" width="14" height="14" fill="#8e34ff"/><rect x="1506" y="386" width="14" height="14" fill="#a62eff"/><rect x="1520" y="386" width="14" height="14" fill="#c027ff"/><rect x="1534" y="386" width="14" height="14" fill="#d920ff"/><rect x="1548" y="386" width="14" height="14" fill="#f31aff"/><rect x="1562" y="386" width="14" height="14" fill="#ff12f1"/><rect x="1576" y="386" width="14" height="14" fill="#ff0adb"/><rect x="1590" y="386" width="14" height="14" fill="#ff04c8"/><rect x="1604" y="386" width="14" height="14" fill="#ff00b9"/><rect x="1618" y="386" width="14" height="14" fill="#ff00ab"/><rect x="1632" y="386" width="14" height="14" fill="#ff009f"/><rect x="1646" y="386" width="14" height="14" fill="#ff0094"/><rect x="1660" y="386" width="14" height="14" fill="#ff008b"/><rect x="1674" y="386" width="14" height="14" fill="#ff0082"/><rect x="1688" y="386" width="14" height="14" fill="#ff007b"/><rect x="1702" y="386" width="14" height="14" fill="#ff0074"/><rect x="1716" y="386" width="14" height="14" fill="#ff006d"/><rect x="1730" y="386" width="14" height="14" fill="#ff0068"/><rect x="1744" y="386" width="14" height="14" fill="#ff0062"/><rect x="1758" y="386" width="14" height="14" fill="#ff005e"/><rect x="1366" y="400" width="14" height="14" fill="#005eff"/><rect x="1380" y="400" width="14" height="14" fill="#0059ff"/><rect x="1394" y="400" width="14" height="14" fill="#0053ff"/><rect x="1408" y="400" width="14" height="14" fill="#004eff"/><rect x="1422" y="400" width="14" height="14" fill="#1348ff"/><rect x="1436" y="400" width="14" height="14" fill="#2843ff"/><rect x="1450" y="400" width="14" height="14" fill="#3e3dff"/><rect x="1464" y="400" width="14" height="14" fill="#5437ff"/><rect x="1478" y="400" width="14" height="14" fill="#6b31ff"/><rect x="1492" y="400" width="14" height="14" fill="#812bff"/><rect x="1506" y="400" width="14" height="14" fill="#9825ff"/><rect x="1520" y="400" width="14" height="14" fill="#b01fff"/><rect x="1534" y="400" width="14" height="14" fill="#c819ff"/><rect x="1548" y="400" width="14" height="14" fill="#e013ff"/><rect x="1562" y="400" width="14" height="14" fill="#f80cff"/><rect x="1576" y="400" width="14" height="14" fill="#ff05ee"/><rect x="1590" y="400" width="14" height="14" fill="#ff00da"/><rect x="1604" y="400" width="14" height="14" fill="#ff00c8"/><rect x="1618" y="400" width="14" height="14" fill="#ff00ba"/><rect x="1632" y="400" width="14" height="14" fill="#ff00ac"/><rect x="1646" y="400" width="14" height="14" fill="#ff00a1"/><rect x="1660" y="400" width="14" height="14" fill="#ff0097"/><rect x="1674" y="400" width="14" height="14" fill="#ff008e"/><rect x="1688" y="400" width="14" height="14" fill="#ff0085"/><rect x="1702" y="400" width="14" height="14" fill="#ff007e"/><rect x="1716" y="400" width="14" height="14" fill="#ff0077"/><rect x="1730" y="400" width="14" height="14" fill="#ff0071"/><rect x="1744" y="400" width="14" height="14" fill="#ff006b"/><rect x="1758" y="400" width="14" height="14" fill="#ff0066"/><rect x="1366" y="414" width="14" height="14" fill="#0054ff"/><rect x="1380" y="414" width="14" height="14" fill="#004fff"/><rect x="1394" y="414" width="14" height="14" fill="#004aff"/><rect x="1408" y="414" width="14" height="14" fill="#0045ff"/><rect x="1422" y="414" width="14" height="14" fill="#0f3fff"/><rect x="1436" y="414" width="14" height="14" fill="#233aff"/><rect x="1450" y="414" width="14" height="14" fill="#3835ff"/><rect x="1464" y="414" width="14" height="14" fill="#4c2fff"/><rect x="1478" y="414" width="14" height="14" fill="#612aff"/><rect x="1492" y="414" width="14" height="14" fill="#7624ff"/><rect x="1506" y="414" width="14" height="14" fill="#8c1eff"/><rect x="1520" y="414" width="14" height="14" fill="#a218ff"/><rect x="1534" y="414" width="14" height="14" fill="#b812ff"/><rect x="1548" y="414" width="14" height="14" fill="#cf0dff"/><rect x="1562" y="414" width="14" height="14" fill="#e606ff"/><rect x="1576" y="414" width="14" height="14" fill="#fd00ff"/><rect x="1590" y="414" width="14" height="14" fill="#ff00eb"/><rect x="1604" y="414" width="14" height="14" fill="#ff00d9"/><rect x="1618" y="414" width="14" height="14" fill="#ff00c8"/><rect x="1632" y="414" width="14" height="14" fill="#ff00ba"/><rect x="1646" y="414" width="14" height="14" fill="#ff00ae"/><rect x="1660" y="414" width="14" height="14" fill="#ff00a3"/><rect x="1674" y="414" width="14" height="14" fill="#ff0099"/><rect x="1688" y="414" width="14" height="14" fill="#ff0090"/><rect x="1702" y="414" width="14" height="14" fill="#ff0088"/><rect x="1716" y="414" width="14" height="14" fill="#ff0081"/><rect x="1730" y="414" width="14" height="14" fill="#ff007a"/><rect x="1744" y="414" width="14" height="14" fill="#ff0074"/><rect x="1758" y="414" width="14" height="14" fill="#ff006f"/><rect x="1366" y="428" width="14" height="14" fill="#004bff"/><rect x="1380" y="428" width="14" height="14" fill="#0046ff"/><rect x="1394" y="428" width="14" height="14" fill="#0041ff"/><rect x="1408" y="428" width="14" height="14" fill="#003cff"/><rect x="1422" y="428" width="14" height="14" fill="#0c37ff"/><rect x="1436" y="428" width="14" height="14" fill="#1f32ff"/><rect x="1450" y="428" width="14" height="14" fill="#322dff"/><rect x="1464" y="428" width="14" height="14" fill="#4528ff"/><rect x="1478" y="428" width="14" height="14" fill="#5923ff"/><rect x="1492" y="428" width="14" height="14" fill="#6d1dff"/><rect x="1506" y="428" width="14" height="14" fill="#8118ff"/><rect x="1520" y="428" width="14" height="14" fill="#9612ff"/><rect x="1534" y="428" width="14" height="14" fill="#ab0dff"/><rect x="1548" y="428" width="14" height="14" fill="#c007ff"/><rect x="1562" y="428" width="14" height="14" fill="#d501ff"/><rect x="1576" y="428" width="14" height="14" fill="#eb00ff"/><rect x="1590" y="428" width="14" height="14" fill="#ff00fd"/><rect x="1604" y="428" width="14" height="14" fill="#ff00e9"/><rect x="1618" y="428" width="14" height="14" fill="#ff00d8"/><rect x="1632" y="428" width="14" height="14" fill="#ff00c8"/><rect x="1646" y="428" width="14" height="14" fill="#ff00bb"/><rect x="1660" y="428" width="14" height="14" fill="#ff00af"/><rect x="1674" y="428" width="14" height="14" fill="#ff00a5"/><rect x="1688" y="428" width="14" height="14" fill="#ff009b"/><rect x="1702" y="428" width="14" height="14" fill="#ff0092"/><rect x="1716" y="428" width="14" height="14" fill="#ff008b"/><rect x="1730" y="428" width="14" height="14" fill="#ff0084"/><rect x="1744" y="428" width="14" height="14" fill="#ff007d"/><rect x="1758" y="428" width="14" height="14" fill="#ff0077"/><rect x="1366" y="442" width="14" height="14" fill="#0043ff"/><rect x="1380" y="442" width="14" height="14" fill="#003fff"/><rect x="1394" y="442" width="14" height="14" fill="#003aff"/><rect x="1408" y="442" width="14" height="14" fill="#0035ff"/><rect x="1422" y="442" width="14" height="14" fill="#0930ff"/><rect x="1436" y="442" width="14" height="14" fill="#1b2bff"/><rect x="1450" y="442" width="14" height="14" fill="#2d27ff"/><rect x="1464" y="442" width="14" height="14" fill="#3f22ff"/><rect x="1478" y="442" width="14" height="14" fill="#521cff"/><rect x="1492" y="442" width="14" height="14" fill="#6517ff"/><rect x="1506" y="442" width="14" height="14" fill="#7812ff"/><rect x="1520" y="442" width="14" height="14" fill="#8b0dff"/><rect x="1534" y="442" width="14" height="14" fill="#9e08ff"/><rect x="1548" y="442" width="14" height="14" fill="#b202ff"/><rect x="1562" y="442" width="14" height="14" fill="#c600ff"/><rect x="1576" y="442" width="14" height="14" fill="#db00ff"/><rect x="1590" y="442" width="14" height="14" fill="#ef00ff"/><rect x="1604" y="442" width="14" height="14" fill="#ff00fa"/><rect x="1618" y="442" width="14" height="14" fill="#ff00e7"/><rect x="1632" y="442" width="14" height="14" fill="#ff00d7"/><rect x="1646" y="442" width="14" height="14" fill="#ff00c8"/><rect x="1660" y="442" width="14" height="14" fill="#ff00bc"/><rect x="1674" y="442" width="14" height="14" fill="#ff00b0"/><rect x="1688" y="442" width="14" height="14" fill="#ff00a6"/><rect x="1702" y="442" width="14" height="14" fill="#ff009d"/><rect x="1716" y="442" width="14" height="14" fill="#ff0095"/><rect x="1730" y="442" width="14" height="14" fill="#ff008d"/><rect x="1744" y="442" width="14" height="14" fill="#ff0086"/><rect x="1758" y="442" width="14" height="14" fill="#ff0080"/><rect x="1366" y="456" width="14" height="14" fill="#003cff"/><rect x="1380" y="456" width="14" height="14" fill="#0038ff"/><rect x="1394" y="456" width="14" height="14" fill="#0033ff"/><rect x="1408" y="456" width="14" height="14" fill="#002fff"/><rect x="1422" y="456" width="14" height="14" fill="#062aff"/><rect x="1436" y="456" width="14" height="14" fill="#1725ff"/><rect x="1450" y="456" width="14" height="14" fill="#2821ff"/><rect x="1464" y="456" width="14" height="14" fill="#3a1cff"/><rect x="1478" y="456" width="14" height="14" fill="#4b17ff"/><rect x="1492" y="456" width="14" height="14" fill="#5d12ff"/><rect x="1506" y="456" width="14" height="14" fill="#6f0dff"/><rect x="1520" y="456" width="14" height="14" fill="#8108ff"/><rect x="1534" y="456" width="14" height="14" fill="#9403ff"/><rect x="1548" y="456" width="14" height="14" fill="#a600ff"/><rect x="1562" y="456" width="14" height="14" fill="#b900ff"/><rect x="1576" y="456" width="14" height="14" fill="#cc00ff"/><rect x="1590" y="456" width="14" height="14" fill="#e000ff"/><rect x="1604" y="456" width="14" height="14" fill="#f300ff"/><rect x="1618" y="456" width="14" height="14" fill="#ff00f7"/><rect x="1632" y="456" width="14" height="14" fill="#ff00e5"/><rect x="1646" y="456" width="14" height="14" fill="#ff00d6"/><rect x="1660" y="456" width="14" height="14" fill="#ff00c8"/><rect x="1674" y="456" width="14" height="14" fill="#ff00bc"/><rect x="1688" y="456" width="14" height="14" fill="#ff00b1"/><rect x="1702" y="456" width="14" height="14" fill="#ff00a8"/><rect x="1716" y="456" width="14" height="14" fill="#ff009f"/><rect x="1730" y="456" width="14" height="14" fill="#ff0097"/><rect x="1744" y="456" width="14" height="14" fill="#ff008f"/><rect x="1758" y="456" width="14" height="14" fill="#ff0088"/><rect x="1366" y="470" width="14" height="14" fill="#0035ff"/><rect x="1380" y="470" width="14" height="14" fill="#0031ff"/><rect x="1394" y="470" width="14" height="14" fill="#002dff"/><rect x="1408" y="470" width="14" height="14" fill="#0029ff"/><rect x="1422" y="470" width="14" height="14" fill="#0424ff"/><rect x="1436" y="470" width="14" height="14" fill="#1420ff"/><rect x="1450" y="470" width="14" height="14" fill="#241bff"/><rect x="1464" y="470" width="14" height="14" fill="#3517ff"/><rect x="1478" y="470" width="14" height="14" fill="#4512ff"/><rect x="1492" y="470" width="14" height="14" fill="#560dff"/><rect x="1506" y="470" width="14" height="14" fill="#6709ff"/><rect x="1520" y="470" width="14" height="14" fill="#7804ff"/><rect x="1534" y="470" width="14" height="14" fill="#8a00ff"/><rect x="1548" y="470" width="14" height="14" fill="#9c00ff"/><rect x="1562" y="470" width="14" height="14" fill="#ad00ff"/><rect x="1576" y="470" width="14" height="14" fill="#c000ff"/><rect x="1590" y="470" width="14" height="14" fill="#d200ff"/><rect x="1604" y="470" width="14" height="14" fill="#e400ff"/><rect x="1618" y="470" width="14" height="14" fill="#f700ff"/><rect x="1632" y="470" width="14" height="14" fill="#ff00f4"/><rect x="1646" y="470" width="14" height="14" fill="#ff00e4"/><rect x="1660" y="470" width="14" height="14" fill="#ff00d5"/><rect x="1674" y="470" width="14" height="14" fill="#ff00c8"/><rect x="1688" y="470" width="14" height="14" fill="#ff00bd"/><rect x="1702" y="470" width="14" height="14" fill="#ff00b2"/><rect x="1716" y="470" width="14" height="14" fill="#ff00a9"/><rect x="1730" y="470" width="14" height="14" fill="#ff00a0"/><rect x="1744" y="470" width="14" height="14" fill="#ff0099"/><rect x="1758" y="470" width="14" height="14" fill="#ff0091"/><rect x="1366" y="484" width="14" height="14" fill="#0030ff"/><rect x="1380" y="484" width="14" height="14" fill="#002bff"/><rect x="1394" y="484" width="14" height="14" fill="#0027ff"/><rect x="1408" y="484" width="14" height="14" fill="#0023ff"/><rect x="1422" y="484" width="14" height="14" fill="#011fff"/><rect x="1436" y="484" width="14" height="14" fill="#111bff"/><rect x="1450" y="484" width="14" height="14" fill="#2016ff"/><rect x="1464" y="484" width="14" height="14" fill="#3012ff"/><rect x="1478" y="484" width="14" height="14" fill="#400eff"/><rect x="1492" y="484" width="14" height="14" fill="#5009ff"/><rect x="1506" y="484" width="14" height="14" fill="#6005ff"/><rect x="1520" y="484" width="14" height="14" fill="#7100ff"/><rect x="1534" y="484" width="14" height="14" fill="#8100ff"/><rect x="1548" y="484" width="14" height="14" fill="#9200ff"/><rect x="1562" y="484" width="14" height="14" fill="#a300ff"/><rect x="1576" y="484" width="14" height="14" fill="#b400ff"/><rect x="1590" y="484" width="14" height="14" fill="#c500ff"/><rect x="1604" y="484" width="14" height="14" fill="#d700ff"/><rect x="1618" y="484" width="14" height="14" fill="#e900ff"/><rect x="1632" y="484" width="14" height="14" fill="#fb00ff"/><rect x="1646" y="484" width="14" height="14" fill="#ff00f2"/><rect x="1660" y="484" width="14" height="14" fill="#ff00e3"/><rect x="1674" y="484" width="14" height="14" fill="#ff00d5"/><rect x="1688" y="484" width="14" height="14" fill="#ff00c8"/><rect x="1702" y="484" width="14" height="14" fill="#ff00bd"/><rect x="1716" y="484" width="14" height="14" fill="#ff00b3"/><rect x="1730" y="484" width="14" height="14" fill="#ff00aa"/><rect x="1744" y="484" width="14" height="14" fill="#ff00a2"/><rect x="1758" y="484" width="14" height="14" fill="#ff009a"/><rect x="1366" y="498" width="14" height="14" fill="#002aff"/><rect x="1380" y="498" width="14" height="14" fill="#0026ff"/><rect x="1394" y="498" width="14" height="14" fill="#0022ff"/><rect x="1408" y="498" width="14" height="14" fill="#001eff"/><rect x="1422" y="498" width="14" height="14" fill="#001aff"/><rect x="1436" y="498" width="14" height="14" fill="#0e16ff"/><rect x="1450" y="498" width="14" height="14" fill="#1d12ff"/><rect x="1464" y="498" width="14" height="14" fill="#2c0eff"/><rect x="1478" y="498" width="14" height="14" fill="#3b09ff"/><rect x="1492" y="498" width="14" height="14" fill="#4a05ff"/><rect x="1506" y="498" width="14" height="14" fill="#5a01ff"/><rect x="1520" y="498" width="14" height="14" fill="#6900ff"/><rect x="1534" y="498" width="14" height="14" fill="#7900ff"/><rect x="1548" y="498" width="14" height="14" fill="#8900ff"/><rect x="1562" y="498" width="14" height="14" fill="#9900ff"/><rect x="1576" y="498" width="14" height="14" fill="#aa00ff"/><rect x="1590" y="498" width="14" height="14" fill="#ba00ff"/><rect x="1604" y="498" width="14" height="14" fill="#cb00ff"/><rect x="1618" y="498" width="14" height="14" fill="#db00ff"/><rect x="1632" y="498" width="14" height="14" fill="#ec00ff"/><rect x="1646" y="498" width="14" height="14" fill="#fe00ff"/><rect x="1660" y="498" width="14" height="14" fill="#ff00f0"/><rect x="1674" y="498" width="14" height="14" fill="#ff00e1"/><rect x="1688" y="498" width="14" height="14" fill="#ff00d4"/><rect x="1702" y="498" width="14" height="14" fill="#ff00c8"/><rect x="1716" y="498" width="14" height="14" fill="#ff00be"/><rect x="1730" y="498" width="14" height="14" fill="#ff00b4"/><rect x="1744" y="498" width="14" height="14" fill="#ff00ab"/><rect x="1758" y="498" width="14" height="14" fill="#ff00a3"/><rect x="1366" y="512" width="14" height="14" fill="#0025ff"/><rect x="1380" y="512" width="14" height="14" fill="#0021ff"/><rect x="1394" y="512" width="14" height="14" fill="#001eff"/><rect x="1408" y="512" width="14" height="14" fill="#001aff"/><rect x="1422" y="512" width="14" height="14" fill="#0016ff"/><rect x="1436" y="512" width="14" height="14" fill="#0c12ff"/><rect x="1450" y="512" width="14" height="14" fill="#1a0eff"/><rect x="1464" y="512" width="14" height="14" fill="#280aff"/><rect x="1478" y="512" width="14" height="14" fill="#3706ff"/><rect x="1492" y="512" width="14" height="14" fill="#4502ff"/><rect x="1506" y="512" width="14" height="14" fill="#5400ff"/><rect x="1520" y="512" width="14" height="14" fill="#6300ff"/><rect x="1534" y="512" width="14" height="14" fill="#7200ff"/><rect x="1548" y="512" width="14" height="14" fill="#8100ff"/><rect x="1562" y="512" width="14" height="14" fill="#9000ff"/><rect x="1576" y="512" width="14" height="14" fill="#a000ff"/><rect x="1590" y="512" width="14" height="14" fill="#b000ff"/><rect x="1604" y="512" width="14" height="14" fill="#c000ff"/><rect x="1618" y="512" width="14" height="14" fill="#d000ff"/><rect x="1632" y="512" width="14" height="14" fill="#e000ff"/><rect x="1646" y="512" width="14" height="14" fill="#f000ff"/><rect x="1660" y="512" width="14" height="14" fill="#ff00fd"/><rect x="1674" y="512" width="14" height="14" fill="#ff00ee"/><rect x="1688" y="512" width="14" height="14" fill="#ff00e0"/><rect x="1702" y="512" width="14" height="14" fill="#ff00d4"/><rect x="1716" y="512" width="14" height="14" fill="#ff00c8"/><rect x="1730" y="512" width="14" height="14" fill="#ff00be"/><rect x="1744" y="512" width="14" height="14" fill="#ff00b5"/><rect x="1758" y="512" width="14" height="14" fill="#ff00ac"/><rect x="1366" y="526" width="14" height="14" fill="#0021ff"/><rect x="1380" y="526" width="14" height="14" fill="#001dff"/><rect x="1394" y="526" width="14" height="14" fill="#0019ff"/><rect x="1408" y="526" width="14" height="14" fill="#0016ff"/><rect x="1422" y="526" width="14" height="14" fill="#0012ff"/><rect x="1436" y="526" width="14" height="14" fill="#090eff"/><rect x="1450" y="526" width="14" height="14" fill="#170aff"/><rect x="1464" y="526" width="14" height="14" fill="#2506ff"/><rect x="1478" y="526" width="14" height="14" fill="#3202ff"/><rect x="1492" y="526" width="14" height="14" fill="#4000ff"/><rect x="1506" y="526" width="14" height="14" fill="#4f00ff"/><rect x="1520" y="526" width="14" height="14" fill="#5d00ff"/><rect x="1534" y="526" width="14" height="14" fill="#6b00ff"/><rect x="1548" y="526" width="14" height="14" fill="#7a00ff"/><rect x="1562" y="526" width="14" height="14" fill="#8800ff"/><rect x="1576" y="526" width="14" height="14" fill="#9700ff"/><rect x="1590" y="526" width="14" height="14" fill="#a600ff"/><rect x="1604" y="526" width="14" height="14" fill="#b500ff"/><rect x="1618" y="526" width="14" height="14" fill="#c500ff"/><rect x="1632" y="526" width="14" height="14" fill="#d400ff"/><rect x="1646" y="526" width="14" height="14" fill="#e400ff"/><rect x="1660" y="526" width="14" height="14" fill="#f300ff"/><rect x="1674" y="526" width="14" height="14" fill="#ff00fb"/><rect x="1688" y="526" width="14" height="14" fill="#ff00ec"/><rect x="1702" y="526" width="14" height="14" fill="#ff00df"/><rect x="1716" y="526" width="14" height="14" fill="#ff00d3"/><rect x="1730" y="526" width="14" height="14" fill="#ff00c8"/><rect x="1744" y="526" width="14" height="14" fill="#ff00bf"/><rect x="1758" y="526" width="14" height="14" fill="#ff00b6"/><rect x="1366" y="540" width="14" height="14" fill="#001cff"/><rect x="1380" y="540" width="14" height="14" fill="#0019ff"/><rect x="1394" y="540" width="14" height="14" fill="#0015ff"/><rect x="1408" y="540" width="14" height="14" fill="#0012ff"/><rect x="1422" y="540" width="14" height="14" fill="#000eff"/><rect x="1436" y="540" width="14" height="14" fill="#070aff"/><rect x="1450" y="540" width="14" height="14" fill="#1407ff"/><rect x="1464" y="540" width="14" height="14" fill="#2103ff"/><rect x="1478" y="540" width="14" height="14" fill="#2f00ff"/><rect x="1492" y="540" width="14" height="14" fill="#3c00ff"/><rect x="1506" y="540" width="14" height="14" fill="#4a00ff"/><rect x="1520" y="540" width="14" height="14" fill="#5700ff"/><rect x="1534" y="540" width="14" height="14" fill="#6500ff"/><rect x="1548" y="540" width="14" height="14" fill="#7300ff"/><rect x="1562" y="540" width="14" height="14" fill="#8100ff"/><rect x="1576" y="540" width="14" height="14" fill="#8f00ff"/><rect x="1590" y="540" width="14" height="14" fill="#9e00ff"/><rect x="1604" y="540" width="14" height="14" fill="#ac00ff"/><rect x="1618" y="540" width="14" height="14" fill="#bb00ff"/><rect x="1632" y="540" width="14" height="14" fill="#c900ff"/><rect x="1646" y="540" width="14" height="14" fill="#d800ff"/><rect x="1660" y="540" width="14" height="14" fill="#e700ff"/><rect x="1674" y="540" width="14" height="14" fill="#f600ff"/><rect x="1688" y="540" width="14" height="14" fill="#ff00f9"/><rect x="1702" y="540" width="14" height="14" fill="#ff00eb"/><rect x="1716" y="540" width="14" height="14" fill="#ff00de"/><rect x="1730" y="540" width="14" height="14" fill="#ff00d3"/><rect x="1744" y="540" width="14" height="14" fill="#ff00c8"/><rect x="1758" y="540" width="14" height="14" fill="#ff00bf"/><rect x="1366" y="554" width="14" height="14" fill="#0019ff"/><rect x="1380" y="554" width="14" height="14" fill="#0015ff"/><rect x="1394" y="554" width="14" height="14" fill="#0012ff"/><rect x="1408" y="554" width="14" height="14" fill="#000eff"/><rect x="1422" y="554" width="14" height="14" fill="#000bff"/><rect x="1436" y="554" width="14" height="14" fill="#0507ff"/><rect x="1450" y="554" width="14" height="14" fill="#1203ff"/><rect x="1464" y="554" width="14" height="14" fill="#1e00ff"/><rect x="1478" y="554" width="14" height="14" fill="#2b00ff"/><rect x="1492" y="554" width="14" height="14" fill="#3800ff"/><rect x="1506" y="554" width="14" height="14" fill="#4500ff"/><rect x="1520" y="554" width="14" height="14" fill="#5200ff"/><rect x="1534" y="554" width="14" height="14" fill="#5f00ff"/><rect x="1548" y="554" width="14" height="14" fill="#6d00ff"/><rect x="1562" y="554" width="14" height="14" fill="#7a00ff"/><rect x="1576" y="554" width="14" height="14" fill="#8800ff"/><rect x="1590" y="554" width="14" height="14" fill="#9600ff"/><rect x="1604" y="554" width="14" height="14" fill="#a300ff"/><rect x="1618" y="554" width="14" height="14" fill="#b100ff"/><rect x="1632" y="554" width="14" height="14" fill="#c000ff"/><rect x="1646" y="554" width="14" height="14" fill="#ce00ff"/><rect x="1660" y="554" width="14" height="14" fill="#dc00ff"/><rect x="1674" y="554" width="14" height="14" fill="#eb00ff"/><rect x="1688" y="554" width="14" height="14" fill="#f900ff"/><rect x="1702" y="554" width="14" height="14" fill="#ff00f6"/><rect x="1716" y="554" width="14" height="14" fill="#ff00e9"/><rect x="1730" y="554" width="14" height="14" fill="#ff00dd"/><rect x="1744" y="554" width="14" height="14" fill="#ff00d2"/><rect x="1758" y="554" width="14" height="14" fill="#ff00c8"/><rect x="1366" y="568" width="14" height="14" fill="#0015ff"/><rect x="1380" y="568" width="14" height="14" fill="#0012ff"/><rect x="1394" y="568" width="14" height="14" fill="#000eff"/><rect x="1408" y="568" width="14" height="14" fill="#000bff"/><rect x="1422" y="568" width="14" height="14" fill="#0007ff"/><rect x="1436" y="568" width="14" height="14" fill="#0304ff"/><rect x="1450" y="568" width="14" height="14" fill="#0f00ff"/><rect x="1464" y="568" width="14" height="14" fill="#1c00ff"/><rect x="1478" y="568" width="14" height="14" fill="#2800ff"/><rect x="1492" y="568" width="14" height="14" fill="#3400ff"/><rect x="1506" y="568" width="14" height="14" fill="#4100ff"/><rect x="1520" y="568" width="14" height="14" fill="#4e00ff"/><rect x="1534" y="568" width="14" height="14" fill="#5a00ff"/><rect x="1548" y="568" width="14" height="14" fill="#6700ff"/><rect x="1562" y="568" width="14" height="14" fill="#7400ff"/><rect x="1576" y="568" width="14" height="14" fill="#8100ff"/><rect x="1590" y="568" width="14" height="14" fill="#8e00ff"/><rect x="1604" y="568" width="14" height="14" fill="#9c00ff"/><rect x="1618" y="568" width="14" height="14" fill="#a900ff"/><rect x="1632" y="568" width="14" height="14" fill="#b600ff"/><rect x="1646" y="568" width="14" height="14" fill="#c400ff"/><rect x="1660" y="568" width="14" height="14" fill="#d200ff"/><rect x="1674" y="568" width="14" height="14" fill="#e000ff"/><rect x="1688" y="568" width="14" height="14" fill="#ee00ff"/><rect x="1702" y="568" width="14" height="14" fill="#fc00ff"/><rect x="1716" y="568" width="14" height="14" fill="#ff00f4"/><rect x="1730" y="568" width="14" height="14" fill="#ff00e8"/><rect x="1744" y="568" width="14" height="14" fill="#ff00dc"/><rect x="1758" y="568" width="14" height="14" fill="#ff00d2"/><rect x="1366" y="582" width="14" height="14" fill="#0012ff"/><rect x="1380" y="582" width="14" height="14" fill="#000eff"/><rect x="1394" y="582" width="14" height="14" fill="#000bff"/><rect x="1408" y="582" width="14" height="14" fill="#0008ff"/><rect x="1422" y="582" width="14" height="14" fill="#0004ff"/><rect x="1436" y="582" width="14" height="14" fill="#0201ff"/><rect x="1450" y="582" width="14" height="14" fill="#0d00ff"/><rect x="1464" y="582" width="14" height="14" fill="#1900ff"/><rect x="1478" y="582" width="14" height="14" fill="#2500ff"/><rect x="1492" y="582" width="14" height="14" fill="#3100ff"/><rect x="1506" y="582" width="14" height="14" fill="#3d00ff"/><rect x="1520" y="582" width="14" height="14" fill="#4900ff"/><rect x="1534" y="582" width="14" height="14" fill="#5500ff"/><rect x="1548" y="582" width="14" height="14" fill="#6200ff"/><rect x="1562" y="582" width="14" height="14" fill="#6e00ff"/><rect x="1576" y="582" width="14" height="14" fill="#7b00ff"/><rect x="1590" y="582" width="14" height="14" fill="#8700ff"/><rect x="1604" y="582" width="14" height="14" fill="#9400ff"/><rect x="1618" y="582" width="14" height="14" fill="#a100ff"/><rect x="1632" y="582" width="14" height="14" fill="#ae00ff"/><rect x="1646" y="582" width="14" height="14" fill="#bb00ff"/><rect x="1660" y="582" width="14" height="14" fill="#c800ff"/><rect x="1674" y="582" width="14" height="14" fill="#d600ff"/><rect x="1688" y="582" width="14" height="14" fill="#e300ff"/><rect x="1702" y="582" width="14" height="14" fill="#f100ff"/><rect x="1716" y="582" width="14" height="14" fill="#fe00ff"/><rect x="1730" y="582" width="14" height="14" fill="#ff00f3"/><rect x="1744" y="582" width="14" height="14" fill="#ff00e7"/><rect x="1758" y="582" width="14" height="14" fill="#ff00dc"/><rect x="1366" y="596" width="14" height="14" fill="#000eff"/><rect x="1380" y="596" width="14" height="14" fill="#000bff"/><rect x="1394" y="596" width="14" height="14" fill="#0008ff"/><rect x="1408" y="596" width="14" height="14" fill="#0005ff"/><rect x="1422" y="596" width="14" height="14" fill="#0002ff"/><rect x="1436" y="596" width="14" height="14" fill="#0000ff"/><rect x="1450" y="596" width="14" height="14" fill="#0b00ff"/><rect x="1464" y="596" width="14" height="14" fill="#1700ff"/><rect x="1478" y="596" width="14" height="14" fill="#2200ff"/><rect x="1492" y="596" width="14" height="14" fill="#2e00ff"/><rect x="1506" y="596" width="14" height="14" fill="#3900ff"/><rect x="1520" y="596" width="14" height="14" fill="#4500ff"/><rect x="1534" y="596" width="14" height="14" fill="#5100ff"/><rect x="1548" y="596" width="14" height="14" fill="#5d00ff"/><rect x="1562" y="596" width="14" height="14" fill="#6900ff"/><rect x="1576" y="596" width="14" height="14" fill="#7500ff"/><rect x="1590" y="596" width="14" height="14" fill="#8100ff"/><rect x="1604" y="596" width="14" height="14" fill="#8d00ff"/><rect x="1618" y="596" width="14" height="14" fill="#9a00ff"/><rect x="1632" y="596" width="14" height="14" fill="#a600ff"/><rect x="1646" y="596" width="14" height="14" fill="#b300ff"/><rect x="1660" y="596" width="14" height="14" fill="#bf00ff"/><rect x="1674" y="596" width="14" height="14" fill="#cc00ff"/><rect x="1688" y="596" width="14" height="14" fill="#d900ff"/><rect x="1702" y="596" width="14" height="14" fill="#e600ff"/><rect x="1716" y="596" width="14" height="14" fill="#f300ff"/><rect x="1730" y="596" width="14" height="14" fill="#ff00fd"/><rect x="1744" y="596" width="14" height="14" fill="#ff00f1"/><rect x="1758" y="596" width="14" height="14" fill="#ff00e6"/><rect x="1366" y="610" width="14" height="14" fill="#000bff"/><rect x="1380" y="610" width="14" height="14" fill="#0008ff"/><rect x="1394" y="610" width="14" height="14" fill="#0005ff"/><rect x="1408" y="610" width="14" height="14" fill="#0002ff"/><rect x="1422" y="610" width="14" height="14" fill="#0000ff"/><rect x="1436" y="610" width="14" height="14" fill="#0000ff"/><rect x="1450" y="610" width="14" height="14" fill="#0a00ff"/><rect x="1464" y="610" width="14" height="14" fill="#1500ff"/><rect x="1478" y="610" width="14" height="14" fill="#2000ff"/><rect x="1492" y="610" width="14" height="14" fill="#2b00ff"/><rect x="1506" y="610" width="14" height="14" fill="#3600ff"/><rect x="1520" y="610" width="14" height="14" fill="#4100ff"/><rect x="1534" y="610" width="14" height="14" fill="#4d00ff"/><rect x="1548" y="610" width="14" height="14" fill="#5800ff"/><rect x="1562" y="610" width="14" height="14" fill="#6400ff"/><rect x="1576" y="610" width="14" height="14" fill="#6f00ff"/><rect x="1590" y="610" width="14" height="14" fill="#7b00ff"/><rect x="1604" y="610" width="14" height="14" fill="#8700ff"/><rect x="1618" y="610" width="14" height="14" fill="#9300ff"/><rect x="1632" y="610" width="14" height="14" fill="#9f00ff"/><rect x="1646" y="610" width="14" height="14" fill="#ab00ff"/><rect x="1660" y="610" width="14" height="14" fill="#b700ff"/><rect x="1674" y="610" width="14" height="14" fill="#c400ff"/><rect x="1688" y="610" width="14" height="14" fill="#d000ff"/><rect x="1702" y="610" width="14" height="14" fill="#dd00ff"/><rect x="1716" y="610" width="14" height="14" fill="#e900ff"/><rect x="1730" y="610" width="14" height="14" fill="#f600ff"/><rect x="1744" y="610" width="14" height="14" fill="#ff00fb"/><rect x="1758" y="610" width="14" height="14" fill="#ff00ef"/></g></g>
<rect x="1680.9" y="564.6" width="223.9" height="185.8" fill="#2a2a2a" />
<rect x="1683.6" y="568.3" width="218" height="179" fill="#999" />
<rect x="1684.0" y="569.0" width="217.0" height="177.0" fill="url(#insB)" />
<path d="M1684 586.5 L1901 728.5 V746 H1684 Z" fill="url(#insA)"/>
<text x="252.5" y="841.9" font-size="38.52" fill="#ececec" textLength="239.3" lengthAdjust="spacingAndGlyphs"  stroke="#ececec" stroke-width="0.60">Avg dE2000: 4.13</text>
<text x="248.4" y="892.8" font-size="38.95" fill="#ececec" textLength="248.5" lengthAdjust="spacingAndGlyphs"  stroke="#ececec" stroke-width="0.60">Max dE2000: 9.32</text>
<text x="215.2" y="951.4" font-size="38.23" fill="#ececec" textLength="225.2" lengthAdjust="spacingAndGlyphs"  stroke="#ececec" stroke-width="0.60">Current Reading</text>
<text x="215.0" y="997.2" font-size="31.11" fill="#ececec" textLength="105.0" lengthAdjust="spacingAndGlyphs"  stroke="#ececec" stroke-width="0.50">x: 0.4285</text>
<text x="376.0" y="997.2" font-size="31.11" fill="#ececec" textLength="106.7" lengthAdjust="spacingAndGlyphs"  stroke="#ececec" stroke-width="0.50">y: 0.5149</text>
<text x="215.0" y="1047.8" font-size="31.11" fill="#ececec" textLength="100.0" lengthAdjust="spacingAndGlyphs"  stroke="#ececec" stroke-width="0.50">fL: 46.69</text>
<text x="215.0" y="1089.7" font-size="31.11" fill="#ececec" textLength="164.4" lengthAdjust="spacingAndGlyphs"  stroke="#ececec" stroke-width="0.50">cd/m²: 159.99</text>
<rect x="564.3" y="850.0" width="261.0" height="224.4" fill="#242424" />
<line x1="564.3" y1="874.6" x2="825.3" y2="874.6" stroke="#8c8c8c" stroke-width="2.00" />
<line x1="558.3" y1="874.6" x2="564.3" y2="874.6" stroke="#d0d0d0" stroke-width="2.00" />
<text x="558.3" y="880.9" font-size="18.31" fill="#d6d6d6" text-anchor="end" textLength="15.6" lengthAdjust="spacingAndGlyphs" >40</text>
<line x1="564.3" y1="919.4" x2="825.3" y2="919.4" stroke="#8c8c8c" stroke-width="2.00" />
<line x1="558.3" y1="919.4" x2="564.3" y2="919.4" stroke="#d0d0d0" stroke-width="2.00" />
<text x="558.3" y="925.7" font-size="18.31" fill="#d6d6d6" text-anchor="end" textLength="15.6" lengthAdjust="spacingAndGlyphs" >20</text>
<line x1="564.3" y1="964.3" x2="825.3" y2="964.3" stroke="#8c8c8c" stroke-width="2.00" />
<line x1="558.3" y1="964.3" x2="564.3" y2="964.3" stroke="#d0d0d0" stroke-width="2.00" />
<text x="558.3" y="970.6" font-size="18.31" fill="#d6d6d6" text-anchor="end" textLength="7.8" lengthAdjust="spacingAndGlyphs" >0</text>
<line x1="564.3" y1="1009.1" x2="825.3" y2="1009.1" stroke="#8c8c8c" stroke-width="2.00" />
<line x1="558.3" y1="1009.1" x2="564.3" y2="1009.1" stroke="#d0d0d0" stroke-width="2.00" />
<text x="558.3" y="1015.4" font-size="18.31" fill="#d6d6d6" text-anchor="end" textLength="23.0" lengthAdjust="spacingAndGlyphs" >-20</text>
<line x1="564.3" y1="1054.0" x2="825.3" y2="1054.0" stroke="#8c8c8c" stroke-width="2.00" />
<line x1="558.3" y1="1054.0" x2="564.3" y2="1054.0" stroke="#d0d0d0" stroke-width="2.00" />
<text x="558.3" y="1060.3" font-size="18.31" fill="#d6d6d6" text-anchor="end" textLength="23.0" lengthAdjust="spacingAndGlyphs" >-40</text>
<line x1="564.3" y1="850.0" x2="825.3" y2="850.0" stroke="#8a8a8a" stroke-width="2.50" />
<line x1="564.3" y1="850.0" x2="564.3" y2="1082.4" stroke="#a8a8a8" stroke-width="2.00" />
<line x1="825.3" y1="850.0" x2="825.3" y2="1082.4" stroke="#a8a8a8" stroke-width="2.00" />
<line x1="564.3" y1="1074.4" x2="825.3" y2="1074.4" stroke="#a0a0a0" stroke-width="2.00" />
<text x="680.7" y="844.5" font-size="18.60" fill="#d4d4d4" text-anchor="middle" textLength="85.0" lengthAdjust="spacingAndGlyphs" >RGB Balance</text>
<text x="695.0" y="1096.0" font-size="18.60" fill="#d6d6d6" text-anchor="middle" textLength="37.5" lengthAdjust="spacingAndGlyphs" >100%</text>
<rect x="591" y="955.5" width="69.4" height="8.8" fill="url(#rbar)" stroke="#000" stroke-width="1.5"/>
<rect x="661" y="960.5" width="69.5" height="3.8" fill="url(#gbar)" stroke="#000" stroke-width="1.2"/>
<rect x="731.5" y="964.3" width="69.4" height="105" fill="url(#bbar)" stroke="#000" stroke-width="1.5"/>
<rect x="848.0" y="813.0" width="743.0" height="37.7" fill="url(#thead)" />
<rect x="848.0" y="813.0" width="20.0" height="37.7" fill="#000000" />
<rect x="848.0" y="850.7" width="743.0" height="35.6" fill="#3c3c3c" />
<rect x="848.0" y="850.7" width="20.0" height="35.6" fill="#262626" />
<line x1="848.0" y1="851.2" x2="868.0" y2="851.2" stroke="#1a1a1a" stroke-width="1.00" />
<text x="874.8" y="877.8" font-size="23.26" fill="#f2f2f2" textLength="82.0" lengthAdjust="spacingAndGlyphs"  stroke="#f2f2f2" stroke-width="0.30">x: CIE31</text>
<text x="1039.0" y="877.8" font-size="23.26" fill="#f2f2f2" textLength="71.0" lengthAdjust="spacingAndGlyphs"  stroke="#f2f2f2" stroke-width="0.30">0.3360</text>
<text x="1150.8" y="877.8" font-size="23.26" fill="#f2f2f2" textLength="71.0" lengthAdjust="spacingAndGlyphs"  stroke="#f2f2f2" stroke-width="0.30">0.3591</text>
<text x="1262.4" y="877.8" font-size="23.26" fill="#f2f2f2" textLength="71.0" lengthAdjust="spacingAndGlyphs"  stroke="#f2f2f2" stroke-width="0.30">0.3825</text>
<text x="1374.4" y="877.8" font-size="23.26" fill="#f2f2f2" textLength="71.0" lengthAdjust="spacingAndGlyphs"  stroke="#f2f2f2" stroke-width="0.30">0.4040</text>
<text x="1486.0" y="877.8" font-size="23.26" fill="#f2f2f2" textLength="71.0" lengthAdjust="spacingAndGlyphs"  stroke="#f2f2f2" stroke-width="0.30">0.4285</text>
<rect x="848.0" y="886.3" width="743.0" height="35.2" fill="#7e7e7e" />
<rect x="848.0" y="886.3" width="20.0" height="35.2" fill="#2e2e2e" />
<line x1="848.0" y1="886.8" x2="868.0" y2="886.8" stroke="#1a1a1a" stroke-width="1.00" />
<text x="874.8" y="913.2" font-size="23.26" fill="#f2f2f2" textLength="82.0" lengthAdjust="spacingAndGlyphs"  stroke="#f2f2f2" stroke-width="0.30">y: CIE31</text>
<text x="1039.0" y="913.2" font-size="23.26" fill="#f2f2f2" textLength="71.0" lengthAdjust="spacingAndGlyphs"  stroke="#f2f2f2" stroke-width="0.30">0.3660</text>
<text x="1150.8" y="913.2" font-size="23.26" fill="#f2f2f2" textLength="71.0" lengthAdjust="spacingAndGlyphs"  stroke="#f2f2f2" stroke-width="0.30">0.4033</text>
<text x="1262.4" y="913.2" font-size="23.26" fill="#f2f2f2" textLength="69.2" lengthAdjust="spacingAndGlyphs"  stroke="#f2f2f2" stroke-width="0.30">0.4411</text>
<text x="1374.4" y="913.2" font-size="23.26" fill="#f2f2f2" textLength="71.0" lengthAdjust="spacingAndGlyphs"  stroke="#f2f2f2" stroke-width="0.30">0.4760</text>
<text x="1486.0" y="913.2" font-size="23.26" fill="#f2f2f2" textLength="71.0" lengthAdjust="spacingAndGlyphs"  stroke="#f2f2f2" stroke-width="0.30">0.5149</text>
<rect x="848.0" y="921.5" width="743.0" height="35.7" fill="#3c3c3c" />
<rect x="848.0" y="921.5" width="20.0" height="35.7" fill="#262626" />
<line x1="848.0" y1="922.0" x2="868.0" y2="922.0" stroke="#1a1a1a" stroke-width="1.00" />
<text x="874.8" y="948.6" font-size="23.26" fill="#f2f2f2" textLength="13.5" lengthAdjust="spacingAndGlyphs"  stroke="#f2f2f2" stroke-width="0.30">Y</text>
<text x="1039.0" y="948.6" font-size="23.26" fill="#f2f2f2" textLength="96.8" lengthAdjust="spacingAndGlyphs"  stroke="#f2f2f2" stroke-width="0.30">169.7086</text>
<text x="1150.8" y="948.6" font-size="23.26" fill="#f2f2f2" textLength="96.8" lengthAdjust="spacingAndGlyphs"  stroke="#f2f2f2" stroke-width="0.30">166.7006</text>
<text x="1262.4" y="948.6" font-size="23.26" fill="#f2f2f2" textLength="96.8" lengthAdjust="spacingAndGlyphs"  stroke="#f2f2f2" stroke-width="0.30">164.3047</text>
<text x="1374.4" y="948.6" font-size="23.26" fill="#f2f2f2" textLength="96.8" lengthAdjust="spacingAndGlyphs"  stroke="#f2f2f2" stroke-width="0.30">162.3431</text>
<text x="1486.0" y="948.6" font-size="23.26" fill="#f2f2f2" textLength="96.8" lengthAdjust="spacingAndGlyphs"  stroke="#f2f2f2" stroke-width="0.30">159.9860</text>
<rect x="848.0" y="957.2" width="743.0" height="35.6" fill="#7e7e7e" />
<rect x="848.0" y="957.2" width="20.0" height="35.6" fill="#2e2e2e" />
<line x1="848.0" y1="957.7" x2="868.0" y2="957.7" stroke="#1a1a1a" stroke-width="1.00" />
<text x="874.8" y="984.3" font-size="23.26" fill="#f2f2f2" textLength="148.0" lengthAdjust="spacingAndGlyphs"  stroke="#f2f2f2" stroke-width="0.30">Target x:CIE31</text>
<text x="1039.0" y="984.3" font-size="23.26" fill="#f2f2f2" textLength="71.0" lengthAdjust="spacingAndGlyphs"  stroke="#f2f2f2" stroke-width="0.30">0.3344</text>
<text x="1150.8" y="984.3" font-size="23.26" fill="#f2f2f2" textLength="71.0" lengthAdjust="spacingAndGlyphs"  stroke="#f2f2f2" stroke-width="0.30">0.3564</text>
<text x="1262.4" y="984.3" font-size="23.26" fill="#f2f2f2" textLength="71.0" lengthAdjust="spacingAndGlyphs"  stroke="#f2f2f2" stroke-width="0.30">0.3773</text>
<text x="1374.4" y="984.3" font-size="23.26" fill="#f2f2f2" textLength="71.0" lengthAdjust="spacingAndGlyphs"  stroke="#f2f2f2" stroke-width="0.30">0.3969</text>
<text x="1486.0" y="984.3" font-size="23.26" fill="#f2f2f2" textLength="71.0" lengthAdjust="spacingAndGlyphs"  stroke="#f2f2f2" stroke-width="0.30">0.4193</text>
<rect x="848.0" y="992.8" width="743.0" height="35.2" fill="#3c3c3c" />
<rect x="848.0" y="992.8" width="20.0" height="35.2" fill="#262626" />
<line x1="848.0" y1="993.3" x2="868.0" y2="993.3" stroke="#1a1a1a" stroke-width="1.00" />
<text x="874.8" y="1019.7" font-size="23.26" fill="#f2f2f2" textLength="149.0" lengthAdjust="spacingAndGlyphs"  stroke="#f2f2f2" stroke-width="0.30">Target y:CIE31</text>
<text x="1039.0" y="1019.7" font-size="23.26" fill="#f2f2f2" textLength="71.0" lengthAdjust="spacingAndGlyphs"  stroke="#f2f2f2" stroke-width="0.30">0.3648</text>
<text x="1150.8" y="1019.7" font-size="23.26" fill="#f2f2f2" textLength="71.0" lengthAdjust="spacingAndGlyphs"  stroke="#f2f2f2" stroke-width="0.30">0.4013</text>
<text x="1262.4" y="1019.7" font-size="23.26" fill="#f2f2f2" textLength="71.0" lengthAdjust="spacingAndGlyphs"  stroke="#f2f2f2" stroke-width="0.30">0.4358</text>
<text x="1374.4" y="1019.7" font-size="23.26" fill="#f2f2f2" textLength="71.0" lengthAdjust="spacingAndGlyphs"  stroke="#f2f2f2" stroke-width="0.30">0.4682</text>
<text x="1486.0" y="1019.7" font-size="23.26" fill="#f2f2f2" textLength="71.0" lengthAdjust="spacingAndGlyphs"  stroke="#f2f2f2" stroke-width="0.30">0.5053</text>
<rect x="848.0" y="1028.0" width="743.0" height="35.3" fill="#7e7e7e" />
<rect x="848.0" y="1028.0" width="20.0" height="35.3" fill="#2e2e2e" />
<line x1="848.0" y1="1028.5" x2="868.0" y2="1028.5" stroke="#1a1a1a" stroke-width="1.00" />
<text x="874.8" y="1055.0" font-size="23.26" fill="#f2f2f2" textLength="86.0" lengthAdjust="spacingAndGlyphs"  stroke="#f2f2f2" stroke-width="0.30">Target Y</text>
<text x="1039.0" y="1055.0" font-size="23.26" fill="#f2f2f2" textLength="96.8" lengthAdjust="spacingAndGlyphs"  stroke="#f2f2f2" stroke-width="0.30">166.0676</text>
<text x="1150.8" y="1055.0" font-size="23.26" fill="#f2f2f2" textLength="96.8" lengthAdjust="spacingAndGlyphs"  stroke="#f2f2f2" stroke-width="0.30">163.1526</text>
<text x="1262.4" y="1055.0" font-size="23.26" fill="#f2f2f2" textLength="96.8" lengthAdjust="spacingAndGlyphs"  stroke="#f2f2f2" stroke-width="0.30">160.9129</text>
<text x="1374.4" y="1055.0" font-size="23.26" fill="#f2f2f2" textLength="96.8" lengthAdjust="spacingAndGlyphs"  stroke="#f2f2f2" stroke-width="0.30">159.1551</text>
<text x="1486.0" y="1055.0" font-size="23.26" fill="#f2f2f2" textLength="96.8" lengthAdjust="spacingAndGlyphs"  stroke="#f2f2f2" stroke-width="0.30">157.4558</text>
<rect x="848.0" y="1063.3" width="743.0" height="35.6" fill="#3c3c3c" />
<rect x="848.0" y="1063.3" width="20.0" height="35.6" fill="#262626" />
<line x1="848.0" y1="1063.8" x2="868.0" y2="1063.8" stroke="#1a1a1a" stroke-width="1.00" />
<text x="874.8" y="1090.4" font-size="23.26" fill="#f2f2f2" textLength="86.7" lengthAdjust="spacingAndGlyphs"  stroke="#f2f2f2" stroke-width="0.30">ΔE 2000</text>
<text x="1039.0" y="1090.4" font-size="23.26" fill="#f2f2f2" textLength="71.0" lengthAdjust="spacingAndGlyphs"  stroke="#f2f2f2" stroke-width="0.30">0.7298</text>
<text x="1150.8" y="1090.4" font-size="23.26" fill="#f2f2f2" textLength="71.0" lengthAdjust="spacingAndGlyphs"  stroke="#f2f2f2" stroke-width="0.30">0.8277</text>
<text x="1262.4" y="1090.4" font-size="23.26" fill="#f2f2f2" textLength="71.0" lengthAdjust="spacingAndGlyphs"  stroke="#f2f2f2" stroke-width="0.30">1.2032</text>
<text x="1374.4" y="1090.4" font-size="23.26" fill="#f2f2f2" textLength="71.0" lengthAdjust="spacingAndGlyphs"  stroke="#f2f2f2" stroke-width="0.30">1.5132</text>
<text x="1486.0" y="1090.4" font-size="23.26" fill="#f2f2f2" textLength="71.0" lengthAdjust="spacingAndGlyphs"  stroke="#f2f2f2" stroke-width="0.30">2.0433</text>
<text x="1039.0" y="839.6" font-size="20.35" fill="#f4f4f4" textLength="41.2" lengthAdjust="spacingAndGlyphs" stroke="#f4f4f4" stroke-width="0.3">20%</text>
<text x="1150.8" y="839.6" font-size="20.35" fill="#f4f4f4" textLength="41.2" lengthAdjust="spacingAndGlyphs" stroke="#f4f4f4" stroke-width="0.3">40%</text>
<text x="1262.4" y="839.6" font-size="20.35" fill="#f4f4f4" textLength="41.2" lengthAdjust="spacingAndGlyphs" stroke="#f4f4f4" stroke-width="0.3">60%</text>
<text x="1374.4" y="839.6" font-size="20.35" fill="#f4f4f4" textLength="41.2" lengthAdjust="spacingAndGlyphs" stroke="#f4f4f4" stroke-width="0.3">80%</text>
<text x="1486.0" y="839.6" font-size="20.35" fill="#f4f4f4" textLength="53.0" lengthAdjust="spacingAndGlyphs" stroke="#f4f4f4" stroke-width="0.3">100%</text>
<rect x="200.0" y="1108.0" width="1396.0" height="62.0" fill="url(#stripbg)" />
<rect x="201.4" y="1108" width="44.3" height="61" rx="4" fill="url(#sbtn)"/>
<circle cx="223.5" cy="1117.2" r="7.2" fill="url(#upc)"/>
<path d="M219 1120 L223.5 1115 L228 1120 Z" fill="#222"/>
<rect x="206" y="1134" width="35.3" height="30" rx="2.5" fill="#ffff00"/>
<rect x="252.0" y="1108" width="150.0" height="62" rx="4" fill="url(#sbtn)"/>
<rect x="258.0" y="1113.5" width="139.0" height="35.5" rx="2.5" fill="#c0c0a3"/>
<text x="327.0" y="1164.0" font-size="12.21" fill="#222222" text-anchor="middle" textLength="21.0" lengthAdjust="spacingAndGlyphs"  stroke="#222222" stroke-width="0.35">20%</text>
<rect x="404.3" y="1108" width="149.5" height="62" rx="4" fill="url(#sbtn)"/>
<rect x="410.3" y="1113.5" width="138.5" height="35.5" rx="2.5" fill="#c0c088"/>
<text x="479.0" y="1164.0" font-size="12.21" fill="#222222" text-anchor="middle" textLength="21.0" lengthAdjust="spacingAndGlyphs"  stroke="#222222" stroke-width="0.35">40%</text>
<rect x="556.0" y="1108" width="149.5" height="62" rx="4" fill="url(#sbtn)"/>
<rect x="562.0" y="1113.5" width="138.5" height="35.5" rx="2.5" fill="#c0bf6b"/>
<text x="630.8" y="1164.0" font-size="12.21" fill="#222222" text-anchor="middle" textLength="21.0" lengthAdjust="spacingAndGlyphs"  stroke="#222222" stroke-width="0.35">60%</text>
<rect x="707.7" y="1108" width="150.3" height="62" rx="4" fill="url(#sbtn)"/>
<rect x="713.7" y="1113.5" width="139.3" height="35.5" rx="2.5" fill="#c0c04c"/>
<text x="782.9" y="1164.0" font-size="12.21" fill="#222222" text-anchor="middle" textLength="21.0" lengthAdjust="spacingAndGlyphs"  stroke="#222222" stroke-width="0.35">80%</text>
<rect x="860.2" y="1108" width="149.2" height="61" rx="4" fill="url(#selbtn)"/>
<rect x="865.2" y="1113.5" width="139.2" height="35.5" rx="2.5" fill="#c2c000"/>
<text x="935.3" y="1164.0" font-size="12.50" fill="#ffffff" font-weight="bold" text-anchor="middle" textLength="27.0" lengthAdjust="spacingAndGlyphs" >100%</text>
<rect x="1597.2" y="1107.7" width="47.4" height="61.3" rx="4" fill="url(#sbtn)"/>
<line x1="1597.2" y1="1126.8" x2="1644.6" y2="1126.8" stroke="#3c3c3c" stroke-width="1.00" />
<circle cx="1621" cy="1116.5" r="6.5" fill="url(#upc)"/>
<path d="M1617 1119 L1621 1114.5 L1625 1119 Z" fill="#222"/>
<rect x="1606.5" y="1133.3" width="29.5" height="29" rx="4" fill="url(#stopfr)" stroke="#1c1c1c" stroke-width="2.6"/>
<rect x="1614.2" y="1141" width="13.5" height="13.6" fill="url(#stopsq)"/>
<rect x="1646.0" y="1107.7" width="45" height="30" fill="url(#nbtn)" stroke="#444" stroke-width="0.6"/>
<circle cx="1668.8" cy="1122.8" r="10" fill="url(#ncirc)"/>
<rect x="1691.2" y="1107.7" width="45" height="30" fill="url(#nbtn)" stroke="#444" stroke-width="0.6"/>
<circle cx="1714.0" cy="1122.8" r="10" fill="url(#ncirc)"/>
<rect x="1736.5" y="1107.7" width="45" height="30" fill="url(#nbtn)" stroke="#444" stroke-width="0.6"/>
<circle cx="1759.3" cy="1122.8" r="10" fill="url(#ncirc)"/>
<rect x="1781.8" y="1107.7" width="45" height="30" fill="url(#nbtn)" stroke="#444" stroke-width="0.6"/>
<circle cx="1804.5" cy="1122.8" r="10" fill="url(#ncirc)"/>
<rect x="1827.0" y="1107.7" width="45" height="30" fill="url(#nbtn)" stroke="#444" stroke-width="0.6"/>
<circle cx="1849.8" cy="1122.8" r="10" fill="url(#ncirc)"/>
<rect x="1872.2" y="1107.7" width="47.8" height="30" fill="#333"/>
<circle cx="1896" cy="1122.8" r="10" fill="#262626"/>
<rect x="1665" y="1119.2" width="8" height="7.6" fill="#1e1e1e"/>
<path d="M1712 1118 L1720.8 1123.3 L1712 1128.6 Z" fill="#1e1e1e"/>
<path d="M1755.5 1117.5 H1753.5 V1128.5 H1755.5 M1764 1117.5 H1766 V1128.5 H1764" fill="none" stroke="#1e1e1e" stroke-width="1.8"/>
<circle cx="1758" cy="1123" r="0.9" fill="#1e1e1e"/><circle cx="1761.5" cy="1123" r="0.9" fill="#1e1e1e"/>
<path d="M1805 1122.8 C1802.5 1119.6 1798.5 1119.6 1798.5 1122.8 C1798.5 1126 1802.5 1126 1805 1122.8 C1807.5 1119.6 1811.5 1119.6 1811.5 1122.8 C1811.5 1126 1807.5 1126 1805 1122.8 Z" fill="none" stroke="#1e1e1e" stroke-width="1.7"/>
<path d="M1844 1121.5 A6.2 6.2 0 0 1 1855 1119.5" fill="none" stroke="#1e1e1e" stroke-width="2"/>
<path d="M1856 1124 A6.2 6.2 0 0 1 1845 1126.2" fill="none" stroke="#1e1e1e" stroke-width="2"/>
<path d="M1852.5 1116.5 L1857 1117 L1856 1121.5 Z M1847.5 1129 L1843 1128.6 L1844 1124.2 Z" fill="#1e1e1e"/>
<rect x="1646.0" y="1139.2" width="135.9" height="29.6" rx="3" fill="url(#nbtn)" stroke="#444" stroke-width="0.6"/>
<rect x="1782.0" y="1139.2" width="136.6" height="29.6" rx="3" fill="url(#nbtn)" stroke="#444" stroke-width="0.6"/>
<circle cx="1677" cy="1153.8" r="10" fill="url(#ncirc)"/>
<circle cx="1890" cy="1153.8" r="10" fill="url(#ncirc)"/>
<path d="M1676.5 1149.3 L1672 1154 L1676.5 1158.7 M1681.3 1149.3 L1676.8 1154 L1681.3 1158.7" fill="none" stroke="#1e1e1e" stroke-width="1.7"/>
<path d="M1885.5 1149.3 L1890 1154 L1885.5 1158.7 M1890.3 1149.3 L1894.8 1154 L1890.3 1158.7" fill="none" stroke="#1e1e1e" stroke-width="1.7"/>
<text x="1704.0" y="1162.2" font-size="23.26" fill="#262626" textLength="49.5" lengthAdjust="spacingAndGlyphs"  stroke="#262626" stroke-width="0.45">Back</text>
<text x="1810.0" y="1162.2" font-size="23.26" fill="#262626" textLength="51.6" lengthAdjust="spacingAndGlyphs"  stroke="#262626" stroke-width="0.45">Next</text>
</svg>
<canvas id="ciec" width="658" height="614" style="position:absolute;left:1250px;top:144px"></canvas>
<script>
(function(){
var c=document.getElementById('ciec');if(!c||!c.getContext)return;var ctx=c.getContext('2d');
var W=658,H=614,img=ctx.createImageData(W,H),d=img.data;
for(var j=0;j<H;j++){var v=(757.50-(144+j+0.5))/1022.00;
for(var i=0;i<W;i++){var u=(1250+i+0.5-1249.50)/1096.50;
var den=6*u-16*v+12,x=9*u/den,y=4*v/den;if(y<1e-6)y=1e-6;var X=x/y,Z=(1-x-y)/y;
var r=3.2406*X-1.5372-0.4986*Z,g=-0.9689*X+1.8758+0.0415*Z,b=0.0557*X-0.2040+1.0570*Z;
var o=(r<0||g<0||b<0);if(r<0)r=0;if(g<0)g=0;if(b<0)b=0;var m=Math.max(r,g,b,1e-9);var k=255/m*(o?0.59:1);
var p=(j*W+i)*4;d[p]=r*k;d[p+1]=g*k;d[p+2]=b*k;d[p+3]=255;}}
ctx.putImageData(img,0,0);
var P=[281.1,596.5,280.6,596.6,279.8,596.7,279.0,596.7,278.0,596.8,277.0,596.6,276.0,596.2,275.1,595.7,274.1,594.9,273.2,594.1,272.1,593.1,270.8,591.8,269.3,590.4,267.7,588.8,265.9,587.0,264.0,585.0,261.8,582.8,259.5,580.4,256.8,577.7,254.0,574.9,251.0,572.0,247.8,568.8,244.3,565.3,240.6,561.5,236.5,557.3,232.1,552.9,227.5,548.5,222.6,543.7,217.3,538.3,211.6,532.0,205.3,524.5,198.1,515.4,190.0,504.7,181.5,493.2,172.9,481.4,164.8,469.8,157.5,459.2,151.3,449.6,145.7,440.7,140.6,432.1,135.6,423.4,130.6,414.3,125.3,404.6,119.6,394.1,113.8,383.2,107.9,371.9,102.0,360.3,96.1,348.5,90.3,336.7,84.5,324.8,78.7,312.6,72.9,300.2,67.2,287.7,61.8,275.4,56.6,263.3,51.7,251.2,47.0,239.1,42.5,227.1,38.3,215.3,34.2,203.8,30.4,192.7,26.9,182.0,23.5,171.6,20.4,161.4,17.6,151.6,14.9,142.3,12.5,133.4,10.4,125.0,8.6,117.0,7.0,109.4,5.6,102.3,4.4,95.5,3.3,89.1,2.5,83.1,1.8,77.5,1.4,72.3,1.1,67.5,1.0,62.9,1.0,58.5,1.2,54.3,1.6,50.4,2.1,46.8,2.8,43.4,3.6,40.3,4.5,37.3,5.6,34.5,6.9,32.0,8.2,29.7,9.7,27.5,11.3,25.6,13.0,23.8,14.7,22.2,16.6,20.9,18.6,19.7,20.6,18.7,22.7,17.8,24.8,17.0,27.0,16.3,29.3,15.8,31.7,15.3,34.1,15.0,36.5,14.8,39.0,14.5,41.5,14.3,44.0,14.1,46.6,14.0,49.2,13.9,51.8,13.8,54.4,13.8,57.0,13.8,59.6,13.8,62.2,13.8,64.8,13.9,67.4,14.0,70.0,14.1,72.7,14.2,75.3,14.3,78.0,14.5,80.8,14.6,83.5,14.8,86.3,15.0,89.2,15.2,92.1,15.5,95.0,15.7,98.0,16.0,101.0,16.3,104.0,16.5,106.8,16.8,109.3,17.1,111.9,17.3,114.8,17.6,118.4,18.0,123.1,18.6,128.9,19.3,135.6,20.1,143.0,21.1,150.9,22.1,159.1,23.1,167.4,24.2,175.7,25.3,184.3,26.5,193.2,27.7,202.4,28.9,211.8,30.2,221.7,31.6,231.8,33.0,242.3,34.5,253.0,36.0,264.1,37.5,275.5,39.1,287.1,40.8,299.1,42.4,311.5,44.2,324.2,45.9,337.1,47.7,350.0,49.5,363.0,51.3,376.1,53.1,389.3,55.0,402.7,56.9,416.0,58.7,429.1,60.6,441.9,62.3,454.5,64.1,467.1,65.8,479.4,67.5,491.4,69.1,503.0,70.7,514.0,72.2,524.4,73.7,534.4,75.1,544.0,76.5,553.1,77.7,561.8,79.0,570.0,80.1,577.7,81.2,584.8,82.2,591.5,83.1,597.9,84.0,603.9,84.8,609.7,85.6,615.3,86.4,620.5,87.2,625.5,87.9,630.2,88.5,634.6,89.1,638.8,89.7,642.5,90.2,645.7,90.7,648.6,91.1,651.5,91.5,654.5,91.9,657.9,92.4,662.1,93.0,666.8,93.6,671.7,94.3,676.3,94.9,680.3,95.5,683.1,95.9];
ctx.globalCompositeOperation='destination-in';ctx.beginPath();ctx.moveTo(P[0],P[1]);
for(var q=2;q<P.length;q+=2)ctx.lineTo(P[q],P[q+1]);ctx.closePath();ctx.fill();
})();
</script><canvas id="insc" width="217" height="177" style="position:absolute;left:1684px;top:569px"></canvas>
<script>
(function(){
var c=document.getElementById('insc');if(!c||!c.getContext)return;var ctx=c.getContext('2d');
var W=217,H=177,img=ctx.createImageData(W,H),d=img.data;
for(var j=0;j<H;j++){var y=0.5292-(j+0.5)*0.0485/177;
for(var i=0;i<W;i++){var x=0.3952+(i+0.5)*0.0485/217;
var X=x/y,Z=(1-x-y)/y;
var r=3.2406*X-1.5372-0.4986*Z,g=-0.9689*X+1.8758+0.0415*Z,b=0.0557*X-0.2040+1.0570*Z;
var o=(r<0||g<0||b<0);if(r<0)r=0;if(g<0)g=0;if(b<0)b=0;var m=Math.max(r,g,b,1e-9);var k=255/m*(o?0.59:1);
var p=(j*W+i)*4;d[p]=r*k;d[p+1]=g*k;d[p+2]=b*k;d[p+3]=255;}}
ctx.putImageData(img,0,0);
})();
</script>
<svg id="over" width="1920" height="1170" viewBox="0 0 1920 1170">
<line x1="1249.5" y1="143.8" x2="1908.5" y2="143.8" stroke="#9a9a9a" stroke-width="1.60" />
<line x1="1908.0" y1="144.0" x2="1908.0" y2="757.5" stroke="#9a9a9a" stroke-width="1.50" />
<line x1="1249.5" y1="144.0" x2="1249.5" y2="764.5" stroke="#a8a8a8" stroke-width="1.60" />
<line x1="1242.5" y1="757.5" x2="1908.5" y2="757.5" stroke="#a8a8a8" stroke-width="2.00" />
<line x1="1242.5" y1="757.5" x2="1249.5" y2="757.5" stroke="#c8c8c8" stroke-width="2.00" />
<text x="1242.5" y="766.1" font-size="18.02" fill="#d8d8d8" text-anchor="end" textLength="7.6" lengthAdjust="spacingAndGlyphs" >0</text>
<line x1="1242.5" y1="706.4" x2="1249.5" y2="706.4" stroke="#c8c8c8" stroke-width="1.50" />
<text x="1242.5" y="715.0" font-size="18.02" fill="#d8d8d8" text-anchor="end" textLength="29.0" lengthAdjust="spacingAndGlyphs" >0.05</text>
<line x1="1242.5" y1="655.3" x2="1249.5" y2="655.3" stroke="#c8c8c8" stroke-width="1.50" />
<text x="1242.5" y="663.9" font-size="18.02" fill="#d8d8d8" text-anchor="end" textLength="21.0" lengthAdjust="spacingAndGlyphs" >0.1</text>
<line x1="1242.5" y1="604.2" x2="1249.5" y2="604.2" stroke="#c8c8c8" stroke-width="1.50" />
<text x="1242.5" y="612.8" font-size="18.02" fill="#d8d8d8" text-anchor="end" textLength="29.0" lengthAdjust="spacingAndGlyphs" >0.15</text>
<line x1="1242.5" y1="553.1" x2="1249.5" y2="553.1" stroke="#c8c8c8" stroke-width="1.50" />
<text x="1242.5" y="561.7" font-size="18.02" fill="#d8d8d8" text-anchor="end" textLength="21.0" lengthAdjust="spacingAndGlyphs" >0.2</text>
<line x1="1242.5" y1="502.0" x2="1249.5" y2="502.0" stroke="#c8c8c8" stroke-width="1.50" />
<text x="1242.5" y="510.6" font-size="18.02" fill="#d8d8d8" text-anchor="end" textLength="29.0" lengthAdjust="spacingAndGlyphs" >0.25</text>
<line x1="1242.5" y1="450.9" x2="1249.5" y2="450.9" stroke="#c8c8c8" stroke-width="1.50" />
<text x="1242.5" y="459.5" font-size="18.02" fill="#d8d8d8" text-anchor="end" textLength="21.0" lengthAdjust="spacingAndGlyphs" >0.3</text>
<line x1="1242.5" y1="399.8" x2="1249.5" y2="399.8" stroke="#c8c8c8" stroke-width="1.50" />
<text x="1242.5" y="408.4" font-size="18.02" fill="#d8d8d8" text-anchor="end" textLength="29.0" lengthAdjust="spacingAndGlyphs" >0.35</text>
<line x1="1242.5" y1="348.7" x2="1249.5" y2="348.7" stroke="#c8c8c8" stroke-width="1.50" />
<text x="1242.5" y="357.3" font-size="18.02" fill="#d8d8d8" text-anchor="end" textLength="21.0" lengthAdjust="spacingAndGlyphs" >0.4</text>
<line x1="1242.5" y1="297.6" x2="1249.5" y2="297.6" stroke="#c8c8c8" stroke-width="1.50" />
<text x="1242.5" y="306.2" font-size="18.02" fill="#d8d8d8" text-anchor="end" textLength="29.0" lengthAdjust="spacingAndGlyphs" >0.45</text>
<line x1="1242.5" y1="246.5" x2="1249.5" y2="246.5" stroke="#c8c8c8" stroke-width="1.50" />
<text x="1242.5" y="255.1" font-size="18.02" fill="#d8d8d8" text-anchor="end" textLength="21.0" lengthAdjust="spacingAndGlyphs" >0.5</text>
<line x1="1242.5" y1="195.4" x2="1249.5" y2="195.4" stroke="#c8c8c8" stroke-width="1.50" />
<text x="1242.5" y="204.0" font-size="18.02" fill="#d8d8d8" text-anchor="end" textLength="29.0" lengthAdjust="spacingAndGlyphs" >0.55</text>
<line x1="1249.5" y1="757.5" x2="1249.5" y2="764.5" stroke="#c8c8c8" stroke-width="1.50" />
<text x="1249.8" y="784.6" font-size="18.02" fill="#d8d8d8" text-anchor="middle" textLength="8.1" lengthAdjust="spacingAndGlyphs" >0</text>
<line x1="1304.3" y1="757.5" x2="1304.3" y2="764.5" stroke="#c8c8c8" stroke-width="1.50" />
<text x="1304.6" y="784.6" font-size="18.02" fill="#d8d8d8" text-anchor="middle" textLength="29.0" lengthAdjust="spacingAndGlyphs" >0.05</text>
<line x1="1359.2" y1="757.5" x2="1359.2" y2="764.5" stroke="#c8c8c8" stroke-width="1.50" />
<text x="1359.5" y="784.6" font-size="18.02" fill="#d8d8d8" text-anchor="middle" textLength="21.0" lengthAdjust="spacingAndGlyphs" >0.1</text>
<line x1="1414.0" y1="757.5" x2="1414.0" y2="764.5" stroke="#c8c8c8" stroke-width="1.50" />
<text x="1414.3" y="784.6" font-size="18.02" fill="#d8d8d8" text-anchor="middle" textLength="29.0" lengthAdjust="spacingAndGlyphs" >0.15</text>
<line x1="1468.8" y1="757.5" x2="1468.8" y2="764.5" stroke="#c8c8c8" stroke-width="1.50" />
<text x="1469.1" y="784.6" font-size="18.02" fill="#d8d8d8" text-anchor="middle" textLength="21.0" lengthAdjust="spacingAndGlyphs" >0.2</text>
<line x1="1523.6" y1="757.5" x2="1523.6" y2="764.5" stroke="#c8c8c8" stroke-width="1.50" />
<text x="1523.9" y="784.6" font-size="18.02" fill="#d8d8d8" text-anchor="middle" textLength="29.0" lengthAdjust="spacingAndGlyphs" >0.25</text>
<line x1="1578.5" y1="757.5" x2="1578.5" y2="764.5" stroke="#c8c8c8" stroke-width="1.50" />
<text x="1578.8" y="784.6" font-size="18.02" fill="#d8d8d8" text-anchor="middle" textLength="21.0" lengthAdjust="spacingAndGlyphs" >0.3</text>
<line x1="1633.3" y1="757.5" x2="1633.3" y2="764.5" stroke="#c8c8c8" stroke-width="1.50" />
<text x="1633.6" y="784.6" font-size="18.02" fill="#d8d8d8" text-anchor="middle" textLength="29.0" lengthAdjust="spacingAndGlyphs" >0.35</text>
<line x1="1688.1" y1="757.5" x2="1688.1" y2="764.5" stroke="#c8c8c8" stroke-width="1.50" />
<text x="1688.4" y="784.6" font-size="18.02" fill="#d8d8d8" text-anchor="middle" textLength="21.0" lengthAdjust="spacingAndGlyphs" >0.4</text>
<line x1="1742.9" y1="757.5" x2="1742.9" y2="764.5" stroke="#c8c8c8" stroke-width="1.50" />
<text x="1743.2" y="784.6" font-size="18.02" fill="#d8d8d8" text-anchor="middle" textLength="29.0" lengthAdjust="spacingAndGlyphs" >0.45</text>
<line x1="1797.8" y1="757.5" x2="1797.8" y2="764.5" stroke="#c8c8c8" stroke-width="1.50" />
<text x="1798.0" y="784.6" font-size="18.02" fill="#d8d8d8" text-anchor="middle" textLength="21.0" lengthAdjust="spacingAndGlyphs" >0.5</text>
<line x1="1852.6" y1="757.5" x2="1852.6" y2="764.5" stroke="#c8c8c8" stroke-width="1.50" />
<text x="1852.9" y="784.6" font-size="18.02" fill="#d8d8d8" text-anchor="middle" textLength="29.0" lengthAdjust="spacingAndGlyphs" >0.55</text>
<rect x="1377.5" y="171.8" width="14.5" height="17.5" fill="none" stroke="#ffffff" stroke-width="1.7"/>
<rect x="1391.2" y="187.8" width="14.5" height="17.5" fill="none" stroke="#ffffff" stroke-width="1.7"/>
<rect x="1403.7" y="202.6" width="14.5" height="17.5" fill="none" stroke="#ffffff" stroke-width="1.7"/>
<rect x="1419.2" y="221.7" width="14.5" height="17.5" fill="none" stroke="#ffffff" stroke-width="1.7"/>
<rect x="1437.2" y="241.3" width="14.5" height="17.5" fill="none" stroke="#ffffff" stroke-width="1.7"/>
<rect x="1465.5" y="180.9" width="14.5" height="17.5" fill="none" stroke="#ffffff" stroke-width="1.7"/>
<rect x="1464.2" y="196.6" width="14.5" height="17.5" fill="none" stroke="#ffffff" stroke-width="1.7"/>
<rect x="1464.2" y="211.4" width="14.5" height="17.5" fill="none" stroke="#ffffff" stroke-width="1.7"/>
<rect x="1462.8" y="228.2" width="14.5" height="17.5" fill="none" stroke="#ffffff" stroke-width="1.7"/>
<rect x="1461.2" y="246.4" width="14.5" height="17.5" fill="none" stroke="#ffffff" stroke-width="1.7"/>
<rect x="1393.7" y="282.6" width="14.5" height="17.5" fill="none" stroke="#ffffff" stroke-width="1.7"/>
<rect x="1406.8" y="279.1" width="14.5" height="17.5" fill="none" stroke="#ffffff" stroke-width="1.7"/>
<rect x="1419.5" y="277.2" width="14.5" height="17.5" fill="none" stroke="#ffffff" stroke-width="1.7"/>
<rect x="1432.5" y="274.2" width="14.5" height="17.5" fill="none" stroke="#ffffff" stroke-width="1.7"/>
<rect x="1445.8" y="272.4" width="14.5" height="17.5" fill="none" stroke="#ffffff" stroke-width="1.7"/>
<rect x="1735.8" y="212.3" width="14.5" height="17.5" fill="none" stroke="#ffffff" stroke-width="1.7"/>
<rect x="1669.8" y="226.7" width="14.5" height="17.5" fill="none" stroke="#ffffff" stroke-width="1.7"/>
<rect x="1613.5" y="238.7" width="14.5" height="17.5" fill="none" stroke="#ffffff" stroke-width="1.7"/>
<rect x="1563.2" y="246.6" width="14.5" height="17.5" fill="none" stroke="#ffffff" stroke-width="1.7"/>
<rect x="1508.5" y="258.6" width="14.5" height="17.5" fill="none" stroke="#ffffff" stroke-width="1.7"/>
<rect x="1576.0" y="409.2" width="14.5" height="17.5" fill="none" stroke="#ffffff" stroke-width="1.7"/>
<rect x="1542.2" y="370.6" width="14.5" height="17.5" fill="none" stroke="#ffffff" stroke-width="1.7"/>
<rect x="1515.2" y="338.8" width="14.5" height="17.5" fill="none" stroke="#ffffff" stroke-width="1.7"/>
<rect x="1495.8" y="313.2" width="14.5" height="17.5" fill="none" stroke="#ffffff" stroke-width="1.7"/>
<rect x="1476.8" y="289.2" width="14.5" height="17.5" fill="none" stroke="#ffffff" stroke-width="1.7"/>
<rect x="1434.2" y="586.2" width="14.5" height="17.5" fill="none" stroke="#ffffff" stroke-width="1.7"/>
<rect x="1442.8" y="479.9" width="14.5" height="17.5" fill="none" stroke="#ffffff" stroke-width="1.7"/>
<rect x="1448.5" y="408.1" width="14.5" height="17.5" fill="none" stroke="#ffffff" stroke-width="1.7"/>
<rect x="1452.2" y="352.6" width="14.5" height="17.5" fill="none" stroke="#ffffff" stroke-width="1.7"/>
<rect x="1455.2" y="306.1" width="14.5" height="17.5" fill="none" stroke="#ffffff" stroke-width="1.7"/>
<ellipse cx="1330.9" cy="168.8" rx="4.6" ry="5.6" fill="#00c000" stroke="#111" stroke-width="1.2"/>
<ellipse cx="1352.0" cy="186.0" rx="4.6" ry="5.6" fill="#50b050" stroke="#111" stroke-width="1.2"/>
<ellipse cx="1377.0" cy="204.7" rx="4.6" ry="5.6" fill="#60b060" stroke="#111" stroke-width="1.2"/>
<ellipse cx="1402.4" cy="226.8" rx="4.6" ry="5.6" fill="#80b080" stroke="#111" stroke-width="1.2"/>
<ellipse cx="1433.5" cy="250.9" rx="4.6" ry="5.6" fill="#98b098" stroke="#111" stroke-width="1.2"/>
<ellipse cx="1475.3" cy="185.9" rx="4.6" ry="5.6" fill="#c0b800" stroke="#111" stroke-width="1.2"/>
<ellipse cx="1473.9" cy="201.1" rx="4.6" ry="5.6" fill="#b0b050" stroke="#111" stroke-width="1.2"/>
<ellipse cx="1472.8" cy="216.9" rx="4.6" ry="5.6" fill="#b8b870" stroke="#111" stroke-width="1.2"/>
<ellipse cx="1470.0" cy="235.0" rx="4.6" ry="5.6" fill="#b8b080" stroke="#111" stroke-width="1.2"/>
<ellipse cx="1468.5" cy="255.9" rx="4.6" ry="5.6" fill="#b8b898" stroke="#111" stroke-width="1.2"/>
<ellipse cx="1363.0" cy="296.3" rx="4.6" ry="5.6" fill="#00c0c0" stroke="#111" stroke-width="1.2"/>
<ellipse cx="1384.1" cy="290.9" rx="4.6" ry="5.6" fill="#50b0b0" stroke="#111" stroke-width="1.2"/>
<ellipse cx="1404.9" cy="287.7" rx="4.6" ry="5.6" fill="#70b0b0" stroke="#111" stroke-width="1.2"/>
<ellipse cx="1426.4" cy="284.7" rx="4.6" ry="5.6" fill="#88b0b0" stroke="#111" stroke-width="1.2"/>
<ellipse cx="1445.9" cy="280.9" rx="4.6" ry="5.6" fill="#a0b0b0" stroke="#111" stroke-width="1.2"/>
<ellipse cx="1771.5" cy="224.9" rx="4.6" ry="5.6" fill="#c00000" stroke="#111" stroke-width="1.2"/>
<ellipse cx="1722.0" cy="233.5" rx="4.6" ry="5.6" fill="#c04040" stroke="#111" stroke-width="1.2"/>
<ellipse cx="1661.8" cy="243.6" rx="4.6" ry="5.6" fill="#c05858" stroke="#111" stroke-width="1.2"/>
<ellipse cx="1604.0" cy="253.8" rx="4.6" ry="5.6" fill="#c07070" stroke="#111" stroke-width="1.2"/>
<ellipse cx="1534.5" cy="265.4" rx="4.6" ry="5.6" fill="#c09090" stroke="#111" stroke-width="1.2"/>
<ellipse cx="1616.0" cy="400.0" rx="4.6" ry="5.6" fill="#c000c0" stroke="#111" stroke-width="1.2"/>
<ellipse cx="1579.0" cy="369.3" rx="4.6" ry="5.6" fill="#c050c0" stroke="#111" stroke-width="1.2"/>
<ellipse cx="1546.0" cy="341.9" rx="4.6" ry="5.6" fill="#c070c0" stroke="#111" stroke-width="1.2"/>
<ellipse cx="1519.0" cy="319.8" rx="4.6" ry="5.6" fill="#c090c0" stroke="#111" stroke-width="1.2"/>
<ellipse cx="1491.0" cy="298.0" rx="4.6" ry="5.6" fill="#c0a8c0" stroke="#111" stroke-width="1.2"/>
<ellipse cx="1438.5" cy="596.6" rx="4.6" ry="5.6" fill="#0000c0" stroke="#111" stroke-width="1.2"/>
<ellipse cx="1447.0" cy="498.0" rx="4.6" ry="5.6" fill="#5050c0" stroke="#111" stroke-width="1.2"/>
<ellipse cx="1452.8" cy="424.0" rx="4.6" ry="5.6" fill="#7070c0" stroke="#111" stroke-width="1.2"/>
<ellipse cx="1458.8" cy="363.6" rx="4.6" ry="5.6" fill="#8888c0" stroke="#111" stroke-width="1.2"/>
<ellipse cx="1462.9" cy="316.8" rx="4.6" ry="5.6" fill="#a0a0c0" stroke="#111" stroke-width="1.2"/>
<rect x="1458.5" y="268.5" width="14.0" height="17.8" fill="none" stroke="#000000" stroke-width="1.9"/>
<ellipse cx="1465.9" cy="275.9" rx="4.6" ry="5.6" fill="#ffffff" stroke="#111" stroke-width="1.2"/>
<rect x="1784.0" y="647.9" width="15.5" height="17.5" fill="none" stroke="#ffffff" stroke-width="1.8"/>
<ellipse cx="1833.0" cy="623.0" rx="4.8" ry="5.8" fill="#c8c400" stroke="#111" stroke-width="1.2"/>
</svg>
</body></html>
